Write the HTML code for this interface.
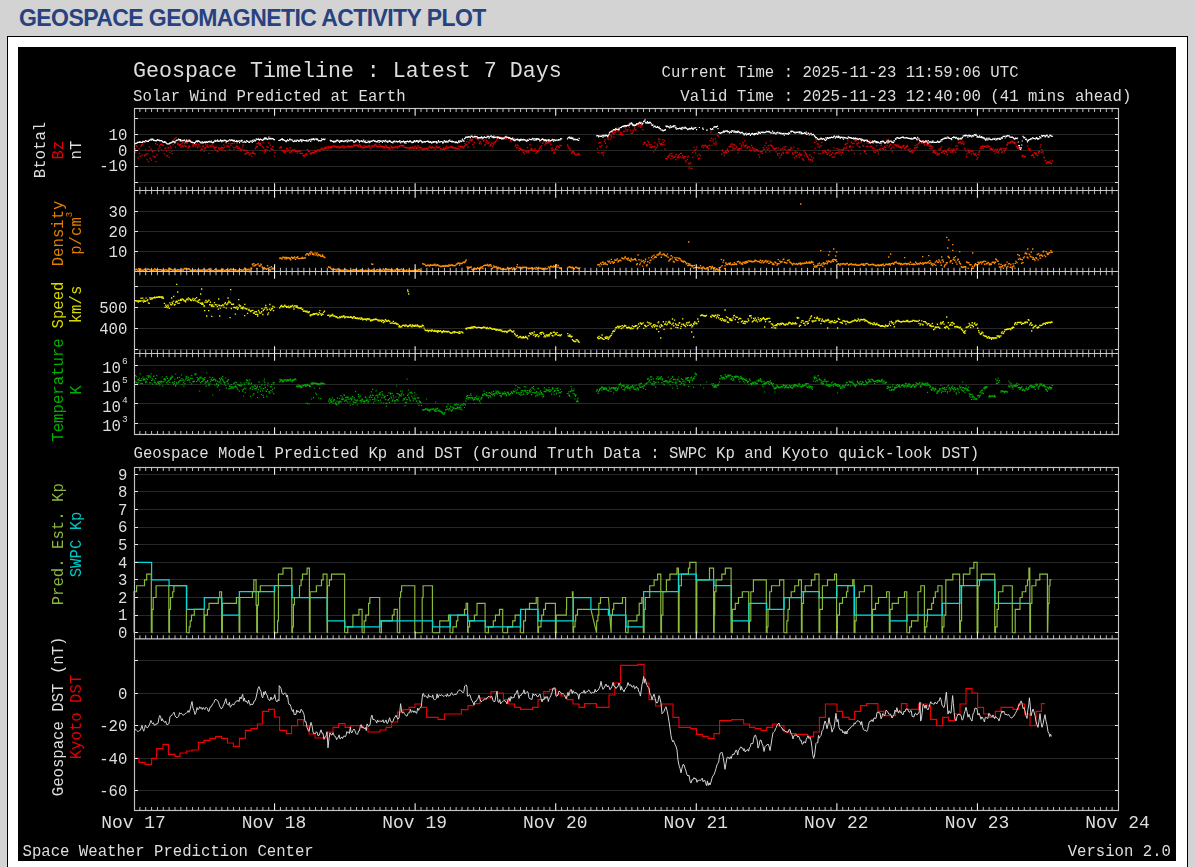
<!DOCTYPE html>
<html lang="en"><head><meta charset="utf-8"><title>Geospace Geomagnetic Activity Plot</title>
<style>
html,body{margin:0;padding:0}
body{background:#d3d3d3;width:1195px;height:867px;overflow:hidden;position:relative;font-family:"Liberation Sans",Arial,sans-serif}
h1{position:absolute;left:19px;top:4px;margin:0;font-size:23px;line-height:28px;font-weight:bold;color:#264280;letter-spacing:-0.58px;white-space:nowrap}
.box{position:absolute;left:7px;top:36px;width:1179px;height:840px;background:#fff;border:1px solid #000;box-sizing:content-box}
svg{position:absolute;left:18px;top:47px;display:block;will-change:transform;font-family:"Liberation Mono","DejaVu Sans Mono",monospace}
</style></head><body>
<h1>GEOSPACE GEOMAGNETIC ACTIVITY PLOT</h1>
<div class="box"></div>
<svg width="1158" height="814" viewBox="18 47 1158 814">
<rect x="18" y="47" width="1158" height="814" fill="#000"/>
<line x1="134.5" x2="1118.5" y1="118.5" y2="118.5" stroke="#282828" stroke-width="1"/>
<line x1="134.5" x2="1118.5" y1="134.5" y2="134.5" stroke="#282828" stroke-width="1"/>
<line x1="134.5" x2="1118.5" y1="150.5" y2="150.5" stroke="#282828" stroke-width="1"/>
<line x1="134.5" x2="1118.5" y1="166.5" y2="166.5" stroke="#282828" stroke-width="1"/>
<line x1="134.5" x2="1118.5" y1="182.5" y2="182.5" stroke="#282828" stroke-width="1"/>
<line x1="134.5" x2="1118.5" y1="211.5" y2="211.5" stroke="#282828" stroke-width="1"/>
<line x1="134.5" x2="1118.5" y1="231.5" y2="231.5" stroke="#282828" stroke-width="1"/>
<line x1="134.5" x2="1118.5" y1="251.5" y2="251.5" stroke="#282828" stroke-width="1"/>
<line x1="134.5" x2="1118.5" y1="286.5" y2="286.5" stroke="#282828" stroke-width="1"/>
<line x1="134.5" x2="1118.5" y1="307.5" y2="307.5" stroke="#282828" stroke-width="1"/>
<line x1="134.5" x2="1118.5" y1="328.5" y2="328.5" stroke="#282828" stroke-width="1"/>
<line x1="134.5" x2="1118.5" y1="349.5" y2="349.5" stroke="#282828" stroke-width="1"/>
<line x1="134.5" x2="1118.5" y1="365.5" y2="365.5" stroke="#282828" stroke-width="1"/>
<line x1="134.5" x2="1118.5" y1="384.5" y2="384.5" stroke="#282828" stroke-width="1"/>
<line x1="134.5" x2="1118.5" y1="403.5" y2="403.5" stroke="#282828" stroke-width="1"/>
<line x1="134.5" x2="1118.5" y1="423.5" y2="423.5" stroke="#282828" stroke-width="1"/>
<line x1="134.5" x2="1118.5" y1="474.5" y2="474.5" stroke="#282828" stroke-width="1"/>
<line x1="134.5" x2="1118.5" y1="491.5" y2="491.5" stroke="#282828" stroke-width="1"/>
<line x1="134.5" x2="1118.5" y1="509.5" y2="509.5" stroke="#282828" stroke-width="1"/>
<line x1="134.5" x2="1118.5" y1="527.5" y2="527.5" stroke="#282828" stroke-width="1"/>
<line x1="134.5" x2="1118.5" y1="544.5" y2="544.5" stroke="#282828" stroke-width="1"/>
<line x1="134.5" x2="1118.5" y1="562.5" y2="562.5" stroke="#282828" stroke-width="1"/>
<line x1="134.5" x2="1118.5" y1="579.5" y2="579.5" stroke="#282828" stroke-width="1"/>
<line x1="134.5" x2="1118.5" y1="597.5" y2="597.5" stroke="#282828" stroke-width="1"/>
<line x1="134.5" x2="1118.5" y1="615.5" y2="615.5" stroke="#282828" stroke-width="1"/>
<line x1="134.5" x2="1118.5" y1="632.5" y2="632.5" stroke="#282828" stroke-width="1"/>
<line x1="134.5" x2="1118.5" y1="660.5" y2="660.5" stroke="#282828" stroke-width="1"/>
<line x1="134.5" x2="1118.5" y1="693.5" y2="693.5" stroke="#282828" stroke-width="1"/>
<line x1="134.5" x2="1118.5" y1="725.5" y2="725.5" stroke="#282828" stroke-width="1"/>
<line x1="134.5" x2="1118.5" y1="758.5" y2="758.5" stroke="#282828" stroke-width="1"/>
<line x1="134.5" x2="1118.5" y1="790.5" y2="790.5" stroke="#282828" stroke-width="1"/>
<path d="M134.8 149.0h1.3M135.1 152.2h1.3M135.7 145.6h1.3M136.3 146.5h1.3M137.3 141.4h1.3M137.7 157.8h1.3M138.4 148.8h1.3M138.8 153.7h1.3M139.8 156.0h1.3M140.4 146.2h1.3M140.7 144.8h1.3M141.6 155.2h1.3M142.0 144.1h1.3M142.8 142.7h1.3M143.4 142.7h1.3M143.9 155.7h1.3M144.5 155.0h1.3M145.0 149.8h1.3M145.6 154.1h1.3M146.3 159.6h1.3M147.1 153.7h1.3M147.8 161.7h1.3M148.2 150.3h1.3M148.9 146.8h1.3M149.4 158.4h1.3M150.3 149.2h1.3M150.8 160.1h1.3M151.2 150.2h1.3M151.8 151.7h1.3M152.6 156.2h1.3M153.2 150.6h1.3M154.0 157.3h1.3M154.4 156.7h1.3M155.0 143.5h1.3M155.5 161.6h1.3M156.2 154.8h1.3M156.8 144.3h1.3M157.5 149.2h1.3M158.1 151.3h1.3M158.7 145.9h1.3M159.3 147.7h1.3M160.1 144.4h1.3M160.6 144.2h1.3M161.3 149.8h1.3M161.8 144.8h1.3M162.6 145.5h1.3M163.1 142.2h1.3M163.8 153.8h1.3M164.3 148.3h1.3M165.1 148.1h1.3M165.7 150.9h1.3M166.1 155.9h1.3M167.0 155.6h1.3M167.4 147.5h1.3M168.0 147.9h1.3M168.6 157.3h1.3M169.2 152.3h1.3M169.9 146.1h1.3M170.4 148.2h1.3M171.2 151.1h1.3M171.7 153.6h1.3M172.5 144.8h1.3M173.0 141.6h1.3M173.5 139.5h1.3M174.4 138.3h1.3M174.7 147.1h1.3M175.5 137.5h1.3M176.0 140.0h1.3M176.7 144.0h1.3M177.4 143.1h1.3M178.2 144.6h1.3M178.8 145.4h1.3M179.1 145.6h1.3M179.8 144.3h1.3M180.4 147.0h1.3M181.3 143.5h1.3M181.9 146.0h1.3M182.4 142.7h1.3M183.1 146.8h1.3M183.7 145.4h1.3M184.1 143.4h1.3M185.0 146.1h1.3M185.5 146.5h1.3M186.1 142.8h1.3M186.5 143.3h1.3M187.5 148.0h1.3M188.0 147.2h1.3M188.5 145.7h1.3M189.0 146.6h1.3M189.8 140.6h1.3M190.5 142.4h1.3M191.1 141.6h1.3M191.8 145.9h1.3M192.3 144.1h1.3M192.8 146.0h1.3M193.4 144.4h1.3M194.2 143.9h1.3M194.9 146.2h1.3M195.2 144.5h1.3M195.9 144.1h1.3M196.7 147.5h1.3M197.3 146.8h1.3M198.1 144.1h1.3M198.5 145.2h1.3M199.3 147.1h1.3M199.8 150.2h1.3M200.2 143.6h1.3M200.9 149.1h1.3M201.6 149.3h1.3M202.2 146.2h1.3M202.6 146.4h1.3M203.6 151.4h1.3M204.1 148.6h1.3M204.6 147.7h1.3M205.2 144.5h1.3M206.0 146.4h1.3M206.6 147.0h1.3M207.0 144.9h1.3M207.9 147.1h1.3M208.3 153.3h1.3M209.2 145.7h1.3M209.6 141.4h1.3M210.1 146.3h1.3M211.0 142.1h1.3M211.3 144.8h1.3M212.1 146.2h1.3M212.8 143.2h1.3M213.3 147.0h1.3M213.8 148.8h1.3M214.5 147.5h1.3M215.3 150.1h1.3M215.7 147.2h1.3M216.6 151.2h1.3M217.2 151.5h1.3M217.9 148.0h1.3M218.1 148.1h1.3M218.7 149.6h1.3M219.6 148.4h1.3M220.3 148.3h1.3M220.9 147.5h1.3M221.4 150.0h1.3M222.0 147.9h1.3M222.6 148.0h1.3M223.1 144.9h1.3M224.1 147.2h1.3M224.5 150.9h1.3M225.0 142.6h1.3M225.7 143.1h1.3M226.2 146.2h1.3M226.9 146.0h1.3M227.7 146.4h1.3M228.2 143.7h1.3M228.8 147.1h1.3M229.3 149.7h1.3M230.2 145.4h1.3M230.6 143.7h1.3M231.4 143.6h1.3M232.0 143.3h1.3M232.5 147.2h1.3M233.3 149.2h1.3M233.8 143.1h1.3M234.5 147.7h1.3M235.3 147.6h1.3M235.9 146.0h1.3M236.4 143.7h1.3M237.0 148.3h1.3M237.3 146.7h1.3M238.1 148.4h1.3M238.9 148.1h1.3M239.3 150.7h1.3M240.1 149.1h1.3M240.5 150.9h1.3M241.2 149.3h1.3M241.9 147.1h1.3M242.5 145.0h1.3M243.1 150.5h1.3M243.5 149.9h1.3M244.4 154.0h1.3M245.0 150.5h1.3M245.4 153.5h1.3M246.2 153.0h1.3M246.7 150.6h1.3M247.4 152.6h1.3M248.0 152.4h1.3M248.7 154.6h1.3M249.2 155.0h1.3M250.0 153.3h1.3M250.5 153.2h1.3M251.2 156.4h1.3M251.9 153.0h1.3M252.3 152.0h1.3M252.9 153.3h1.3M253.5 153.3h1.3M254.4 154.0h1.3M254.8 148.5h1.3M255.6 147.0h1.3M256.2 143.6h1.3M256.7 146.7h1.3M257.6 143.4h1.3M258.0 142.7h1.3M258.5 144.0h1.3M259.4 145.4h1.3M259.8 143.5h1.3M260.4 144.8h1.3M261.3 150.7h1.3M261.7 146.7h1.3M262.4 142.7h1.3M263.0 147.8h1.3M263.6 153.0h1.3M264.3 150.0h1.3M264.7 151.3h1.3M265.4 149.6h1.3M266.2 146.7h1.3M266.6 150.6h1.3M267.4 147.6h1.3M268.1 143.0h1.3M268.5 139.1h1.3M269.3 151.1h1.3M269.6 145.1h1.3M270.5 148.7h1.3M271.2 149.5h1.3M271.6 149.4h1.3M272.2 146.6h1.3M272.9 150.1h1.3M273.7 155.9h1.3M274.2 152.6h1.3M279.1 148.2h1.3M279.6 147.4h1.3M280.4 146.7h1.3M280.7 147.9h1.3M281.4 150.6h1.3M282.2 150.9h1.3M282.7 151.4h1.3M283.5 152.7h1.3M283.8 150.4h1.3M284.7 151.6h1.3M285.2 151.5h1.3M285.9 148.5h1.3M286.6 150.8h1.3M286.9 148.6h1.3M287.5 150.7h1.3M288.5 150.7h1.3M289.1 152.5h1.3M289.6 147.9h1.3M290.3 151.8h1.3M290.9 151.6h1.3M291.4 151.8h1.3M292.0 149.9h1.3M292.6 150.3h1.3M293.2 150.7h1.3M294.0 149.8h1.3M294.6 150.6h1.3M295.0 151.5h1.3M295.6 150.8h1.3M296.3 151.3h1.3M296.8 153.0h1.3M297.7 151.1h1.3M298.4 150.8h1.3M298.7 151.6h1.3M299.5 153.3h1.3M300.1 151.1h1.3M300.7 153.2h1.3M301.5 153.6h1.3M301.8 153.6h1.3M302.5 155.3h1.3M303.3 155.5h1.3M303.6 156.4h1.3M304.5 154.7h1.3M304.9 154.6h1.3M305.6 154.4h1.3M306.2 153.5h1.3M306.8 149.6h1.3M307.6 150.5h1.3M307.9 151.6h1.3M308.8 151.6h1.3M309.5 153.6h1.3M310.2 153.2h1.3M310.4 154.2h1.3M311.3 152.8h1.3M311.7 152.5h1.3M312.4 152.6h1.3M313.1 153.5h1.3M313.8 152.2h1.3M314.3 150.6h1.3M314.8 151.8h1.3M315.7 151.1h1.3M316.1 151.7h1.3M316.9 149.9h1.3M317.4 150.7h1.3M318.0 150.4h1.3M318.6 149.9h1.3M319.3 151.4h1.3M319.8 149.8h1.3M320.4 148.9h1.3M321.1 147.9h1.3M321.9 149.4h1.3M322.3 148.9h1.3M323.1 149.4h1.3M323.7 147.4h1.3M324.2 148.6h1.3M324.9 148.0h1.3M325.4 148.3h1.3M326.0 147.2h1.3M326.7 146.9h1.3M327.5 148.4h1.3M328.0 146.7h1.3M328.6 147.5h1.3M329.4 147.4h1.3M329.8 146.7h1.3M330.6 148.0h1.3M330.9 147.2h1.3M331.8 146.4h1.3M332.5 146.0h1.3M332.8 146.2h1.3M333.7 146.1h1.3M334.3 146.8h1.3M334.6 146.2h1.3M335.3 147.2h1.3M336.0 147.5h1.3M336.5 146.6h1.3M337.3 146.5h1.3M337.9 147.0h1.3M338.6 148.0h1.3M339.1 147.4h1.3M339.6 147.0h1.3M340.4 146.6h1.3M341.1 147.1h1.3M341.5 147.3h1.3M342.3 145.7h1.3M342.9 147.2h1.3M343.6 148.1h1.3M344.1 146.3h1.3M344.8 147.1h1.3M345.4 147.2h1.3M346.0 147.1h1.3M346.5 146.9h1.3M347.4 145.8h1.3M347.9 146.5h1.3M348.5 147.2h1.3M348.9 146.8h1.3M349.8 146.2h1.3M350.1 147.1h1.3M350.9 146.4h1.3M351.5 147.0h1.3M352.1 146.9h1.3M352.7 145.5h1.3M353.6 145.9h1.3M353.9 144.8h1.3M354.7 145.9h1.3M355.4 145.3h1.3M355.9 144.9h1.3M356.4 145.5h1.3M357.2 145.6h1.3M357.7 146.7h1.3M358.2 145.4h1.3M358.9 144.5h1.3M359.7 146.7h1.3M360.2 145.3h1.3M360.9 146.6h1.3M361.5 147.0h1.3M362.1 147.8h1.3M362.8 147.6h1.3M363.4 145.6h1.3M363.8 147.5h1.3M364.7 146.3h1.3M365.0 147.4h1.3M365.8 146.4h1.3M366.4 146.6h1.3M366.9 147.3h1.3M367.6 145.8h1.3M368.5 146.9h1.3M368.7 146.0h1.3M369.5 147.8h1.3M370.0 148.1h1.3M370.6 146.2h1.3M371.4 146.8h1.3M371.8 145.9h1.3M372.6 145.9h1.3M373.4 146.9h1.3M374.0 145.3h1.3M374.6 144.5h1.3M375.2 144.8h1.3M375.6 145.6h1.3M376.4 146.9h1.3M376.9 146.7h1.3M377.6 146.1h1.3M378.4 146.6h1.3M378.8 144.4h1.3M379.3 146.9h1.3M380.1 146.0h1.3M380.6 146.6h1.3M381.1 146.5h1.3M381.8 146.3h1.3M382.4 147.9h1.3M383.1 146.6h1.3M384.0 147.8h1.3M384.3 147.0h1.3M384.9 145.2h1.3M385.8 147.5h1.3M386.2 146.2h1.3M387.0 147.7h1.3M387.4 147.6h1.3M388.1 148.9h1.3M388.7 147.4h1.3M389.5 149.0h1.3M390.1 146.2h1.3M390.8 147.8h1.3M391.2 146.9h1.3M392.0 147.4h1.3M392.3 148.9h1.3M393.0 147.3h1.3M393.5 147.4h1.3M394.2 147.6h1.3M394.9 146.6h1.3M395.5 146.8h1.3M396.2 147.2h1.3M396.7 148.3h1.3M397.2 146.3h1.3M397.8 146.6h1.3M398.5 146.7h1.3M399.2 145.7h1.3M399.8 145.4h1.3M400.4 145.6h1.3M401.1 146.0h1.3M401.9 145.4h1.3M402.5 146.0h1.3M403.0 145.5h1.3M403.5 147.3h1.3M404.1 147.3h1.3M404.8 147.7h1.3M405.4 147.3h1.3M405.9 147.7h1.3M406.6 147.9h1.3M407.5 148.1h1.3M407.9 148.0h1.3M408.6 149.0h1.3M409.3 147.4h1.3M409.9 147.9h1.3M410.3 148.7h1.3M410.9 147.7h1.3M411.8 146.8h1.3M412.4 147.8h1.3M412.9 148.9h1.3M413.5 148.1h1.3M414.0 147.5h1.3M414.7 146.3h1.3M415.6 148.3h1.3M416.0 147.5h1.3M416.5 148.4h1.3M417.4 145.7h1.3M417.7 146.8h1.3M418.6 149.2h1.3M419.1 147.3h1.3M419.9 147.3h1.3M420.2 148.9h1.3M421.0 147.9h1.3M421.8 149.2h1.3M422.1 149.7h1.3M422.7 149.2h1.3M423.3 148.4h1.3M424.0 149.1h1.3M424.6 148.6h1.3M425.1 149.1h1.3M425.8 148.1h1.3M426.6 148.8h1.3M427.0 149.6h1.3M427.7 148.1h1.3M428.3 147.3h1.3M428.9 146.9h1.3M429.6 146.1h1.3M430.2 147.7h1.3M430.9 148.3h1.3M431.6 146.8h1.3M432.1 147.2h1.3M432.7 147.8h1.3M433.6 147.6h1.3M433.9 147.8h1.3M434.8 149.4h1.3M435.2 146.9h1.3M435.9 146.2h1.3M436.6 148.0h1.3M437.2 147.2h1.3M437.6 147.4h1.3M438.2 147.7h1.3M438.8 147.2h1.3M439.8 148.6h1.3M440.2 148.9h1.3M440.7 149.3h1.3M441.5 149.4h1.3M442.0 149.4h1.3M442.8 148.0h1.3M443.4 149.7h1.3M444.0 149.0h1.3M444.6 148.3h1.3M445.0 147.8h1.3M445.7 146.5h1.3M446.3 148.7h1.3M447.0 147.2h1.3M447.8 147.9h1.3M448.3 147.3h1.3M449.1 147.3h1.3M449.5 147.1h1.3M450.3 146.4h1.3M450.9 147.9h1.3M451.4 146.7h1.3M451.8 147.7h1.3M452.5 147.4h1.3M453.0 148.3h1.3M453.9 147.7h1.3M454.4 147.7h1.3M455.2 148.6h1.3M455.5 148.5h1.3M456.1 148.2h1.3M457.0 149.0h1.3M457.7 146.4h1.3M458.2 148.9h1.3M459.0 149.1h1.3M459.3 146.4h1.3M460.0 146.9h1.3M460.6 146.5h1.3M461.3 146.3h1.3M461.9 147.2h1.3M462.4 147.9h1.3M463.1 147.1h1.3M463.7 145.8h1.3M464.4 143.6h1.3M464.9 145.4h1.3M465.6 144.6h1.3M466.1 141.7h1.3M466.9 139.4h1.3M467.3 147.0h1.3M468.1 142.1h1.3M468.5 142.5h1.3M469.2 140.3h1.3M469.9 139.3h1.3M470.4 140.1h1.3M471.0 141.1h1.3M471.7 139.5h1.3M472.3 144.7h1.3M473.1 147.1h1.3M473.8 142.7h1.3M474.1 137.6h1.3M475.1 138.3h1.3M475.5 138.4h1.3M476.4 137.3h1.3M476.9 138.9h1.3M477.6 139.6h1.3M477.9 139.5h1.3M478.8 143.7h1.3M479.2 142.5h1.3M479.8 141.6h1.3M480.6 143.8h1.3M481.3 139.5h1.3M481.7 139.3h1.3M482.4 138.0h1.3M483.0 140.6h1.3M483.6 139.9h1.3M484.2 145.3h1.3M484.8 144.5h1.3M485.6 142.7h1.3M485.9 140.1h1.3M486.6 141.2h1.3M487.3 143.7h1.3M487.9 143.2h1.3M488.4 142.2h1.3M489.3 145.8h1.3M489.9 145.3h1.3M490.3 144.6h1.3M491.1 143.1h1.3M491.7 146.3h1.3M492.3 143.1h1.3M492.8 144.9h1.3M493.5 142.9h1.3M494.3 142.0h1.3M494.9 141.6h1.3M495.6 140.9h1.3M496.2 139.3h1.3M496.6 137.8h1.3M497.2 137.0h1.3M497.7 138.2h1.3M498.5 137.5h1.3M499.1 137.1h1.3M499.7 138.0h1.3M500.2 137.3h1.3M500.9 138.5h1.3M501.6 137.8h1.3M502.1 138.5h1.3M502.7 137.8h1.3M503.4 138.1h1.3M504.1 139.0h1.3M504.8 138.7h1.3M505.3 139.0h1.3M505.8 138.0h1.3M506.7 137.0h1.3M507.2 137.5h1.3M507.7 138.1h1.3M508.4 137.6h1.3M508.8 138.4h1.3M509.8 140.0h1.3M510.2 141.3h1.3M511.0 139.5h1.3M511.7 138.7h1.3M512.1 139.7h1.3M512.8 139.0h1.3M513.4 140.6h1.3M514.2 140.3h1.3M514.8 146.2h1.3M515.3 144.8h1.3M515.8 147.9h1.3M516.5 147.6h1.3M516.9 145.1h1.3M517.7 145.8h1.3M518.4 148.6h1.3M518.8 150.7h1.3M519.6 148.1h1.3M520.0 149.4h1.3M520.8 149.4h1.3M521.3 150.7h1.3M522.2 150.0h1.3M522.7 152.3h1.3M523.1 150.1h1.3M523.8 153.5h1.3M524.6 151.1h1.3M524.9 151.2h1.3M525.9 152.1h1.3M526.3 151.3h1.3M526.8 147.7h1.3M527.7 152.1h1.3M528.2 150.9h1.3M528.9 150.6h1.3M529.4 144.7h1.3M530.2 149.2h1.3M530.8 149.8h1.3M531.1 148.6h1.3M531.9 150.4h1.3M532.5 150.2h1.3M533.2 150.8h1.3M533.9 150.3h1.3M534.4 148.6h1.3M535.2 153.3h1.3M535.5 150.7h1.3M536.1 152.9h1.3M537.0 151.6h1.3M537.6 150.6h1.3M538.3 150.5h1.3M538.7 148.7h1.3M539.5 146.8h1.3M539.9 146.7h1.3M540.5 148.8h1.3M541.1 145.7h1.3M541.9 143.3h1.3M542.4 142.8h1.3M543.0 140.8h1.3M543.6 141.1h1.3M544.3 144.8h1.3M544.9 142.8h1.3M545.7 143.6h1.3M546.0 141.9h1.3M546.9 142.2h1.3M547.3 143.4h1.3M548.3 142.2h1.3M548.6 140.4h1.3M549.2 142.5h1.3M550.1 144.5h1.3M550.7 148.4h1.3M551.3 150.5h1.3M551.8 148.1h1.3M552.4 149.8h1.3M553.1 153.4h1.3M553.8 152.6h1.3M554.3 150.0h1.3M555.0 148.7h1.3M555.6 147.1h1.3M556.3 149.6h1.3M556.6 145.9h1.3M557.6 146.7h1.3M557.9 146.7h1.3M558.6 147.5h1.3M559.3 145.5h1.3M559.7 145.4h1.3M560.6 145.6h1.3M567.0 144.9h1.3M567.4 146.4h1.3M568.1 147.8h1.3M568.9 148.8h1.3M569.4 149.0h1.3M570.1 150.8h1.3M570.6 153.6h1.3M571.5 152.7h1.3M571.8 151.8h1.3M572.5 151.7h1.3M573.3 152.1h1.3M573.8 153.5h1.3M574.6 154.7h1.3M574.9 154.6h1.3M575.6 155.1h1.3M576.4 154.2h1.3M577.0 154.5h1.3M577.4 154.7h1.3M578.0 153.5h1.3M578.9 155.0h1.3M596.9 148.6h1.3M597.5 152.4h1.3M598.2 143.0h1.3M599.1 146.7h1.3M599.5 142.7h1.3M599.9 146.7h1.3M600.7 153.0h1.3M601.4 145.4h1.3M601.9 152.8h1.3M602.7 155.0h1.3M603.1 152.1h1.3M603.8 141.5h1.3M604.3 139.9h1.3M604.9 143.3h1.3M605.7 147.6h1.3M606.4 146.1h1.3M607.1 138.9h1.3M607.5 137.0h1.3M608.1 139.5h1.3M608.8 132.2h1.3M609.3 135.2h1.3M610.1 138.9h1.3M610.7 135.8h1.3M611.1 137.2h1.3M611.8 132.8h1.3M612.6 134.0h1.3M613.2 137.2h1.3M613.6 132.6h1.3M614.3 130.5h1.3M614.9 132.2h1.3M615.5 128.0h1.3M616.1 130.0h1.3M617.0 130.1h1.3M617.5 131.7h1.3M618.1 127.7h1.3M618.7 130.1h1.3M619.3 134.6h1.3M620.0 132.5h1.3M620.7 134.5h1.3M621.1 132.9h1.3M621.9 134.8h1.3M622.3 134.7h1.3M623.1 131.5h1.3M623.5 127.5h1.3M624.3 131.2h1.3M625.0 127.8h1.3M625.5 129.6h1.3M626.1 125.9h1.3M626.7 131.2h1.3M627.3 129.8h1.3M628.2 124.2h1.3M628.8 127.3h1.3M629.1 124.6h1.3M629.9 130.2h1.3M630.3 133.4h1.3M631.2 124.8h1.3M631.9 133.0h1.3M632.5 130.4h1.3M632.9 131.0h1.3M633.7 128.8h1.3M634.1 127.4h1.3M634.7 129.6h1.3M635.3 130.1h1.3M636.0 124.8h1.3M636.8 124.7h1.3M637.5 124.9h1.3M637.8 124.3h1.3M638.3 126.4h1.3M639.3 124.6h1.3M639.7 126.1h1.3M640.3 127.4h1.3M641.0 125.7h1.3M641.7 125.2h1.3M642.3 129.6h1.3M642.8 144.4h1.3M643.4 143.0h1.3M644.0 143.2h1.3M644.7 142.4h1.3M645.6 144.7h1.3M646.0 144.7h1.3M646.5 145.9h1.3M647.1 141.1h1.3M648.0 142.1h1.3M648.5 144.9h1.3M649.0 146.9h1.3M649.8 147.1h1.3M650.2 144.7h1.3M650.9 147.8h1.3M651.6 146.5h1.3M652.1 146.9h1.3M653.0 151.8h1.3M653.6 146.5h1.3M654.2 142.6h1.3M654.6 149.3h1.3M655.4 147.7h1.3M656.1 147.4h1.3M656.5 144.1h1.3M657.0 145.7h1.3M657.7 139.2h1.3M658.3 141.8h1.3M659.0 139.5h1.3M659.4 143.6h1.3M660.1 144.6h1.3M660.9 143.3h1.3M661.5 144.6h1.3M662.1 139.6h1.3M662.6 142.4h1.3M663.2 144.5h1.3M663.8 140.6h1.3M664.5 149.0h1.3M665.2 158.7h1.3M665.7 158.4h1.3M666.5 158.8h1.3M667.3 156.6h1.3M667.8 157.4h1.3M668.3 155.6h1.3M668.7 155.4h1.3M669.6 153.9h1.3M670.1 158.9h1.3M670.7 155.8h1.3M671.2 153.5h1.3M671.9 156.0h1.3M672.7 158.2h1.3M673.4 157.2h1.3M673.7 157.3h1.3M674.6 156.5h1.3M675.3 159.5h1.3M675.5 154.7h1.3M676.5 157.1h1.3M677.0 157.7h1.3M677.8 156.0h1.3M678.3 157.6h1.3M678.8 154.6h1.3M679.5 156.8h1.3M679.9 153.3h1.3M680.8 153.4h1.3M681.4 157.8h1.3M681.9 155.4h1.3M682.4 157.0h1.3M683.3 158.4h1.3M683.8 156.7h1.3M684.4 156.3h1.3M684.9 160.7h1.3M685.5 162.2h1.3M686.4 157.2h1.3M686.8 159.7h1.3M687.6 156.2h1.3M688.0 163.5h1.3M688.6 168.0h1.3M689.3 163.8h1.3M690.2 162.7h1.3M690.6 168.3h1.3M691.4 168.4h1.3M692.0 157.3h1.3M692.3 152.3h1.3M693.3 147.3h1.3M693.9 150.9h1.3M694.4 150.2h1.3M695.0 153.1h1.3M695.5 149.2h1.3M696.2 147.1h1.3M696.9 155.9h1.3M697.4 159.1h1.3M697.9 158.3h1.3M698.6 154.4h1.3M699.1 158.1h1.3M699.8 155.6h1.3M701.0 146.9h1.3M701.8 145.4h1.3M702.2 145.5h1.3M702.8 147.8h1.3M703.4 145.8h1.3M704.0 145.9h1.3M704.6 145.1h1.3M705.3 145.9h1.3M706.0 147.1h1.3M706.7 147.7h1.3M707.1 146.4h1.3M707.9 148.7h1.3M708.5 145.3h1.3M709.0 145.3h1.3M709.8 140.3h1.3M710.2 132.2h1.3M710.9 138.4h1.3M711.4 145.4h1.3M712.3 141.1h1.3M712.7 139.1h1.3M713.4 143.3h1.3M714.1 144.2h1.3M714.7 138.9h1.3M715.2 142.0h1.3M716.1 143.8h1.3M716.3 133.7h1.3M717.0 135.6h1.3M717.8 136.2h1.3M721.0 154.2h1.3M721.6 149.9h1.3M722.1 151.2h1.3M722.8 152.8h1.3M723.6 155.5h1.3M724.1 153.0h1.3M724.9 152.0h1.3M725.2 151.1h1.3M725.9 152.5h1.3M726.7 149.2h1.3M727.1 150.5h1.3M727.8 151.5h1.3M728.4 146.3h1.3M729.1 147.2h1.3M729.9 146.9h1.3M730.2 145.0h1.3M731.0 143.9h1.3M731.7 146.9h1.3M732.3 149.5h1.3M732.6 144.4h1.3M733.3 148.4h1.3M733.8 145.0h1.3M734.6 148.7h1.3M735.4 146.2h1.3M736.1 147.5h1.3M736.7 149.6h1.3M737.2 153.2h1.3M737.8 148.9h1.3M738.3 150.0h1.3M739.1 148.5h1.3M739.6 143.9h1.3M740.2 148.4h1.3M741.0 145.4h1.3M741.3 146.8h1.3M742.2 142.3h1.3M742.6 144.1h1.3M743.5 145.9h1.3M744.1 140.7h1.3M744.6 146.6h1.3M745.0 145.4h1.3M745.8 145.1h1.3M746.4 148.0h1.3M746.9 147.1h1.3M747.7 146.6h1.3M748.3 146.7h1.3M748.9 150.1h1.3M749.4 147.9h1.3M750.2 150.4h1.3M750.9 145.4h1.3M751.4 147.2h1.3M752.1 147.7h1.3M752.5 149.0h1.3M753.3 151.1h1.3M754.0 148.8h1.3M754.6 150.4h1.3M755.1 151.0h1.3M755.6 149.4h1.3M756.5 149.6h1.3M757.1 150.5h1.3M757.7 151.3h1.3M758.1 155.0h1.3M758.9 157.2h1.3M759.6 151.7h1.3M759.9 151.9h1.3M760.6 151.8h1.3M761.5 151.5h1.3M761.8 153.4h1.3M762.5 147.6h1.3M763.2 149.4h1.3M763.9 149.1h1.3M764.4 145.9h1.3M765.2 152.0h1.3M765.5 143.0h1.3M766.1 147.7h1.3M766.8 149.4h1.3M767.6 145.6h1.3M768.0 148.1h1.3M768.9 151.9h1.3M769.4 145.2h1.3M770.1 141.2h1.3M770.6 145.5h1.3M771.3 146.5h1.3M771.7 146.1h1.3M772.5 148.2h1.3M773.0 148.2h1.3M773.6 149.5h1.3M774.4 149.0h1.3M774.9 148.4h1.3M775.4 151.9h1.3M776.3 148.2h1.3M776.9 153.7h1.3M777.2 155.4h1.3M778.1 148.2h1.3M778.6 153.5h1.3M779.3 157.5h1.3M780.1 149.4h1.3M780.6 155.3h1.3M781.1 154.1h1.3M781.8 148.5h1.3M782.5 152.4h1.3M782.9 153.0h1.3M783.5 147.2h1.3M784.3 149.3h1.3M784.9 146.7h1.3M785.5 152.6h1.3M786.2 150.8h1.3M786.5 153.7h1.3M787.3 152.6h1.3M787.9 149.3h1.3M788.5 150.3h1.3M789.3 150.1h1.3M789.7 149.4h1.3M790.4 147.5h1.3M791.2 148.6h1.3M791.8 153.0h1.3M792.4 154.3h1.3M793.1 147.1h1.3M793.7 157.8h1.3M794.4 152.5h1.3M795.0 152.0h1.3M795.4 156.3h1.3M796.2 155.9h1.3M796.6 152.5h1.3M797.2 148.5h1.3M797.8 154.7h1.3M798.7 157.1h1.3M799.0 153.2h1.3M799.7 154.5h1.3M800.4 155.7h1.3M801.1 154.6h1.3M801.6 158.9h1.3M802.3 159.2h1.3M802.9 160.3h1.3M803.6 151.0h1.3M804.2 155.7h1.3M804.7 152.3h1.3M805.2 153.5h1.3M805.8 154.6h1.3M806.6 156.5h1.3M807.2 157.0h1.3M807.8 158.9h1.3M808.3 159.8h1.3M809.2 155.0h1.3M809.9 159.3h1.3M810.1 160.0h1.3M811.0 157.1h1.3M811.6 159.9h1.3M812.2 161.3h1.3M812.8 158.1h1.3M813.4 152.3h1.3M814.1 142.4h1.3M814.5 148.4h1.3M815.3 139.3h1.3M815.9 141.1h1.3M816.6 143.8h1.3M817.2 146.9h1.3M817.8 144.1h1.3M818.2 153.7h1.3M818.9 147.7h1.3M819.4 146.1h1.3M820.2 153.7h1.3M820.7 145.6h1.3M821.2 142.6h1.3M822.1 152.3h1.3M822.6 150.9h1.3M823.2 153.2h1.3M824.0 150.8h1.3M824.5 151.1h1.3M825.0 151.8h1.3M825.6 152.4h1.3M826.6 154.5h1.3M827.0 150.5h1.3M827.7 149.7h1.3M828.1 153.1h1.3M828.9 155.6h1.3M829.4 151.5h1.3M830.3 154.4h1.3M830.6 154.9h1.3M831.5 157.2h1.3M831.8 153.0h1.3M832.6 157.1h1.3M833.3 147.8h1.3M833.9 157.2h1.3M834.4 154.1h1.3M835.0 153.5h1.3M835.9 152.7h1.3M836.4 148.4h1.3M836.9 152.7h1.3M837.7 149.4h1.3M838.2 151.5h1.3M838.6 153.1h1.3M839.3 149.7h1.3M840.0 152.2h1.3M840.5 155.2h1.3M841.3 150.0h1.3M841.8 152.4h1.3M842.6 149.7h1.3M843.1 148.4h1.3M843.9 147.8h1.3M844.5 144.5h1.3M845.1 148.4h1.3M845.7 143.9h1.3M846.1 147.2h1.3M846.9 143.2h1.3M847.3 140.9h1.3M848.0 150.9h1.3M848.8 146.7h1.3M849.2 147.5h1.3M849.9 146.0h1.3M850.6 142.4h1.3M851.2 149.7h1.3M851.9 143.5h1.3M852.4 147.2h1.3M853.2 143.3h1.3M853.8 153.5h1.3M854.4 141.2h1.3M854.7 140.0h1.3M855.5 140.5h1.3M856.1 144.2h1.3M856.7 143.6h1.3M857.2 146.2h1.3M857.9 143.0h1.3M858.8 147.2h1.3M859.2 147.0h1.3M859.9 153.7h1.3M860.5 142.3h1.3M861.0 140.5h1.3M861.8 139.9h1.3M862.3 145.4h1.3M863.0 146.3h1.3M863.8 151.8h1.3M864.0 151.0h1.3M864.6 151.4h1.3M865.5 153.6h1.3M866.2 146.4h1.3M866.6 142.9h1.3M867.2 146.4h1.3M868.1 143.4h1.3M868.5 142.2h1.3M869.4 140.1h1.3M869.9 146.3h1.3M870.4 142.3h1.3M871.1 146.3h1.3M871.8 142.3h1.3M872.2 148.0h1.3M873.1 151.9h1.3M873.3 148.4h1.3M874.3 150.2h1.3M874.7 152.4h1.3M875.5 150.7h1.3M876.1 145.7h1.3M876.6 149.7h1.3M877.3 151.3h1.3M877.7 153.5h1.3M878.6 149.6h1.3M879.2 149.0h1.3M879.8 149.2h1.3M880.5 145.5h1.3M880.9 143.7h1.3M881.7 148.6h1.3M882.2 148.6h1.3M882.9 149.3h1.3M883.4 147.6h1.3M883.9 147.0h1.3M884.7 150.0h1.3M885.1 147.4h1.3M885.9 140.3h1.3M886.4 145.5h1.3M887.2 139.9h1.3M887.8 139.4h1.3M888.4 147.0h1.3M889.1 145.1h1.3M889.8 144.5h1.3M890.3 148.9h1.3M890.7 148.2h1.3M891.7 151.8h1.3M892.0 146.8h1.3M892.6 143.6h1.3M893.4 147.8h1.3M894.1 144.6h1.3M894.7 145.2h1.3M895.4 145.9h1.3M895.9 145.1h1.3M896.4 146.0h1.3M897.2 145.0h1.3M897.9 146.2h1.3M898.2 147.2h1.3M899.1 147.7h1.3M899.4 146.7h1.3M900.3 147.5h1.3M900.9 148.5h1.3M901.6 146.5h1.3M902.2 146.5h1.3M902.7 145.8h1.3M903.1 145.3h1.3M903.7 148.3h1.3M904.7 147.0h1.3M905.3 147.5h1.3M905.6 146.7h1.3M906.6 145.5h1.3M906.9 146.4h1.3M907.5 149.3h1.3M908.4 150.5h1.3M909.0 151.7h1.3M909.3 149.2h1.3M909.9 151.8h1.3M910.8 151.9h1.3M911.2 151.0h1.3M912.0 152.5h1.3M912.5 150.1h1.3M913.3 150.9h1.3M913.8 148.0h1.3M914.6 145.5h1.3M914.9 147.9h1.3M915.7 147.6h1.3M916.2 145.1h1.3M916.9 146.9h1.3M917.3 144.1h1.3M918.2 143.2h1.3M918.9 143.0h1.3M919.2 141.6h1.3M920.1 140.7h1.3M920.7 141.4h1.3M921.3 143.3h1.3M921.9 141.5h1.3M922.4 142.8h1.3M923.1 143.4h1.3M923.7 145.0h1.3M924.4 142.6h1.3M925.1 140.6h1.3M925.6 142.0h1.3M926.2 144.4h1.3M926.8 145.3h1.3M927.3 144.0h1.3M928.0 144.3h1.3M928.8 146.3h1.3M929.4 148.5h1.3M929.8 145.3h1.3M930.5 146.0h1.3M931.3 148.8h1.3M931.7 146.8h1.3M932.4 152.0h1.3M933.1 151.0h1.3M933.5 152.5h1.3M934.3 150.5h1.3M934.7 153.3h1.3M935.3 152.4h1.3M936.3 154.8h1.3M936.9 153.5h1.3M937.5 154.8h1.3M938.1 149.2h1.3M938.7 153.6h1.3M939.3 149.7h1.3M939.9 148.5h1.3M940.6 152.6h1.3M940.9 146.9h1.3M941.8 152.0h1.3M942.4 151.8h1.3M943.1 150.9h1.3M943.7 153.5h1.3M944.1 150.6h1.3M945.0 151.5h1.3M945.4 150.9h1.3M946.1 152.2h1.3M946.6 154.6h1.3M947.2 149.5h1.3M947.7 149.2h1.3M948.6 150.2h1.3M949.1 148.2h1.3M949.8 150.8h1.3M950.3 152.4h1.3M951.2 149.3h1.3M951.6 151.0h1.3M952.2 152.0h1.3M952.7 150.2h1.3M953.4 149.0h1.3M954.3 150.6h1.3M954.9 152.3h1.3M955.3 145.9h1.3M956.1 149.0h1.3M956.8 146.1h1.3M957.1 148.9h1.3M958.0 143.2h1.3M958.4 142.7h1.3M958.9 142.2h1.3M959.8 142.0h1.3M960.4 143.9h1.3M961.0 143.4h1.3M961.5 143.0h1.3M962.1 141.2h1.3M962.9 144.3h1.3M963.5 143.1h1.3M964.2 148.4h1.3M964.5 149.0h1.3M965.4 151.0h1.3M965.7 156.5h1.3M966.4 153.9h1.3M967.3 149.3h1.3M967.6 152.2h1.3M968.2 151.2h1.3M968.9 152.5h1.3M969.5 150.6h1.3M970.2 150.9h1.3M970.7 154.1h1.3M971.4 151.0h1.3M972.1 151.3h1.3M972.6 153.2h1.3M973.4 153.8h1.3M973.8 154.8h1.3M974.6 154.8h1.3M975.2 153.5h1.3M975.7 155.6h1.3M976.3 159.4h1.3M977.1 157.9h1.3M977.5 154.7h1.3M978.4 152.4h1.3M978.8 151.4h1.3M979.5 148.7h1.3M980.0 146.8h1.3M980.8 147.8h1.3M981.5 146.6h1.3M981.9 146.0h1.3M982.6 148.7h1.3M983.1 146.3h1.3M984.0 146.3h1.3M984.7 146.0h1.3M985.0 146.8h1.3M985.7 147.0h1.3M986.4 147.3h1.3M986.9 145.3h1.3M987.4 145.7h1.3M988.1 146.7h1.3M989.0 146.6h1.3M989.3 148.6h1.3M990.2 149.7h1.3M990.7 148.5h1.3M991.5 149.9h1.3M991.8 149.6h1.3M992.6 148.6h1.3M993.3 151.3h1.3M993.9 150.1h1.3M994.4 153.4h1.3M995.1 149.2h1.3M995.9 151.8h1.3M996.4 150.4h1.3M997.1 149.1h1.3M997.4 152.6h1.3M998.2 151.7h1.3M998.9 149.6h1.3M999.4 149.4h1.3M1000.2 148.1h1.3M1000.7 149.1h1.3M1001.1 152.3h1.3M1001.7 151.9h1.3M1002.5 148.4h1.3M1003.1 150.3h1.3M1003.7 151.8h1.3M1004.3 148.6h1.3M1004.9 149.5h1.3M1005.7 148.2h1.3M1006.2 145.2h1.3M1006.6 144.5h1.3M1007.3 142.9h1.3M1008.1 142.8h1.3M1008.6 143.1h1.3M1009.4 143.0h1.3M1009.8 142.0h1.3M1010.5 141.9h1.3M1011.3 141.0h1.3M1011.8 141.8h1.3M1012.3 142.0h1.3M1013.1 142.5h1.3M1013.7 143.7h1.3M1014.3 143.0h1.3M1015.0 142.8h1.3M1015.3 145.1h1.3M1016.1 146.7h1.3M1016.9 148.4h1.3M1017.4 147.2h1.3M1017.9 148.1h1.3M1018.7 149.3h1.3M1019.4 148.4h1.3M1019.9 149.1h1.3M1020.6 149.1h1.3M1021.5 156.5h1.3M1022.1 155.3h1.3M1022.5 155.9h1.3M1023.2 155.9h1.3M1023.8 156.4h1.3M1024.5 156.5h1.3M1026.9 146.1h1.3M1027.8 148.3h1.3M1028.4 149.2h1.3M1028.7 150.1h1.3M1029.4 148.8h1.3M1030.1 150.9h1.3M1030.9 155.5h1.3M1031.5 155.3h1.3M1032.0 154.3h1.3M1032.7 155.9h1.3M1033.3 157.3h1.3M1033.8 152.6h1.3M1034.5 153.1h1.3M1035.0 154.1h1.3M1035.7 153.3h1.3M1036.2 155.2h1.3M1036.9 155.6h1.3M1037.7 151.7h1.3M1038.0 152.8h1.3M1038.9 151.3h1.3M1039.6 147.1h1.3M1040.1 144.9h1.3M1040.6 152.3h1.3M1041.3 149.6h1.3M1042.1 151.7h1.3M1042.4 153.1h1.3M1043.3 157.4h1.3M1043.7 157.6h1.3M1044.5 160.8h1.3M1045.0 160.6h1.3M1045.5 163.6h1.3M1046.2 162.6h1.3M1046.9 162.0h1.3M1047.6 162.0h1.3M1047.9 162.4h1.3M1048.7 162.7h1.3M1049.5 161.1h1.3M1049.9 163.1h1.3M1050.5 163.7h1.3M1051.0 163.1h1.3M1051.9 161.0h1.3" stroke="#e00000" stroke-width="1.3" fill="none"/>
<path d="M134.9 143.7h1.2M135.7 143.0h1.2M136.3 143.4h1.2M136.9 142.5h1.2M137.5 142.3h1.2M138.0 142.5h1.2M138.9 142.5h1.2M139.3 141.5h1.2M139.8 142.0h1.2M140.4 142.4h1.2M141.4 142.4h1.2M141.9 142.3h1.2M142.3 141.3h1.2M142.9 141.5h1.2M143.8 141.5h1.2M144.3 141.8h1.2M144.9 140.5h1.2M145.4 140.7h1.2M146.2 141.5h1.2M147.0 141.5h1.2M147.2 141.0h1.2M147.9 141.4h1.2M148.5 140.3h1.2M149.1 140.2h1.2M149.8 139.8h1.2M150.5 139.2h1.2M151.2 140.1h1.2M151.8 139.2h1.2M152.5 139.4h1.2M153.0 140.3h1.2M153.8 140.4h1.2M154.3 140.6h1.2M154.8 140.6h1.2M155.5 141.0h1.2M155.9 140.3h1.2M156.9 139.7h1.2M157.3 140.2h1.2M157.7 140.3h1.2M158.5 140.1h1.2M159.2 141.0h1.2M159.8 140.6h1.2M160.2 140.6h1.2M161.1 140.6h1.2M161.6 141.4h1.2M162.2 141.8h1.2M162.7 142.1h1.2M163.6 142.5h1.2M164.0 141.6h1.2M165.0 142.1h1.2M165.6 143.2h1.2M165.8 143.0h1.2M166.6 143.9h1.2M167.2 144.0h1.2M168.0 143.8h1.2M168.6 143.9h1.2M169.1 143.2h1.2M169.9 143.1h1.2M170.4 142.7h1.2M171.0 142.6h1.2M171.5 142.2h1.2M172.4 141.0h1.2M172.7 141.9h1.2M173.5 141.7h1.2M174.2 142.8h1.2M174.8 142.0h1.2M175.5 140.7h1.2M175.8 140.6h1.2M176.7 140.0h1.2M177.2 140.1h1.2M178.0 139.0h1.2M178.5 139.6h1.2M178.9 139.6h1.2M179.6 140.8h1.2M180.1 139.7h1.2M180.8 141.0h1.2M181.3 140.8h1.2M182.3 140.3h1.2M182.7 140.7h1.2M183.5 140.4h1.2M184.0 140.0h1.2M184.6 142.0h1.2M185.4 140.9h1.2M186.0 140.2h1.2M186.3 141.7h1.2M187.0 141.1h1.2M187.9 141.1h1.2M188.4 140.2h1.2M189.1 140.4h1.2M189.4 141.3h1.2M190.0 141.3h1.2M190.7 142.4h1.2M191.5 142.2h1.2M192.2 142.6h1.2M192.5 142.5h1.2M193.3 142.5h1.2M193.9 143.3h1.2M194.6 142.5h1.2M195.2 141.3h1.2M195.9 141.4h1.2M196.3 140.9h1.2M196.8 141.8h1.2M197.6 140.5h1.2M198.1 141.4h1.2M198.8 141.4h1.2M199.4 142.2h1.2M200.0 142.3h1.2M200.7 143.0h1.2M201.5 141.6h1.2M202.0 142.8h1.2M202.6 143.0h1.2M203.1 142.7h1.2M203.7 141.9h1.2M204.4 142.4h1.2M205.1 142.6h1.2M205.5 141.7h1.2M206.3 142.1h1.2M206.8 142.5h1.2M207.6 141.6h1.2M208.1 141.9h1.2M208.6 141.3h1.2M209.3 141.9h1.2M209.9 141.9h1.2M210.8 141.0h1.2M211.3 142.3h1.2M211.8 142.7h1.2M212.7 142.3h1.2M213.0 142.2h1.2M213.5 141.7h1.2M214.3 140.4h1.2M215.0 141.4h1.2M215.6 140.8h1.2M216.2 140.9h1.2M217.0 140.2h1.2M217.3 141.2h1.2M218.3 141.4h1.2M218.6 141.2h1.2M219.4 140.8h1.2M220.0 139.9h1.2M220.7 140.8h1.2M221.2 141.7h1.2M221.7 140.7h1.2M222.4 140.9h1.2M222.9 140.8h1.2M223.6 140.1h1.2M224.4 140.7h1.2M225.1 140.4h1.2M225.7 141.8h1.2M226.0 141.0h1.2M226.7 141.4h1.2M227.6 140.9h1.2M227.8 140.9h1.2M228.8 139.9h1.2M229.0 139.8h1.2M229.7 140.7h1.2M230.6 139.8h1.2M231.2 140.4h1.2M231.5 139.9h1.2M232.2 140.7h1.2M233.2 140.4h1.2M233.4 141.5h1.2M234.0 140.3h1.2M235.0 141.5h1.2M235.6 141.5h1.2M236.1 140.5h1.2M236.5 141.8h1.2M237.1 141.3h1.2M237.9 141.2h1.2M238.6 140.8h1.2M239.0 142.6h1.2M239.7 141.0h1.2M240.6 141.4h1.2M240.8 140.3h1.2M241.5 140.4h1.2M242.2 142.1h1.2M243.0 142.0h1.2M243.3 142.2h1.2M244.2 141.4h1.2M244.7 142.0h1.2M245.3 142.3h1.2M246.1 140.6h1.2M246.7 141.4h1.2M247.1 141.4h1.2M247.9 142.1h1.2M248.3 142.2h1.2M249.0 142.4h1.2M249.6 141.2h1.2M250.5 141.0h1.2M251.0 141.1h1.2M251.7 142.4h1.2M252.1 140.3h1.2M252.7 141.4h1.2M253.6 139.9h1.2M254.2 140.9h1.2M254.8 140.9h1.2M255.2 140.4h1.2M255.7 138.9h1.2M256.6 139.3h1.2M257.3 139.5h1.2M257.9 138.8h1.2M258.6 140.1h1.2M259.0 139.7h1.2M259.8 139.1h1.2M260.4 139.5h1.2M260.8 139.7h1.2M261.6 140.2h1.2M262.2 140.3h1.2M262.9 139.1h1.2M263.5 139.4h1.2M264.0 138.2h1.2M264.5 137.8h1.2M265.0 139.0h1.2M265.7 138.2h1.2M266.3 139.1h1.2M267.0 139.4h1.2M267.7 138.9h1.2M268.3 137.1h1.2M269.0 138.6h1.2M269.6 138.8h1.2M270.0 138.4h1.2M270.9 138.8h1.2M271.6 138.5h1.2M272.1 138.7h1.2M272.8 139.0h1.2M273.2 139.7h1.2M273.9 139.6h1.2M278.3 140.5h1.2M278.9 140.4h1.2M279.4 140.4h1.2M280.2 139.7h1.2M281.0 139.4h1.2M281.6 138.7h1.2M282.0 139.8h1.2M282.7 139.6h1.2M283.4 140.1h1.2M283.9 140.5h1.2M284.7 140.8h1.2M285.4 141.4h1.2M285.7 141.7h1.2M286.3 140.6h1.2M287.0 139.9h1.2M287.8 140.7h1.2M288.2 140.7h1.2M289.0 139.3h1.2M289.5 139.0h1.2M290.3 140.0h1.2M290.7 139.9h1.2M291.4 139.8h1.2M292.1 141.0h1.2M292.8 141.4h1.2M293.3 141.7h1.2M294.0 140.8h1.2M294.4 140.3h1.2M295.3 141.5h1.2M295.8 141.2h1.2M296.4 140.0h1.2M297.1 140.3h1.2M297.8 140.9h1.2M298.3 141.4h1.2M298.7 140.9h1.2M299.5 140.1h1.2M300.3 139.6h1.2M300.7 140.9h1.2M301.3 141.7h1.2M301.8 140.1h1.2M302.7 140.2h1.2M303.0 140.5h1.2M304.0 140.5h1.2M304.3 140.6h1.2M304.9 140.7h1.2M305.6 140.9h1.2M306.2 140.2h1.2M306.8 141.0h1.2M307.6 141.1h1.2M308.3 140.2h1.2M308.8 139.5h1.2M309.4 139.9h1.2M310.1 141.3h1.2M310.6 139.2h1.2M311.1 139.8h1.2M311.9 139.1h1.2M312.3 139.3h1.2M312.9 138.6h1.2M313.7 139.9h1.2M314.4 139.2h1.2M315.0 139.0h1.2M315.8 138.8h1.2M316.2 139.7h1.2M316.9 139.1h1.2M317.4 140.2h1.2M318.0 140.9h1.2M318.8 140.6h1.2M319.1 140.5h1.2M320.1 140.8h1.2M320.7 140.7h1.2M321.0 138.9h1.2M321.9 139.7h1.2M322.6 139.4h1.2M322.8 139.2h1.2M323.9 139.6h1.2M324.3 139.1h1.2M329.7 140.3h1.2M330.1 140.8h1.2M330.8 140.5h1.2M331.4 141.2h1.2M332.0 141.4h1.2M332.9 142.2h1.2M333.1 141.3h1.2M334.1 141.8h1.2M334.5 141.0h1.2M335.1 141.6h1.2M335.8 140.9h1.2M336.4 140.1h1.2M337.1 140.4h1.2M337.7 141.1h1.2M338.3 141.1h1.2M339.0 142.4h1.2M339.7 140.9h1.2M340.3 141.3h1.2M340.6 140.6h1.2M341.2 141.4h1.2M341.8 140.8h1.2M342.8 141.3h1.2M343.4 141.6h1.2M343.7 141.2h1.2M344.6 141.2h1.2M345.1 140.6h1.2M345.6 140.4h1.2M346.5 141.9h1.2M346.9 141.5h1.2M347.4 140.1h1.2M348.0 141.0h1.2M348.8 140.8h1.2M349.4 140.9h1.2M350.1 140.6h1.2M350.5 140.2h1.2M351.2 140.7h1.2M351.8 140.5h1.2M352.6 141.1h1.2M353.0 142.1h1.2M353.8 142.2h1.2M354.5 141.8h1.2M354.9 140.8h1.2M355.5 141.5h1.2M356.2 140.0h1.2M356.7 140.1h1.2M357.7 140.4h1.2M358.3 140.9h1.2M358.8 142.1h1.2M359.4 141.2h1.2M360.1 141.2h1.2M360.6 141.2h1.2M361.3 140.7h1.2M361.7 141.5h1.2M362.4 141.8h1.2M363.0 140.2h1.2M363.8 141.3h1.2M364.2 142.1h1.2M365.1 141.1h1.2M365.4 142.6h1.2M366.3 142.5h1.2M366.7 142.5h1.2M367.4 141.2h1.2M368.2 141.7h1.2M368.6 142.7h1.2M369.3 141.2h1.2M369.8 142.0h1.2M370.7 141.5h1.2M371.0 141.2h1.2M371.6 141.2h1.2M372.5 140.5h1.2M373.1 140.4h1.2M373.6 140.9h1.2M374.2 141.5h1.2M374.8 141.1h1.2M375.7 142.0h1.2M375.9 141.7h1.2M376.8 141.1h1.2M377.3 142.0h1.2M377.9 140.5h1.2M378.7 142.1h1.2M379.2 140.7h1.2M380.0 141.5h1.2M380.6 141.0h1.2M381.0 141.2h1.2M381.8 142.3h1.2M382.4 140.7h1.2M383.0 141.2h1.2M383.7 141.2h1.2M384.2 141.6h1.2M384.9 140.3h1.2M385.2 140.6h1.2M386.1 141.7h1.2M386.7 141.4h1.2M387.2 142.5h1.2M388.1 141.2h1.2M388.6 141.4h1.2M389.1 140.7h1.2M389.6 141.1h1.2M390.2 141.8h1.2M390.9 142.4h1.2M391.7 142.1h1.2M392.3 142.8h1.2M393.0 141.7h1.2M393.5 141.2h1.2M393.9 141.1h1.2M394.5 142.0h1.2M395.5 141.0h1.2M396.0 141.5h1.2M396.7 142.1h1.2M397.3 141.7h1.2M398.0 141.7h1.2M398.6 141.4h1.2M399.2 140.7h1.2M399.5 142.2h1.2M400.2 143.0h1.2M400.8 141.7h1.2M401.6 141.5h1.2M402.1 141.8h1.2M402.9 141.2h1.2M403.4 141.6h1.2M403.9 142.8h1.2M404.7 141.7h1.2M405.3 143.1h1.2M405.7 141.6h1.2M406.5 141.4h1.2M407.0 141.2h1.2M407.8 141.8h1.2M408.5 141.5h1.2M408.9 141.7h1.2M409.5 140.6h1.2M410.1 141.7h1.2M411.0 142.1h1.2M411.5 142.6h1.2M412.0 142.2h1.2M412.8 142.3h1.2M413.3 141.4h1.2M413.8 140.7h1.2M414.6 141.8h1.2M415.3 141.1h1.2M415.8 140.5h1.2M416.3 141.4h1.2M417.0 140.8h1.2M417.7 142.3h1.2M418.2 141.2h1.2M418.7 141.3h1.2M419.5 140.4h1.2M420.2 140.6h1.2M420.7 141.4h1.2M421.5 142.6h1.2M421.8 141.8h1.2M422.6 142.1h1.2M423.4 141.9h1.2M423.8 141.7h1.2M424.5 142.1h1.2M425.1 141.7h1.2M425.5 141.5h1.2M426.4 141.4h1.2M427.1 141.2h1.2M427.6 141.7h1.2M428.2 141.4h1.2M428.6 142.5h1.2M429.5 142.1h1.2M430.0 141.5h1.2M430.7 142.3h1.2M431.2 143.1h1.2M432.1 142.1h1.2M432.6 141.7h1.2M433.1 142.5h1.2M433.6 141.9h1.2M434.3 141.7h1.2M435.0 142.0h1.2M435.8 141.7h1.2M436.0 142.8h1.2M436.7 142.9h1.2M437.6 141.7h1.2M437.9 140.6h1.2M438.7 142.2h1.2M439.5 141.8h1.2M440.0 141.9h1.2M440.5 141.5h1.2M441.3 141.5h1.2M442.0 142.3h1.2M442.3 143.2h1.2M443.0 142.1h1.2M443.7 140.7h1.2M444.4 141.6h1.2M445.0 142.1h1.2M445.5 141.2h1.2M446.2 141.8h1.2M447.0 141.8h1.2M447.4 142.2h1.2M447.8 140.9h1.2M448.8 140.9h1.2M449.2 140.1h1.2M449.9 141.5h1.2M450.6 141.3h1.2M451.2 142.0h1.2M451.6 141.2h1.2M452.3 142.0h1.2M452.9 141.7h1.2M453.6 142.0h1.2M454.4 142.1h1.2M454.7 142.6h1.2M455.6 141.8h1.2M456.0 142.4h1.2M456.7 142.8h1.2M457.4 142.6h1.2M458.0 141.5h1.2M458.4 140.7h1.2M459.0 142.1h1.2M460.0 141.1h1.2M460.3 140.9h1.2M461.0 141.3h1.2M461.8 139.2h1.2M462.3 140.1h1.2M462.7 140.9h1.2M463.4 141.2h1.2M464.0 138.7h1.2M464.9 137.9h1.2M465.2 137.1h1.2M465.9 137.1h1.2M466.7 137.5h1.2M467.3 136.9h1.2M468.0 137.2h1.2M468.5 136.6h1.2M469.2 137.0h1.2M469.8 137.7h1.2M470.5 136.1h1.2M471.0 136.3h1.2M471.4 136.1h1.2M472.1 137.2h1.2M472.6 137.0h1.2M473.3 137.2h1.2M473.9 136.4h1.2M474.5 136.4h1.2M475.1 136.6h1.2M475.8 136.7h1.2M476.6 136.9h1.2M477.2 138.2h1.2M477.8 137.7h1.2M478.6 138.2h1.2M478.8 137.5h1.2M479.8 137.5h1.2M480.3 138.1h1.2M480.8 136.8h1.2M481.5 137.4h1.2M482.0 138.2h1.2M482.6 138.0h1.2M483.2 137.3h1.2M483.9 136.9h1.2M484.7 137.5h1.2M485.2 137.6h1.2M485.7 137.7h1.2M486.6 136.3h1.2M487.0 136.9h1.2M487.7 136.4h1.2M488.4 138.2h1.2M488.8 137.0h1.2M489.6 136.5h1.2M490.2 136.0h1.2M490.7 135.9h1.2M491.4 137.2h1.2M492.2 136.6h1.2M492.7 137.7h1.2M493.4 136.1h1.2M493.7 137.7h1.2M494.6 137.4h1.2M495.3 137.2h1.2M495.8 137.2h1.2M496.5 137.2h1.2M497.0 137.8h1.2M497.7 137.2h1.2M498.4 137.4h1.2M498.9 138.4h1.2M499.6 137.9h1.2M500.1 138.4h1.2M500.6 137.9h1.2M501.2 138.8h1.2M502.0 138.2h1.2M502.5 138.8h1.2M503.2 138.1h1.2M503.8 138.0h1.2M504.5 137.2h1.2M505.3 136.3h1.2M505.7 137.2h1.2M506.4 137.5h1.2M506.9 137.5h1.2M507.5 137.4h1.2M508.0 138.2h1.2M508.8 137.7h1.2M509.3 138.1h1.2M510.0 138.4h1.2M510.6 139.1h1.2M511.2 138.6h1.2M512.0 138.2h1.2M512.4 139.6h1.2M513.0 140.2h1.2M513.6 139.0h1.2M514.2 140.6h1.2M515.0 139.9h1.2M515.6 139.4h1.2M516.3 139.6h1.2M517.0 139.2h1.2M517.5 140.2h1.2M518.2 139.9h1.2M518.9 140.9h1.2M519.2 139.6h1.2M519.8 140.4h1.2M520.4 139.2h1.2M521.3 140.1h1.2M521.7 139.7h1.2M522.6 139.9h1.2M523.2 139.3h1.2M523.8 139.8h1.2M524.1 139.9h1.2M524.7 140.1h1.2M525.4 140.7h1.2M526.2 141.4h1.2M526.7 139.9h1.2M527.4 140.5h1.2M527.9 140.5h1.2M528.6 139.2h1.2M529.3 139.3h1.2M530.0 139.5h1.2M530.6 139.7h1.2M531.2 139.6h1.2M531.6 138.8h1.2M532.2 138.3h1.2M533.1 139.1h1.2M533.5 140.5h1.2M534.1 138.9h1.2M535.0 140.0h1.2M535.5 138.6h1.2M536.1 139.9h1.2M536.6 138.9h1.2M537.5 138.7h1.2M537.8 139.5h1.2M538.7 139.3h1.2M539.2 140.8h1.2M539.7 140.5h1.2M540.5 140.0h1.2M540.9 139.6h1.2M541.8 138.9h1.2M542.1 139.3h1.2M542.7 139.3h1.2M543.4 140.4h1.2M544.3 139.7h1.2M544.7 140.7h1.2M545.3 140.2h1.2M545.9 141.0h1.2M546.5 140.0h1.2M547.2 140.0h1.2M547.8 140.8h1.2M548.4 139.7h1.2M549.1 141.0h1.2M549.7 140.8h1.2M550.1 140.7h1.2M550.9 140.4h1.2M551.7 139.3h1.2M552.3 140.1h1.2M552.9 141.1h1.2M553.4 139.5h1.2M554.0 140.0h1.2M554.6 140.6h1.2M555.3 140.1h1.2M555.9 140.0h1.2M556.3 140.1h1.2M557.1 140.2h1.2M557.8 140.2h1.2M558.4 139.7h1.2M559.1 139.8h1.2M559.5 139.8h1.2M560.1 138.7h1.2M561.0 138.8h1.2M566.9 139.0h1.2M567.4 138.0h1.2M568.2 137.4h1.2M569.0 137.1h1.2M569.4 138.3h1.2M570.2 138.4h1.2M570.6 137.4h1.2M571.4 138.6h1.2M572.1 137.9h1.2M572.6 138.9h1.2M573.3 140.0h1.2M573.7 139.5h1.2M574.3 139.0h1.2M575.1 139.6h1.2M575.6 139.7h1.2M576.2 139.6h1.2M576.8 139.4h1.2M577.5 140.3h1.2M578.1 140.3h1.2M578.6 138.3h1.2M596.1 135.9h1.2M596.8 135.7h1.2M597.4 135.6h1.2M598.0 136.8h1.2M598.7 136.1h1.2M599.2 136.1h1.2M599.7 136.2h1.2M600.2 136.4h1.2M600.9 136.3h1.2M601.6 135.3h1.2M602.3 137.1h1.2M602.8 136.0h1.2M603.3 135.0h1.2M603.9 136.0h1.2M604.8 135.8h1.2M605.3 134.9h1.2M606.0 135.5h1.2M606.4 135.8h1.2M607.1 136.6h1.2M607.6 135.3h1.2M608.3 134.4h1.2M608.9 132.9h1.2M609.6 132.0h1.2M610.4 131.7h1.2M611.0 131.6h1.2M611.4 130.9h1.2M612.1 131.0h1.2M612.8 129.9h1.2M613.3 129.7h1.2M613.9 129.5h1.2M614.6 130.1h1.2M615.1 128.6h1.2M615.9 129.4h1.2M616.5 129.4h1.2M617.2 129.3h1.2M617.9 129.2h1.2M618.1 129.9h1.2M618.8 128.8h1.2M619.6 127.5h1.2M620.2 127.6h1.2M620.8 127.3h1.2M621.4 126.6h1.2M622.2 126.5h1.2M622.5 126.0h1.2M623.1 126.5h1.2M623.8 125.6h1.2M624.6 126.1h1.2M625.1 125.6h1.2M625.8 126.1h1.2M626.3 125.6h1.2M627.0 125.3h1.2M627.7 125.6h1.2M628.4 125.4h1.2M628.8 124.8h1.2M629.4 123.4h1.2M630.3 124.2h1.2M630.8 122.8h1.2M631.5 123.4h1.2M632.0 124.7h1.2M632.5 125.6h1.2M633.0 124.9h1.2M633.7 125.7h1.2M634.5 124.8h1.2M635.0 125.5h1.2M635.7 124.6h1.2M636.2 123.6h1.2M636.9 124.0h1.2M637.6 123.8h1.2M638.1 123.4h1.2M638.8 122.4h1.2M639.6 123.1h1.2M639.9 123.3h1.2M640.5 122.4h1.2M641.4 124.1h1.2M641.8 123.6h1.2M642.4 123.2h1.2M643.0 121.4h1.2M643.9 121.2h1.2M644.5 119.8h1.2M644.9 122.3h1.2M645.4 123.2h1.2M646.3 122.8h1.2M646.9 121.6h1.2M647.4 123.2h1.2M648.0 122.6h1.2M648.6 123.2h1.2M649.2 122.2h1.2M649.9 122.5h1.2M650.6 123.6h1.2M651.2 125.2h1.2M651.9 125.4h1.2M652.3 124.8h1.2M652.9 127.0h1.2M653.7 126.4h1.2M654.5 126.2h1.2M654.8 127.0h1.2M655.7 127.3h1.2M656.0 127.4h1.2M656.9 126.5h1.2M657.3 127.3h1.2M658.1 127.8h1.2M658.6 127.2h1.2M659.2 128.7h1.2M659.8 128.5h1.2M660.4 129.9h1.2M660.9 130.0h1.2M661.8 130.2h1.2M662.5 130.9h1.2M662.9 130.5h1.2M663.7 130.0h1.2M664.2 130.3h1.2M664.8 129.6h1.2M665.3 126.1h1.2M666.2 126.8h1.2M666.5 126.2h1.2M667.2 126.4h1.2M668.0 126.8h1.2M668.6 127.2h1.2M669.2 128.0h1.2M669.8 125.9h1.2M670.4 127.5h1.2M670.8 127.2h1.2M671.6 126.3h1.2M672.2 126.9h1.2M673.0 125.9h1.2M673.4 126.6h1.2M674.3 125.7h1.2M674.9 127.8h1.2M675.4 127.4h1.2M675.8 129.2h1.2M676.4 128.9h1.2M677.1 128.5h1.2M677.8 128.6h1.2M678.5 128.5h1.2M679.2 128.2h1.2M679.9 128.5h1.2M680.4 129.2h1.2M680.9 127.9h1.2M681.5 129.1h1.2M682.2 127.4h1.2M682.8 128.0h1.2M683.4 128.1h1.2M684.1 128.1h1.2M684.5 127.0h1.2M685.2 127.7h1.2M685.8 128.5h1.2M686.7 129.0h1.2M687.1 129.6h1.2M687.8 128.9h1.2M688.4 129.1h1.2M689.0 128.4h1.2M689.6 128.9h1.2M690.3 128.6h1.2M691.1 127.4h1.2M691.4 128.7h1.2M692.1 128.9h1.2M692.7 129.4h1.2M693.2 128.0h1.2M694.1 128.2h1.2M694.6 127.8h1.2M695.2 127.5h1.2M696.0 129.6h1.2M698.8 127.5h1.2M702.1 128.2h1.2M702.6 129.4h1.2M706.1 130.2h1.2M706.6 130.0h1.2M709.9 128.7h1.2M710.5 129.7h1.2M711.2 129.5h1.2M711.8 128.6h1.2M712.3 129.2h1.2M713.3 127.5h1.2M713.5 126.9h1.2M714.5 126.6h1.2M715.0 126.9h1.2M715.7 127.1h1.2M716.1 126.5h1.2M716.9 126.2h1.2M717.4 128.6h1.2M718.0 132.5h1.2M718.6 132.6h1.2M719.5 133.4h1.2M719.9 133.2h1.2M720.7 132.7h1.2M721.2 133.0h1.2M721.9 132.0h1.2M722.5 132.1h1.2M723.0 131.0h1.2M723.6 132.2h1.2M724.2 131.4h1.2M724.8 131.2h1.2M725.6 130.9h1.2M726.0 131.2h1.2M726.8 130.9h1.2M727.3 131.9h1.2M728.0 131.5h1.2M728.8 132.8h1.2M729.0 132.3h1.2M729.9 131.9h1.2M730.7 132.4h1.2M731.1 130.8h1.2M731.9 131.2h1.2M732.2 130.9h1.2M733.0 131.0h1.2M733.5 132.4h1.2M734.2 131.2h1.2M735.0 131.9h1.2M735.4 132.6h1.2M735.9 131.5h1.2M736.8 132.4h1.2M737.3 131.2h1.2M737.8 131.6h1.2M738.6 132.6h1.2M739.1 132.2h1.2M739.9 132.9h1.2M740.3 133.2h1.2M741.1 132.4h1.2M741.6 132.3h1.2M742.2 133.1h1.2M742.8 133.8h1.2M743.6 134.8h1.2M744.2 134.4h1.2M744.5 133.5h1.2M745.4 133.2h1.2M745.8 134.9h1.2M746.5 134.5h1.2M747.3 133.6h1.2M747.8 134.3h1.2M748.6 133.9h1.2M748.9 133.4h1.2M749.8 135.4h1.2M750.2 134.5h1.2M751.1 133.5h1.2M751.5 134.2h1.2M752.1 133.4h1.2M752.9 134.4h1.2M753.6 135.0h1.2M754.0 133.6h1.2M754.5 134.3h1.2M755.2 133.6h1.2M755.8 133.3h1.2M756.6 133.8h1.2M757.1 134.5h1.2M757.6 132.2h1.2M758.2 133.4h1.2M758.8 132.4h1.2M759.8 133.5h1.2M760.4 132.2h1.2M760.9 132.3h1.2M761.6 132.7h1.2M762.1 132.2h1.2M762.6 132.1h1.2M763.3 132.7h1.2M764.1 132.7h1.2M764.6 132.0h1.2M765.1 132.2h1.2M765.7 132.0h1.2M766.2 131.4h1.2M767.0 131.6h1.2M767.6 131.9h1.2M768.4 131.4h1.2M768.8 132.0h1.2M769.4 132.4h1.2M770.0 132.9h1.2M770.9 132.9h1.2M771.2 133.0h1.2M771.9 131.2h1.2M772.6 133.3h1.2M773.3 132.4h1.2M773.7 132.9h1.2M774.4 133.2h1.2M775.2 133.8h1.2M775.6 133.8h1.2M776.3 132.7h1.2M777.0 132.4h1.2M777.6 133.0h1.2M778.3 133.0h1.2M778.9 132.8h1.2M779.4 133.4h1.2M780.0 133.6h1.2M780.5 133.2h1.2M781.5 133.9h1.2M782.1 133.6h1.2M782.4 133.8h1.2M783.0 133.3h1.2M783.7 135.2h1.2M784.5 133.4h1.2M784.9 133.7h1.2M785.8 133.9h1.2M786.4 133.6h1.2M786.8 133.5h1.2M787.7 134.4h1.2M788.1 132.9h1.2M788.8 133.5h1.2M789.2 133.0h1.2M790.1 131.4h1.2M790.7 132.0h1.2M791.2 131.1h1.2M792.0 131.4h1.2M792.3 131.3h1.2M793.1 132.5h1.2M793.5 132.2h1.2M794.2 132.9h1.2M795.1 132.9h1.2M795.4 132.1h1.2M796.0 132.4h1.2M797.0 132.4h1.2M797.5 132.2h1.2M798.2 132.2h1.2M798.8 132.8h1.2M799.1 131.8h1.2M799.9 132.2h1.2M800.5 133.7h1.2M801.0 132.4h1.2M801.6 133.6h1.2M802.4 133.4h1.2M802.8 133.3h1.2M803.4 133.4h1.2M804.1 132.6h1.2M805.0 133.6h1.2M805.6 132.2h1.2M805.9 134.1h1.2M806.5 134.5h1.2M807.5 133.2h1.2M807.9 133.4h1.2M808.6 135.0h1.2M809.3 134.0h1.2M809.9 134.0h1.2M810.5 133.3h1.2M811.2 134.9h1.2M811.8 134.6h1.2M812.2 134.5h1.2M812.9 134.4h1.2M813.7 135.6h1.2M814.3 136.4h1.2M814.9 137.2h1.2M815.2 137.7h1.2M816.0 137.6h1.2M816.7 139.0h1.2M817.1 138.7h1.2M817.8 139.5h1.2M818.3 139.6h1.2M819.1 139.2h1.2M819.9 139.0h1.2M820.3 138.2h1.2M820.8 138.7h1.2M821.6 139.5h1.2M822.3 138.5h1.2M822.7 138.6h1.2M823.6 139.1h1.2M823.9 139.6h1.2M824.8 140.3h1.2M825.2 137.9h1.2M826.0 139.7h1.2M826.4 138.2h1.2M827.0 137.7h1.2M827.6 138.4h1.2M828.3 138.1h1.2M828.9 137.7h1.2M829.8 137.9h1.2M830.4 137.5h1.2M830.8 137.1h1.2M831.3 137.5h1.2M832.2 137.6h1.2M832.8 137.2h1.2M833.3 136.4h1.2M833.9 136.2h1.2M834.7 138.1h1.2M835.3 137.2h1.2M835.9 136.3h1.2M836.4 136.9h1.2M837.2 137.4h1.2M837.8 136.2h1.2M838.2 137.3h1.2M838.9 136.8h1.2M839.6 138.3h1.2M840.0 137.4h1.2M841.0 137.3h1.2M841.3 137.2h1.2M842.0 137.8h1.2M842.9 139.2h1.2M843.3 137.3h1.2M844.1 137.7h1.2M844.6 137.8h1.2M845.1 137.9h1.2M846.0 138.2h1.2M846.2 138.1h1.2M847.1 138.7h1.2M847.7 136.9h1.2M848.4 137.3h1.2M848.8 137.6h1.2M849.7 137.9h1.2M850.1 137.7h1.2M850.7 137.9h1.2M851.2 138.5h1.2M851.8 138.5h1.2M852.6 137.9h1.2M853.1 138.8h1.2M853.8 138.6h1.2M854.5 137.9h1.2M854.9 138.7h1.2M855.6 138.9h1.2M856.3 138.4h1.2M856.9 139.1h1.2M857.6 139.7h1.2M858.3 139.0h1.2M858.6 138.7h1.2M859.6 138.9h1.2M860.1 139.4h1.2M860.7 140.6h1.2M861.1 139.1h1.2M861.9 139.8h1.2M862.7 140.5h1.2M863.1 140.0h1.2M863.6 141.3h1.2M864.3 140.4h1.2M864.9 140.5h1.2M865.4 140.2h1.2M866.4 141.2h1.2M866.8 140.4h1.2M867.4 141.3h1.2M868.2 141.5h1.2M868.8 142.1h1.2M869.5 143.0h1.2M870.0 143.0h1.2M870.4 142.3h1.2M871.2 142.3h1.2M871.8 141.2h1.2M872.5 142.8h1.2M873.0 141.4h1.2M873.6 141.6h1.2M874.2 140.6h1.2M874.9 141.9h1.2M875.6 142.7h1.2M876.0 141.7h1.2M876.7 142.6h1.2M877.3 141.9h1.2M878.0 142.5h1.2M878.6 143.0h1.2M879.4 143.2h1.2M880.0 141.5h1.2M880.4 142.9h1.2M881.2 141.3h1.2M881.7 141.6h1.2M882.4 141.2h1.2M882.9 141.6h1.2M883.5 142.2h1.2M884.1 143.2h1.2M884.8 142.9h1.2M885.3 142.6h1.2M886.2 141.6h1.2M886.6 141.0h1.2M887.3 142.8h1.2M887.8 140.8h1.2M888.5 142.2h1.2M889.3 141.2h1.2M889.8 141.2h1.2M890.6 141.2h1.2M891.2 142.2h1.2M891.7 142.5h1.2M892.2 142.2h1.2M892.9 142.3h1.2M893.5 140.7h1.2M894.0 141.0h1.2M894.8 138.9h1.2M895.3 139.3h1.2M895.8 138.0h1.2M896.7 137.7h1.2M897.1 137.8h1.2M897.9 138.2h1.2M898.5 138.4h1.2M899.2 138.5h1.2M899.6 138.2h1.2M900.4 137.7h1.2M901.1 137.5h1.2M901.6 137.2h1.2M902.4 137.3h1.2M902.7 137.2h1.2M903.4 138.0h1.2M903.9 137.9h1.2M904.8 138.0h1.2M905.5 137.7h1.2M905.8 137.7h1.2M906.5 137.9h1.2M907.2 138.2h1.2M907.7 138.3h1.2M908.2 138.4h1.2M909.1 138.4h1.2M909.7 138.9h1.2M910.2 138.6h1.2M910.8 138.3h1.2M911.3 139.1h1.2M912.3 138.8h1.2M912.7 138.6h1.2M913.5 137.7h1.2M914.1 138.4h1.2M914.5 137.7h1.2M915.0 138.1h1.2M916.0 138.8h1.2M916.5 140.0h1.2M917.1 137.3h1.2M917.6 139.0h1.2M918.4 138.8h1.2M918.9 140.4h1.2M919.5 140.8h1.2M920.2 141.3h1.2M920.9 141.8h1.2M921.5 141.3h1.2M922.1 141.1h1.2M922.7 141.1h1.2M923.2 142.5h1.2M924.0 141.6h1.2M924.5 141.8h1.2M925.2 140.9h1.2M925.9 141.0h1.2M926.3 141.3h1.2M926.8 142.9h1.2M927.7 140.7h1.2M928.1 143.0h1.2M928.7 142.2h1.2M929.5 141.5h1.2M930.0 142.0h1.2M930.6 142.7h1.2M931.5 141.3h1.2M932.0 142.5h1.2M932.5 141.2h1.2M933.4 142.4h1.2M933.6 142.4h1.2M934.5 142.3h1.2M935.1 142.4h1.2M935.8 142.4h1.2M936.3 142.1h1.2M937.0 141.2h1.2M937.5 141.7h1.2M938.1 142.3h1.2M939.0 142.2h1.2M939.3 141.6h1.2M939.9 141.2h1.2M940.7 139.7h1.2M941.3 141.0h1.2M941.9 139.3h1.2M942.5 138.8h1.2M943.1 139.0h1.2M943.8 138.1h1.2M944.2 138.5h1.2M944.8 138.4h1.2M945.4 137.8h1.2M946.3 138.5h1.2M946.8 137.0h1.2M947.6 137.3h1.2M948.2 138.2h1.2M948.7 138.1h1.2M949.1 138.5h1.2M949.8 138.6h1.2M950.8 138.7h1.2M951.1 139.7h1.2M951.8 137.5h1.2M952.3 137.7h1.2M953.1 136.9h1.2M953.6 137.4h1.2M954.2 137.4h1.2M954.8 138.1h1.2M955.6 137.3h1.2M956.2 138.2h1.2M957.0 138.5h1.2M957.5 139.7h1.2M958.0 138.1h1.2M958.6 138.8h1.2M959.1 138.8h1.2M960.0 138.3h1.2M960.4 139.1h1.2M961.2 138.1h1.2M961.9 137.6h1.2M962.5 136.2h1.2M962.9 135.8h1.2M963.5 135.9h1.2M964.2 135.4h1.2M964.9 135.9h1.2M965.4 135.0h1.2M966.2 135.6h1.2M966.6 135.6h1.2M967.3 137.1h1.2M968.1 135.7h1.2M968.5 135.0h1.2M969.3 136.3h1.2M969.7 135.5h1.2M970.3 135.9h1.2M971.2 136.8h1.2M971.8 135.6h1.2M972.2 135.6h1.2M972.9 136.1h1.2M973.7 134.6h1.2M974.2 134.8h1.2M974.7 135.5h1.2M975.4 134.3h1.2M976.2 135.6h1.2M976.5 137.1h1.2M977.3 136.5h1.2M977.7 137.2h1.2M978.5 137.0h1.2M979.0 135.9h1.2M979.6 137.3h1.2M980.4 137.5h1.2M980.8 136.7h1.2M981.5 138.0h1.2M982.1 137.2h1.2M982.7 137.8h1.2M983.5 138.7h1.2M983.9 138.1h1.2M984.5 139.1h1.2M985.2 140.4h1.2M985.8 139.1h1.2M986.4 138.2h1.2M987.2 139.8h1.2M987.6 139.2h1.2M988.4 138.0h1.2M989.0 139.1h1.2M989.6 139.1h1.2M990.1 139.6h1.2M990.9 139.7h1.2M991.6 139.6h1.2M992.0 139.0h1.2M992.6 138.8h1.2M993.5 139.2h1.2M993.8 139.4h1.2M994.4 138.4h1.2M995.0 140.0h1.2M996.0 138.9h1.2M996.3 139.6h1.2M997.1 138.7h1.2M997.5 138.4h1.2M998.5 139.2h1.2M999.1 138.4h1.2M999.6 139.4h1.2M1000.2 139.0h1.2M1000.8 137.7h1.2M1001.6 138.3h1.2M1002.0 137.0h1.2M1002.8 136.4h1.2M1003.2 136.4h1.2M1003.8 136.3h1.2M1004.6 138.0h1.2M1005.2 136.2h1.2M1005.9 136.6h1.2M1006.5 135.9h1.2M1007.1 135.5h1.2M1007.4 136.0h1.2M1008.0 135.9h1.2M1008.7 135.9h1.2M1009.4 137.2h1.2M1010.2 137.2h1.2M1010.6 137.0h1.2M1011.2 137.4h1.2M1011.8 137.0h1.2M1012.7 137.9h1.2M1013.1 138.1h1.2M1013.7 139.2h1.2M1014.4 138.8h1.2M1014.9 138.1h1.2M1015.6 138.4h1.2M1016.4 138.7h1.2M1016.9 138.0h1.2M1017.7 142.0h1.2M1018.2 145.7h1.2M1018.8 145.7h1.2M1019.2 147.7h1.2M1019.9 149.3h1.2M1020.7 147.8h1.2M1021.2 145.0h1.2M1021.7 141.0h1.2M1022.4 136.4h1.2M1023.2 137.4h1.2M1023.5 137.8h1.2M1024.2 137.7h1.2M1025.0 139.5h1.2M1025.5 139.1h1.2M1026.1 139.8h1.2M1026.9 141.8h1.2M1027.2 140.9h1.2M1027.9 140.3h1.2M1028.5 139.7h1.2M1029.3 139.7h1.2M1029.9 139.2h1.2M1030.5 138.5h1.2M1031.1 139.0h1.2M1031.9 137.8h1.2M1032.5 138.0h1.2M1032.9 138.3h1.2M1033.8 138.7h1.2M1034.2 138.6h1.2M1035.0 139.0h1.2M1035.7 137.6h1.2M1036.2 138.4h1.2M1036.6 138.1h1.2M1037.3 139.3h1.2M1037.8 138.5h1.2M1038.5 138.7h1.2M1039.1 136.7h1.2M1039.7 137.5h1.2M1040.3 138.0h1.2M1041.1 135.7h1.2M1041.7 136.4h1.2M1042.1 135.9h1.2M1042.8 135.7h1.2M1043.6 135.7h1.2M1044.4 136.1h1.2M1044.7 136.9h1.2M1045.4 135.8h1.2M1046.1 135.2h1.2M1046.6 135.3h1.2M1047.4 136.7h1.2M1047.8 137.1h1.2M1048.5 136.8h1.2M1049.2 135.5h1.2M1049.6 135.1h1.2M1050.3 135.8h1.2M1051.1 136.1h1.2M1051.6 136.3h1.2" stroke="#ffffff" stroke-width="1.2" fill="none"/>
<path d="M134.9 269.9h1.4M135.5 269.2h1.4M136.1 269.6h1.4M137.2 270.5h1.4M137.9 268.8h1.4M138.7 269.7h1.4M139.3 270.6h1.4M140.0 269.3h1.4M140.8 270.1h1.4M141.6 270.2h1.4M142.2 271.0h1.4M143.1 270.1h1.4M143.6 269.5h1.4M144.5 269.2h1.4M145.1 270.1h1.4M145.9 270.3h1.4M146.7 269.0h1.4M147.5 269.2h1.4M148.1 269.4h1.4M149.0 269.7h1.4M149.8 269.9h1.4M150.5 270.3h1.4M151.4 270.1h1.4M152.0 270.5h1.4M152.9 270.0h1.4M153.4 270.3h1.4M154.2 268.7h1.4M155.0 269.7h1.4M155.7 270.6h1.4M156.3 269.7h1.4M157.3 269.6h1.4M158.0 271.4h1.4M158.8 269.6h1.4M159.5 269.9h1.4M160.3 269.7h1.4M161.1 270.2h1.4M161.8 270.3h1.4M162.4 270.1h1.4M163.1 269.6h1.4M163.8 270.6h1.4M164.8 269.6h1.4M165.5 269.9h1.4M166.2 270.5h1.4M167.2 270.1h1.4M167.8 270.2h1.4M168.3 268.5h1.4M169.4 268.5h1.4M169.9 269.6h1.4M170.6 269.5h1.4M171.6 270.0h1.4M172.2 270.3h1.4M173.2 269.9h1.4M173.8 269.3h1.4M174.5 270.0h1.4M175.2 270.3h1.4M176.1 270.7h1.4M176.7 269.6h1.4M177.4 270.0h1.4M178.1 269.8h1.4M178.8 270.4h1.4M179.8 270.1h1.4M180.5 270.5h1.4M181.2 269.2h1.4M182.2 270.5h1.4M182.8 270.0h1.4M183.5 268.5h1.4M184.2 268.7h1.4M184.9 268.5h1.4M185.7 269.0h1.4M186.5 269.0h1.4M187.2 269.1h1.4M188.2 268.7h1.4M188.6 269.4h1.4M189.6 270.3h1.4M190.4 270.7h1.4M191.1 270.1h1.4M191.8 269.9h1.4M192.4 270.1h1.4M193.2 270.3h1.4M194.0 270.2h1.4M194.7 269.8h1.4M195.6 270.9h1.4M196.3 271.5h1.4M197.1 270.0h1.4M197.9 270.0h1.4M198.6 270.2h1.4M199.1 270.7h1.4M200.2 270.0h1.4M200.6 270.5h1.4M201.5 270.5h1.4M202.3 269.7h1.4M203.1 269.2h1.4M203.7 271.1h1.4M204.3 270.9h1.4M205.1 270.0h1.4M206.0 271.0h1.4M206.7 270.0h1.4M207.7 269.7h1.4M208.3 269.0h1.4M208.8 269.9h1.4M209.6 270.6h1.4M210.7 269.1h1.4M211.2 270.6h1.4M212.0 270.8h1.4M212.8 270.6h1.4M213.6 271.5h1.4M214.1 269.6h1.4M215.1 269.2h1.4M215.7 271.4h1.4M216.3 270.4h1.4M217.4 270.3h1.4M217.9 270.5h1.4M218.9 270.5h1.4M219.6 270.2h1.4M220.3 270.7h1.4M221.1 269.8h1.4M221.8 270.7h1.4M222.4 269.2h1.4M223.2 270.1h1.4M224.0 270.6h1.4M224.9 270.9h1.4M225.4 269.7h1.4M226.3 269.8h1.4M227.0 270.1h1.4M227.8 270.1h1.4M228.7 270.6h1.4M229.3 269.8h1.4M230.1 268.9h1.4M230.7 269.8h1.4M231.7 269.8h1.4M232.4 269.4h1.4M233.0 269.8h1.4M233.8 269.7h1.4M234.6 270.8h1.4M235.1 269.6h1.4M236.1 270.9h1.4M236.8 271.6h1.4M237.6 270.4h1.4M238.4 270.1h1.4M239.0 269.6h1.4M239.9 269.6h1.4M240.4 269.8h1.4M241.1 270.3h1.4M242.1 271.2h1.4M242.8 269.7h1.4M243.3 269.5h1.4M244.1 268.3h1.4M245.0 269.0h1.4M245.6 270.1h1.4M246.5 269.5h1.4M247.3 270.0h1.4M248.2 269.3h1.4M248.9 271.7h1.4M249.3 270.3h1.4M250.4 268.2h1.4M251.0 268.5h1.4M251.7 264.3h1.4M252.4 265.9h1.4M253.1 263.7h1.4M253.9 265.9h1.4M254.6 265.3h1.4M255.4 264.7h1.4M256.3 268.6h1.4M257.0 264.1h1.4M257.6 263.9h1.4M258.5 265.7h1.4M259.4 266.0h1.4M260.1 264.1h1.4M260.6 264.9h1.4M261.5 267.0h1.4M262.2 267.7h1.4M263.0 269.0h1.4M263.8 267.8h1.4M264.5 268.7h1.4M265.3 268.8h1.4M266.0 269.3h1.4M266.9 265.8h1.4M267.3 268.4h1.4M268.3 270.0h1.4M269.1 267.6h1.4M269.6 270.0h1.4M270.6 266.8h1.4M271.3 269.0h1.4M272.2 268.0h1.4M272.7 268.9h1.4M273.4 268.8h1.4M279.1 258.3h1.4M279.8 257.9h1.4M280.7 258.4h1.4M281.3 259.0h1.4M282.2 257.3h1.4M282.6 257.6h1.4M283.4 257.4h1.4M284.2 258.9h1.4M284.8 257.5h1.4M285.9 258.8h1.4M286.3 257.5h1.4M287.2 258.1h1.4M288.1 257.8h1.4M288.9 258.9h1.4M289.5 258.3h1.4M290.1 259.7h1.4M291.0 257.3h1.4M291.9 258.3h1.4M292.4 257.6h1.4M293.3 258.1h1.4M293.9 256.9h1.4M294.7 259.4h1.4M295.6 257.7h1.4M296.1 257.9h1.4M296.9 256.8h1.4M297.6 258.4h1.4M298.3 258.5h1.4M299.1 258.6h1.4M299.9 258.4h1.4M300.9 258.2h1.4M301.6 257.5h1.4M302.4 258.3h1.4M303.0 258.2h1.4M303.8 258.1h1.4M304.5 257.7h1.4M305.1 255.0h1.4M306.2 253.8h1.4M306.9 253.7h1.4M307.7 254.5h1.4M308.1 255.3h1.4M309.1 253.2h1.4M309.8 254.0h1.4M310.3 251.7h1.4M311.3 252.9h1.4M312.0 254.2h1.4M312.6 253.9h1.4M313.3 254.9h1.4M314.3 253.0h1.4M315.2 255.1h1.4M315.9 254.4h1.4M316.4 253.0h1.4M317.2 255.8h1.4M318.0 254.4h1.4M318.8 255.0h1.4M319.4 255.3h1.4M320.2 256.3h1.4M321.0 256.2h1.4M321.9 254.9h1.4M322.3 256.2h1.4M323.4 257.0h1.4M324.1 257.6h1.4M327.9 267.0h1.4M328.6 267.4h1.4M329.5 267.3h1.4M330.2 268.6h1.4M331.0 269.1h1.4M331.8 269.6h1.4M332.7 270.1h1.4M333.3 269.2h1.4M334.1 269.4h1.4M334.8 269.8h1.4M335.4 269.4h1.4M336.2 270.7h1.4M336.9 268.9h1.4M337.6 269.6h1.4M338.5 270.3h1.4M339.2 269.7h1.4M339.9 270.3h1.4M340.8 270.2h1.4M341.5 270.7h1.4M342.3 270.3h1.4M342.8 270.6h1.4M343.8 269.2h1.4M344.4 269.7h1.4M345.2 270.1h1.4M345.9 270.0h1.4M346.8 270.5h1.4M347.4 270.4h1.4M348.2 270.5h1.4M348.8 270.9h1.4M349.9 271.2h1.4M350.4 270.8h1.4M351.3 270.3h1.4M352.0 270.3h1.4M352.7 269.4h1.4M353.4 270.2h1.4M354.2 269.8h1.4M355.1 270.5h1.4M355.6 269.3h1.4M356.4 270.4h1.4M357.2 270.4h1.4M357.9 270.8h1.4M358.7 270.4h1.4M359.7 270.0h1.4M360.2 270.3h1.4M361.1 269.7h1.4M361.9 270.6h1.4M362.6 270.4h1.4M363.2 271.0h1.4M364.0 271.5h1.4M364.6 270.1h1.4M365.7 270.6h1.4M366.3 270.4h1.4M367.0 271.4h1.4M367.8 270.6h1.4M368.7 270.0h1.4M369.1 270.1h1.4M369.8 270.7h1.4M370.8 270.2h1.4M371.4 271.1h1.4M372.2 270.0h1.4M372.9 269.9h1.4M373.8 270.7h1.4M374.5 271.2h1.4M375.4 270.6h1.4M375.9 270.0h1.4M376.7 269.8h1.4M377.3 269.9h1.4M378.1 270.1h1.4M379.1 270.4h1.4M379.6 269.8h1.4M380.6 270.1h1.4M381.4 270.3h1.4M381.8 270.1h1.4M382.7 269.0h1.4M383.6 270.0h1.4M384.2 270.9h1.4M384.9 268.9h1.4M385.8 269.2h1.4M386.7 270.1h1.4M387.1 269.4h1.4M388.0 270.0h1.4M388.6 269.5h1.4M389.6 269.7h1.4M390.1 270.2h1.4M391.1 269.9h1.4M391.7 270.0h1.4M392.3 270.9h1.4M393.4 270.1h1.4M393.9 270.1h1.4M394.7 270.2h1.4M395.5 269.5h1.4M396.3 268.8h1.4M396.9 269.7h1.4M397.7 269.7h1.4M398.5 270.6h1.4M399.1 269.8h1.4M399.8 269.9h1.4M400.8 268.9h1.4M401.6 269.9h1.4M402.2 270.2h1.4M403.1 270.9h1.4M403.7 270.3h1.4M404.5 271.0h1.4M405.4 270.5h1.4M406.1 270.0h1.4M406.9 271.4h1.4M407.7 271.4h1.4M408.1 270.2h1.4M409.2 271.3h1.4M409.7 270.8h1.4M410.3 271.3h1.4M411.3 270.5h1.4M411.8 270.6h1.4M412.6 270.7h1.4M413.5 270.9h1.4M414.1 269.8h1.4M414.8 270.4h1.4M415.6 270.3h1.4M416.4 270.5h1.4M417.3 270.5h1.4M417.8 269.5h1.4M418.7 269.7h1.4M419.5 270.7h1.4M420.2 271.2h1.4M421.0 271.2h1.4M422.1 263.7h1.4M422.9 264.1h1.4M423.3 264.1h1.4M424.2 264.4h1.4M425.0 265.6h1.4M425.7 265.8h1.4M426.4 265.5h1.4M427.4 265.0h1.4M428.2 265.6h1.4M428.9 266.1h1.4M429.6 264.8h1.4M430.3 265.1h1.4M430.8 265.4h1.4M431.7 265.2h1.4M432.5 264.9h1.4M433.2 265.2h1.4M434.1 264.2h1.4M434.6 265.1h1.4M435.4 265.8h1.4M436.2 265.0h1.4M437.1 264.8h1.4M437.6 265.6h1.4M438.4 265.8h1.4M439.2 266.1h1.4M439.9 266.5h1.4M440.7 266.1h1.4M441.4 266.6h1.4M442.3 265.6h1.4M442.9 266.2h1.4M443.7 265.9h1.4M444.6 266.3h1.4M445.2 265.5h1.4M446.0 266.1h1.4M446.7 265.8h1.4M447.5 266.3h1.4M448.2 264.9h1.4M449.0 265.9h1.4M449.6 265.2h1.4M450.3 265.2h1.4M451.3 264.8h1.4M452.1 265.5h1.4M452.8 265.4h1.4M453.5 265.8h1.4M454.4 265.6h1.4M455.1 265.1h1.4M455.8 264.1h1.4M456.5 264.0h1.4M457.4 263.0h1.4M458.1 263.4h1.4M458.9 265.0h1.4M459.5 263.2h1.4M460.4 263.5h1.4M461.2 263.6h1.4M461.7 263.3h1.4M462.7 262.3h1.4M463.3 262.3h1.4M464.0 262.5h1.4M464.7 261.3h1.4M465.5 260.0h1.4M466.5 267.0h1.4M467.4 268.2h1.4M468.0 267.2h1.4M468.7 267.7h1.4M469.8 267.2h1.4M470.5 267.0h1.4M471.3 269.3h1.4M472.0 270.0h1.4M472.6 269.8h1.4M473.5 269.3h1.4M474.0 268.1h1.4M474.9 268.7h1.4M475.7 269.2h1.4M476.2 268.5h1.4M477.0 267.6h1.4M477.7 268.6h1.4M478.8 268.2h1.4M479.5 268.7h1.4M480.1 267.3h1.4M480.9 267.7h1.4M481.6 266.6h1.4M482.2 268.5h1.4M483.0 265.7h1.4M483.9 265.4h1.4M484.5 265.2h1.4M485.5 265.2h1.4M486.2 265.1h1.4M487.0 264.4h1.4M487.5 265.7h1.4M488.4 265.8h1.4M489.1 264.8h1.4M490.0 264.7h1.4M490.5 266.3h1.4M491.5 268.6h1.4M492.2 267.6h1.4M492.9 265.9h1.4M493.6 266.6h1.4M494.2 267.4h1.4M495.3 266.4h1.4M495.8 267.9h1.4M496.4 267.8h1.4M497.3 267.3h1.4M497.9 268.9h1.4M498.7 268.0h1.4M499.7 268.0h1.4M500.3 269.3h1.4M501.1 269.5h1.4M501.7 269.0h1.4M502.5 268.8h1.4M503.2 269.2h1.4M504.0 269.3h1.4M504.7 269.3h1.4M505.5 269.9h1.4M506.5 268.8h1.4M506.9 267.4h1.4M507.8 268.9h1.4M508.5 268.3h1.4M509.5 268.7h1.4M510.1 268.4h1.4M510.9 267.7h1.4M511.8 269.8h1.4M512.5 268.8h1.4M513.2 267.9h1.4M513.9 269.2h1.4M514.8 269.2h1.4M515.4 268.6h1.4M516.1 266.8h1.4M516.7 264.6h1.4M517.5 267.4h1.4M518.5 267.9h1.4M519.3 267.1h1.4M519.7 267.9h1.4M520.7 267.8h1.4M521.3 268.8h1.4M521.9 267.3h1.4M523.0 267.6h1.4M523.5 267.1h1.4M524.5 267.6h1.4M525.1 267.1h1.4M525.7 267.4h1.4M526.6 268.1h1.4M527.5 268.1h1.4M528.1 268.7h1.4M529.0 268.3h1.4M529.8 268.4h1.4M530.2 268.3h1.4M531.2 267.7h1.4M531.7 268.0h1.4M532.4 269.0h1.4M533.5 268.4h1.4M534.1 268.2h1.4M534.8 269.1h1.4M535.6 267.4h1.4M536.3 268.9h1.4M537.1 268.1h1.4M537.8 267.4h1.4M538.6 268.1h1.4M539.3 268.3h1.4M540.2 268.3h1.4M540.8 268.9h1.4M541.8 269.2h1.4M542.2 268.5h1.4M543.2 269.1h1.4M543.9 269.1h1.4M544.6 268.1h1.4M545.4 269.1h1.4M546.0 269.0h1.4M546.9 268.6h1.4M547.7 267.0h1.4M548.2 267.1h1.4M549.2 267.6h1.4M550.0 266.2h1.4M550.7 266.4h1.4M551.2 266.9h1.4M552.2 267.1h1.4M552.9 265.9h1.4M553.5 266.7h1.4M554.4 266.4h1.4M555.2 266.0h1.4M555.7 264.7h1.4M556.4 267.1h1.4M557.5 265.5h1.4M558.3 267.4h1.4M559.0 268.1h1.4M559.6 268.5h1.4M560.4 267.7h1.4M566.9 268.1h1.4M567.7 267.1h1.4M568.7 267.1h1.4M569.2 266.8h1.4M569.9 267.5h1.4M570.9 267.7h1.4M571.7 267.2h1.4M572.4 267.9h1.4M573.2 269.1h1.4M573.7 268.7h1.4M574.6 267.4h1.4M575.3 267.1h1.4M575.8 267.5h1.4M576.6 268.0h1.4M577.5 268.5h1.4M578.3 268.1h1.4M579.1 267.9h1.4M597.2 264.7h1.4M597.6 264.9h1.4M598.5 264.4h1.4M599.1 266.1h1.4M600.0 263.3h1.4M600.8 264.6h1.4M601.7 262.3h1.4M602.4 262.3h1.4M602.8 264.2h1.4M603.6 263.9h1.4M604.4 262.7h1.4M605.1 264.1h1.4M605.9 264.1h1.4M606.6 264.6h1.4M607.3 261.3h1.4M608.2 262.0h1.4M609.0 261.1h1.4M609.8 263.2h1.4M610.6 259.4h1.4M611.2 261.8h1.4M611.9 261.9h1.4M612.6 263.2h1.4M613.6 262.3h1.4M614.2 260.0h1.4M615.1 260.2h1.4M615.8 260.1h1.4M616.6 259.0h1.4M617.4 261.8h1.4M617.9 261.0h1.4M618.7 260.5h1.4M619.6 260.1h1.4M620.1 260.5h1.4M621.2 257.9h1.4M621.6 258.2h1.4M622.6 258.8h1.4M623.4 258.9h1.4M624.2 257.3h1.4M624.7 257.0h1.4M625.6 258.7h1.4M626.1 258.7h1.4M627.0 259.9h1.4M627.6 258.2h1.4M628.6 260.4h1.4M629.2 259.9h1.4M629.9 261.3h1.4M630.6 258.5h1.4M631.3 259.8h1.4M632.4 259.9h1.4M632.9 259.6h1.4M633.9 259.3h1.4M634.5 258.8h1.4M635.3 260.3h1.4M636.0 264.5h1.4M636.7 263.7h1.4M637.4 255.0h1.4M638.3 259.8h1.4M639.1 264.6h1.4M639.6 263.1h1.4M640.4 260.1h1.4M641.1 261.6h1.4M641.9 266.1h1.4M642.6 260.7h1.4M643.5 262.8h1.4M644.4 261.3h1.4M644.9 259.3h1.4M645.9 265.8h1.4M646.4 264.7h1.4M647.1 261.7h1.4M648.2 257.9h1.4M648.9 262.9h1.4M649.5 260.5h1.4M650.1 260.3h1.4M650.8 257.5h1.4M651.8 256.1h1.4M652.3 258.9h1.4M653.4 255.1h1.4M653.9 257.5h1.4M654.6 256.7h1.4M655.6 257.2h1.4M656.2 254.9h1.4M656.9 255.0h1.4M657.9 254.9h1.4M658.4 253.8h1.4M659.3 252.3h1.4M659.8 253.9h1.4M660.7 257.3h1.4M661.4 254.9h1.4M662.4 254.1h1.4M663.1 253.9h1.4M663.7 254.8h1.4M664.4 255.5h1.4M665.4 255.7h1.4M665.9 256.0h1.4M666.8 254.1h1.4M667.4 257.2h1.4M668.2 261.0h1.4M669.2 259.8h1.4M669.6 259.0h1.4M670.6 255.8h1.4M671.2 258.9h1.4M672.0 257.1h1.4M672.7 261.5h1.4M673.5 262.0h1.4M674.2 257.7h1.4M674.9 259.4h1.4M675.6 260.0h1.4M676.3 257.8h1.4M677.1 260.4h1.4M678.1 258.4h1.4M678.6 258.3h1.4M679.4 258.8h1.4M680.4 260.3h1.4M680.9 261.0h1.4M681.7 261.2h1.4M682.6 262.0h1.4M683.2 261.2h1.4M684.1 261.4h1.4M684.7 262.4h1.4M685.6 263.7h1.4M686.2 263.2h1.4M687.1 265.5h1.4M687.9 263.7h1.4M688.3 265.4h1.4M689.2 264.1h1.4M689.8 265.5h1.4M690.9 265.4h1.4M691.4 266.8h1.4M692.2 265.7h1.4M693.1 268.0h1.4M693.7 265.4h1.4M694.3 267.6h1.4M695.4 267.2h1.4M695.8 267.3h1.4M696.6 267.4h1.4M697.4 267.5h1.4M698.2 268.3h1.4M698.9 267.8h1.4M699.8 265.8h1.4M700.5 268.4h1.4M701.2 267.9h1.4M702.0 267.1h1.4M702.9 267.1h1.4M703.4 268.2h1.4M704.4 268.7h1.4M705.0 269.1h1.4M705.9 268.4h1.4M706.4 267.8h1.4M707.4 267.9h1.4M707.8 269.9h1.4M708.9 266.7h1.4M709.7 266.7h1.4M710.4 269.0h1.4M710.9 267.5h1.4M711.7 266.4h1.4M712.4 268.0h1.4M713.2 268.3h1.4M714.1 267.7h1.4M714.7 270.0h1.4M715.6 269.5h1.4M716.2 268.8h1.4M717.1 269.7h1.4M717.6 270.1h1.4M718.5 267.8h1.4M719.2 270.3h1.4M719.9 267.3h1.4M720.7 259.5h1.4M721.3 265.8h1.4M722.4 262.1h1.4M723.0 260.3h1.4M723.8 268.6h1.4M724.4 265.9h1.4M725.1 263.0h1.4M725.8 264.2h1.4M726.7 264.6h1.4M727.6 263.7h1.4M728.2 263.5h1.4M728.9 264.4h1.4M729.6 263.0h1.4M730.4 264.9h1.4M731.4 264.5h1.4M732.0 264.1h1.4M732.9 264.5h1.4M733.7 262.6h1.4M734.3 264.4h1.4M735.2 263.6h1.4M735.9 264.5h1.4M736.7 261.7h1.4M737.4 261.6h1.4M737.9 261.5h1.4M738.8 263.1h1.4M739.6 262.1h1.4M740.4 263.9h1.4M741.2 263.1h1.4M741.8 264.2h1.4M742.5 262.5h1.4M743.2 262.4h1.4M744.1 263.3h1.4M744.6 261.6h1.4M745.5 262.7h1.4M746.1 261.5h1.4M746.9 262.3h1.4M747.8 260.9h1.4M748.5 260.9h1.4M749.3 261.2h1.4M749.9 261.5h1.4M750.8 261.3h1.4M751.3 261.8h1.4M752.3 261.7h1.4M753.2 261.5h1.4M753.7 261.3h1.4M754.4 260.3h1.4M755.1 260.8h1.4M755.8 260.9h1.4M756.8 261.6h1.4M757.7 261.4h1.4M758.4 261.4h1.4M758.9 262.0h1.4M759.8 260.2h1.4M760.4 262.7h1.4M761.4 261.4h1.4M761.9 260.6h1.4M762.6 262.7h1.4M763.3 262.3h1.4M764.3 261.2h1.4M765.2 260.5h1.4M765.9 262.1h1.4M766.6 261.9h1.4M767.3 261.0h1.4M768.1 263.4h1.4M768.6 263.1h1.4M769.5 261.4h1.4M770.2 262.5h1.4M770.9 262.4h1.4M771.8 264.3h1.4M772.4 263.5h1.4M773.2 264.5h1.4M774.2 262.1h1.4M774.7 262.2h1.4M775.4 263.1h1.4M776.4 265.0h1.4M777.0 263.6h1.4M777.6 259.6h1.4M778.3 263.8h1.4M779.2 261.2h1.4M780.0 262.6h1.4M780.7 261.8h1.4M781.3 261.8h1.4M782.4 259.5h1.4M783.1 259.1h1.4M783.7 262.3h1.4M784.4 262.5h1.4M785.4 262.9h1.4M786.1 263.0h1.4M786.8 260.4h1.4M787.5 260.6h1.4M788.4 259.9h1.4M789.0 261.9h1.4M789.6 262.5h1.4M790.6 263.1h1.4M791.4 264.1h1.4M791.9 264.7h1.4M792.7 263.6h1.4M793.3 263.5h1.4M794.2 264.1h1.4M795.2 264.1h1.4M795.9 263.6h1.4M796.5 264.1h1.4M797.1 264.5h1.4M798.0 263.4h1.4M798.9 263.9h1.4M799.5 263.0h1.4M800.1 264.5h1.4M800.9 263.7h1.4M801.6 263.1h1.4M802.6 263.6h1.4M803.1 263.5h1.4M804.1 263.0h1.4M804.7 263.4h1.4M805.7 261.9h1.4M806.2 263.1h1.4M806.9 263.0h1.4M807.6 262.8h1.4M808.6 261.9h1.4M809.2 263.2h1.4M810.0 262.5h1.4M810.8 261.4h1.4M811.4 262.5h1.4M812.2 262.2h1.4M812.9 264.4h1.4M813.6 266.3h1.4M814.3 267.3h1.4M815.1 266.0h1.4M816.0 267.0h1.4M816.7 265.5h1.4M817.3 263.9h1.4M818.3 265.4h1.4M818.8 263.3h1.4M819.9 265.4h1.4M820.3 264.9h1.4M821.1 263.9h1.4M822.0 266.3h1.4M822.6 262.8h1.4M823.4 264.3h1.4M824.1 263.1h1.4M824.8 263.2h1.4M825.9 261.1h1.4M826.4 263.7h1.4M827.1 262.3h1.4M827.8 261.0h1.4M828.7 261.4h1.4M829.3 261.5h1.4M830.2 262.4h1.4M831.1 261.1h1.4M831.9 260.0h1.4M832.6 261.5h1.4M833.1 259.4h1.4M833.9 259.6h1.4M834.8 260.3h1.4M835.5 259.7h1.4M836.1 261.6h1.4M837.2 264.2h1.4M837.6 263.8h1.4M838.4 264.3h1.4M839.3 265.5h1.4M839.9 263.9h1.4M840.7 264.1h1.4M841.5 264.0h1.4M842.4 263.8h1.4M842.9 263.7h1.4M843.7 264.0h1.4M844.6 264.5h1.4M845.3 264.1h1.4M845.8 263.4h1.4M846.6 263.4h1.4M847.6 264.8h1.4M848.2 265.0h1.4M849.1 264.4h1.4M849.6 264.3h1.4M850.5 263.8h1.4M851.4 264.8h1.4M852.2 264.4h1.4M852.7 264.5h1.4M853.6 264.7h1.4M854.4 264.7h1.4M854.8 264.3h1.4M855.9 265.0h1.4M856.6 265.2h1.4M857.4 265.3h1.4M857.8 265.3h1.4M858.6 265.0h1.4M859.4 265.0h1.4M860.4 264.4h1.4M860.9 263.9h1.4M861.8 264.8h1.4M862.7 264.0h1.4M863.1 265.2h1.4M864.0 265.2h1.4M864.6 263.9h1.4M865.3 263.6h1.4M866.3 263.5h1.4M867.0 263.9h1.4M867.9 264.6h1.4M868.4 265.1h1.4M869.3 264.9h1.4M869.9 264.7h1.4M870.9 264.4h1.4M871.6 264.6h1.4M872.4 264.2h1.4M873.1 265.0h1.4M873.8 264.9h1.4M874.6 265.1h1.4M875.1 265.7h1.4M875.9 265.5h1.4M876.9 265.4h1.4M877.4 264.6h1.4M878.4 265.7h1.4M878.9 265.1h1.4M879.8 265.3h1.4M880.4 264.7h1.4M881.1 265.6h1.4M881.9 264.5h1.4M882.6 264.1h1.4M883.4 265.8h1.4M884.2 265.4h1.4M885.1 264.2h1.4M885.9 264.1h1.4M886.4 264.2h1.4M887.3 264.7h1.4M888.0 264.3h1.4M888.6 263.7h1.4M889.5 265.3h1.4M890.2 263.9h1.4M891.0 263.6h1.4M891.9 263.3h1.4M892.6 263.8h1.4M893.1 264.3h1.4M893.9 262.7h1.4M894.6 262.3h1.4M895.6 261.9h1.4M896.4 263.1h1.4M896.9 263.3h1.4M897.9 263.8h1.4M898.4 263.2h1.4M899.1 263.1h1.4M899.8 264.5h1.4M900.6 263.8h1.4M901.6 264.6h1.4M902.2 264.1h1.4M903.0 264.0h1.4M903.7 263.7h1.4M904.4 263.5h1.4M905.3 263.6h1.4M906.1 264.5h1.4M906.7 263.8h1.4M907.6 263.9h1.4M908.2 263.5h1.4M908.9 264.6h1.4M909.7 262.2h1.4M910.7 264.4h1.4M911.3 264.1h1.4M911.9 264.3h1.4M912.7 264.5h1.4M913.4 264.0h1.4M914.4 264.6h1.4M915.0 262.2h1.4M915.7 263.5h1.4M916.7 264.3h1.4M917.4 263.4h1.4M918.2 263.9h1.4M918.6 264.0h1.4M919.6 262.7h1.4M920.2 263.6h1.4M920.8 263.6h1.4M921.9 262.9h1.4M922.4 264.4h1.4M923.3 263.2h1.4M924.2 263.0h1.4M924.9 262.5h1.4M925.7 263.0h1.4M926.4 262.9h1.4M926.9 262.6h1.4M927.6 261.9h1.4M928.6 263.4h1.4M929.1 260.7h1.4M930.1 262.8h1.4M930.6 264.6h1.4M931.4 263.8h1.4M932.1 265.5h1.4M933.1 263.9h1.4M933.8 264.4h1.4M934.7 262.1h1.4M935.1 265.4h1.4M935.9 261.0h1.4M936.9 262.1h1.4M937.5 262.3h1.4M938.1 259.9h1.4M939.1 261.1h1.4M939.9 262.6h1.4M940.6 265.3h1.4M941.4 260.0h1.4M942.1 260.0h1.4M942.6 261.7h1.4M943.6 266.8h1.4M944.1 265.3h1.4M945.1 264.4h1.4M945.7 262.8h1.4M946.5 262.8h1.4M947.4 256.5h1.4M947.9 257.0h1.4M948.6 257.7h1.4M949.5 262.0h1.4M950.1 260.8h1.4M950.8 260.9h1.4M951.8 263.4h1.4M952.6 259.5h1.4M953.4 257.8h1.4M954.1 260.3h1.4M954.8 256.6h1.4M955.3 262.1h1.4M956.1 264.1h1.4M956.9 260.1h1.4M957.6 259.2h1.4M958.5 261.7h1.4M959.2 263.2h1.4M959.9 264.0h1.4M960.7 266.7h1.4M961.4 267.3h1.4M962.2 267.5h1.4M963.2 267.0h1.4M963.7 266.6h1.4M964.6 266.7h1.4M965.1 267.1h1.4M966.0 262.0h1.4M966.8 262.6h1.4M967.5 268.4h1.4M968.1 262.8h1.4M969.2 264.6h1.4M969.6 264.7h1.4M970.4 264.6h1.4M971.2 268.5h1.4M971.8 266.5h1.4M972.7 268.3h1.4M973.7 266.0h1.4M974.1 264.7h1.4M974.9 263.8h1.4M975.7 264.6h1.4M976.6 264.8h1.4M977.3 262.3h1.4M978.0 264.0h1.4M978.7 263.0h1.4M979.5 262.3h1.4M980.1 261.9h1.4M980.9 263.9h1.4M981.6 262.2h1.4M982.6 261.8h1.4M983.4 261.1h1.4M983.9 264.2h1.4M984.9 261.4h1.4M985.7 263.9h1.4M986.3 263.3h1.4M986.9 263.5h1.4M987.7 262.5h1.4M988.7 264.7h1.4M989.2 263.7h1.4M990.1 264.6h1.4M990.6 264.2h1.4M991.5 262.5h1.4M992.3 262.2h1.4M993.1 262.2h1.4M993.8 263.5h1.4M994.7 262.2h1.4M995.1 259.0h1.4M995.9 259.8h1.4M996.8 261.1h1.4M997.3 261.2h1.4M998.2 264.0h1.4M998.8 267.0h1.4M999.8 267.0h1.4M1000.3 264.4h1.4M1001.3 266.7h1.4M1001.8 265.7h1.4M1002.8 268.2h1.4M1003.6 265.3h1.4M1004.3 266.0h1.4M1005.0 264.6h1.4M1005.9 267.5h1.4M1006.3 262.1h1.4M1007.1 266.5h1.4M1007.8 263.9h1.4M1008.6 263.6h1.4M1009.6 267.2h1.4M1010.1 264.5h1.4M1011.0 267.9h1.4M1011.8 266.7h1.4M1012.4 263.9h1.4M1013.1 266.0h1.4M1014.1 268.1h1.4M1014.6 263.4h1.4M1015.3 261.4h1.4M1016.3 262.6h1.4M1017.1 254.6h1.4M1017.8 259.3h1.4M1018.6 255.5h1.4M1019.3 258.5h1.4M1020.1 259.4h1.4M1020.9 263.3h1.4M1021.6 259.7h1.4M1022.3 262.6h1.4M1022.8 257.7h1.4M1023.7 256.9h1.4M1024.4 253.5h1.4M1025.1 252.9h1.4M1026.0 253.8h1.4M1026.6 257.2h1.4M1027.4 258.1h1.4M1028.4 254.1h1.4M1029.0 254.6h1.4M1029.6 256.5h1.4M1030.6 252.0h1.4M1031.1 257.0h1.4M1032.1 259.3h1.4M1032.6 257.6h1.4M1033.6 259.3h1.4M1034.3 260.1h1.4M1035.2 257.8h1.4M1035.9 258.3h1.4M1036.6 254.5h1.4M1037.4 259.9h1.4M1038.0 253.8h1.4M1038.9 255.8h1.4M1039.5 258.3h1.4M1040.3 255.0h1.4M1041.0 255.3h1.4M1041.8 256.3h1.4M1042.4 251.8h1.4M1043.1 251.1h1.4M1043.8 255.4h1.4M1044.8 256.6h1.4M1045.4 251.6h1.4M1046.4 253.2h1.4M1046.8 254.6h1.4M1047.6 254.1h1.4M1048.3 253.0h1.4M1049.1 252.6h1.4M1050.2 250.7h1.4M1050.8 252.4h1.4M1051.3 252.3h1.4M371.0 264.0h1.4M372.0 264.4h1.4M688.0 242.0h1.4M800.0 204.0h1.4M820.0 250.6h1.4M829.0 251.6h1.4M833.0 249.0h1.4M836.0 252.0h1.4M828.0 255.0h1.4M835.0 256.0h1.4M890.0 254.0h1.4M888.0 257.0h1.4M904.0 257.6h1.4M922.0 256.6h1.4M928.0 255.6h1.4M946.0 237.4h1.4M948.0 240.0h1.4M952.0 244.6h1.4M947.0 248.0h1.4M952.0 250.4h1.4M959.0 251.6h1.4M972.0 253.0h1.4M941.0 257.0h1.4M1027.0 249.0h1.4M1032.0 249.0h1.4" stroke="#ff8c00" stroke-width="1.4" fill="none"/>
<path d="M134.7 300.7h1.35M135.3 300.6h1.35M136.0 301.0h1.35M136.8 301.0h1.35M137.6 302.0h1.35M138.3 300.6h1.35M139.2 301.3h1.35M139.7 301.0h1.35M140.4 298.2h1.35M141.3 300.7h1.35M142.0 298.1h1.35M142.8 302.0h1.35M143.3 300.2h1.35M143.9 301.2h1.35M144.7 301.2h1.35M145.4 298.1h1.35M146.3 300.7h1.35M147.1 299.7h1.35M147.8 302.8h1.35M148.5 303.3h1.35M149.1 297.9h1.35M149.8 299.4h1.35M150.5 297.9h1.35M151.3 299.1h1.35M151.9 298.1h1.35M152.7 297.6h1.35M153.4 297.7h1.35M154.0 297.2h1.35M154.8 297.8h1.35M155.8 297.2h1.35M156.1 297.2h1.35M157.0 297.2h1.35M157.8 297.0h1.35M158.5 296.7h1.35M159.0 297.4h1.35M160.0 297.1h1.35M160.5 296.7h1.35M161.3 297.7h1.35M162.0 296.8h1.35M162.7 298.2h1.35M163.7 303.3h1.35M164.4 307.3h1.35M165.0 305.1h1.35M165.7 306.4h1.35M166.5 307.5h1.35M167.3 305.2h1.35M167.8 306.8h1.35M168.6 308.4h1.35M169.2 302.8h1.35M170.1 304.5h1.35M170.8 304.8h1.35M171.5 302.4h1.35M172.0 303.7h1.35M172.8 301.1h1.35M173.8 305.0h1.35M174.4 304.4h1.35M175.1 302.4h1.35M175.6 301.1h1.35M176.5 301.7h1.35M177.3 303.4h1.35M177.8 300.4h1.35M178.8 303.1h1.35M179.5 300.2h1.35M180.0 299.3h1.35M180.8 300.3h1.35M181.5 298.8h1.35M182.3 299.4h1.35M182.9 299.8h1.35M183.6 301.0h1.35M184.6 300.8h1.35M185.0 301.8h1.35M185.7 299.9h1.35M186.4 298.9h1.35M187.3 299.8h1.35M187.8 297.8h1.35M188.8 298.8h1.35M189.6 299.3h1.35M190.1 300.4h1.35M190.7 300.5h1.35M191.5 299.8h1.35M192.3 298.5h1.35M193.1 300.6h1.35M193.8 299.9h1.35M194.6 298.6h1.35M195.3 300.9h1.35M195.9 297.6h1.35M196.7 301.9h1.35M197.5 300.5h1.35M198.1 302.4h1.35M198.9 299.7h1.35M199.7 303.2h1.35M200.2 303.1h1.35M201.1 304.4h1.35M201.7 303.0h1.35M202.4 304.2h1.35M203.2 306.0h1.35M203.8 306.0h1.35M204.4 302.2h1.35M205.3 300.3h1.35M206.0 302.1h1.35M206.6 302.0h1.35M207.4 301.1h1.35M208.2 300.2h1.35M209.0 304.7h1.35M209.7 302.2h1.35M210.5 305.0h1.35M211.1 306.2h1.35M211.9 304.8h1.35M212.6 306.3h1.35M213.1 306.4h1.35M213.8 302.6h1.35M214.7 304.6h1.35M215.5 304.8h1.35M216.1 304.8h1.35M216.7 306.6h1.35M217.7 309.1h1.35M218.2 305.2h1.35M218.9 305.5h1.35M219.6 308.1h1.35M220.5 305.6h1.35M221.1 305.7h1.35M221.9 304.9h1.35M222.7 305.1h1.35M223.3 307.1h1.35M224.1 303.8h1.35M224.7 302.7h1.35M225.5 308.1h1.35M226.1 304.5h1.35M226.9 303.9h1.35M227.5 302.6h1.35M228.1 301.1h1.35M229.1 302.2h1.35M229.8 302.8h1.35M230.7 308.5h1.35M231.0 304.2h1.35M231.8 304.3h1.35M232.8 304.2h1.35M233.2 307.5h1.35M234.2 307.5h1.35M234.7 314.1h1.35M235.4 308.0h1.35M236.2 306.8h1.35M236.9 309.2h1.35M237.6 307.9h1.35M238.5 305.0h1.35M239.3 306.2h1.35M239.9 306.0h1.35M240.5 308.2h1.35M241.4 307.7h1.35M242.0 308.8h1.35M242.5 307.0h1.35M243.3 307.9h1.35M244.1 304.4h1.35M244.7 308.5h1.35M245.8 309.0h1.35M246.3 308.8h1.35M246.9 313.3h1.35M247.8 310.1h1.35M248.4 309.3h1.35M249.3 310.9h1.35M250.1 311.5h1.35M250.5 311.0h1.35M251.5 310.3h1.35M252.2 310.4h1.35M252.8 312.9h1.35M253.5 313.2h1.35M254.3 311.7h1.35M254.9 314.4h1.35M255.8 311.7h1.35M256.2 314.4h1.35M257.1 314.4h1.35M257.8 310.3h1.35M258.5 311.9h1.35M259.3 313.1h1.35M260.1 313.1h1.35M260.9 311.7h1.35M261.3 308.6h1.35M262.2 314.5h1.35M262.7 310.5h1.35M263.5 309.4h1.35M264.5 307.7h1.35M265.1 305.5h1.35M266.0 307.9h1.35M266.5 309.7h1.35M267.1 314.5h1.35M267.8 312.9h1.35M268.7 309.1h1.35M269.2 304.5h1.35M269.9 310.3h1.35M270.7 309.0h1.35M271.7 308.5h1.35M272.2 306.4h1.35M272.8 310.6h1.35M273.7 307.1h1.35M279.1 307.7h1.35M279.9 306.5h1.35M280.6 305.8h1.35M281.0 305.3h1.35M281.8 306.6h1.35M282.5 306.9h1.35M283.1 306.5h1.35M284.1 305.2h1.35M284.9 306.4h1.35M285.5 306.4h1.35M286.0 307.2h1.35M286.8 307.0h1.35M287.8 306.1h1.35M288.3 307.6h1.35M289.2 307.5h1.35M289.8 306.5h1.35M290.6 306.1h1.35M291.0 306.5h1.35M291.9 305.3h1.35M292.9 306.8h1.35M293.3 309.0h1.35M294.0 305.8h1.35M295.0 305.8h1.35M295.5 307.4h1.35M296.3 306.0h1.35M296.9 307.1h1.35M297.5 308.0h1.35M298.5 308.1h1.35M299.3 308.0h1.35M299.7 308.2h1.35M300.6 307.8h1.35M301.3 309.3h1.35M302.0 309.2h1.35M302.6 311.0h1.35M303.3 311.3h1.35M304.1 310.9h1.35M305.0 311.5h1.35M305.7 311.7h1.35M306.2 311.2h1.35M307.2 312.2h1.35M307.8 312.5h1.35M308.6 311.7h1.35M309.4 315.1h1.35M309.9 315.7h1.35M310.7 314.7h1.35M311.5 314.8h1.35M312.2 314.5h1.35M312.8 313.6h1.35M313.6 314.3h1.35M314.3 313.7h1.35M314.9 313.9h1.35M315.9 313.3h1.35M316.3 313.9h1.35M317.3 315.0h1.35M317.9 314.3h1.35M318.6 312.6h1.35M319.2 310.6h1.35M319.8 313.8h1.35M320.8 315.2h1.35M321.5 313.8h1.35M322.3 314.3h1.35M322.9 312.3h1.35M323.8 311.2h1.35M327.1 315.3h1.35M327.8 315.4h1.35M328.4 315.1h1.35M329.2 316.6h1.35M330.1 315.4h1.35M330.5 315.9h1.35M331.5 315.0h1.35M332.0 314.3h1.35M332.6 316.0h1.35M333.6 315.9h1.35M334.2 316.1h1.35M334.9 316.9h1.35M335.7 316.6h1.35M336.3 317.2h1.35M337.0 317.8h1.35M337.7 317.8h1.35M338.3 317.8h1.35M339.1 316.7h1.35M340.0 317.6h1.35M340.8 316.3h1.35M341.5 316.8h1.35M342.1 317.0h1.35M342.7 316.0h1.35M343.5 316.2h1.35M344.1 317.7h1.35M345.0 317.0h1.35M345.7 316.9h1.35M346.4 316.9h1.35M347.2 317.3h1.35M347.8 317.0h1.35M348.7 317.3h1.35M349.4 317.4h1.35M350.1 316.7h1.35M350.8 317.2h1.35M351.7 318.2h1.35M352.3 317.7h1.35M352.9 316.8h1.35M353.6 316.7h1.35M354.4 318.3h1.35M354.9 317.6h1.35M355.8 318.2h1.35M356.5 318.5h1.35M357.1 318.0h1.35M358.0 318.8h1.35M358.5 318.6h1.35M359.3 317.8h1.35M360.1 319.3h1.35M360.9 318.0h1.35M361.5 318.6h1.35M362.1 319.7h1.35M362.9 319.4h1.35M363.6 319.0h1.35M364.6 319.4h1.35M365.2 319.0h1.35M365.7 320.0h1.35M366.8 318.6h1.35M367.3 319.5h1.35M368.0 319.0h1.35M368.9 318.8h1.35M369.6 320.1h1.35M370.1 321.0h1.35M370.9 320.0h1.35M371.8 320.4h1.35M372.4 319.7h1.35M372.9 319.5h1.35M373.7 319.5h1.35M374.6 319.5h1.35M375.1 319.0h1.35M376.0 319.4h1.35M376.5 319.7h1.35M377.5 320.9h1.35M378.3 319.8h1.35M378.9 320.8h1.35M379.4 320.9h1.35M380.3 320.2h1.35M381.0 321.5h1.35M381.9 320.2h1.35M382.6 322.6h1.35M383.0 320.7h1.35M384.0 321.7h1.35M384.7 319.7h1.35M385.5 320.5h1.35M386.2 321.2h1.35M386.8 321.1h1.35M387.5 320.4h1.35M388.2 320.9h1.35M389.0 321.3h1.35M389.5 323.1h1.35M390.4 323.1h1.35M391.2 322.9h1.35M391.8 323.1h1.35M392.7 321.4h1.35M393.2 323.4h1.35M394.1 323.1h1.35M394.5 323.5h1.35M395.2 322.9h1.35M396.0 324.0h1.35M396.7 323.9h1.35M397.5 324.5h1.35M398.4 326.7h1.35M398.9 325.7h1.35M399.6 327.1h1.35M400.5 326.6h1.35M401.1 326.7h1.35M401.7 325.3h1.35M402.4 325.3h1.35M403.2 325.2h1.35M403.9 326.0h1.35M404.8 325.8h1.35M405.3 324.9h1.35M406.3 325.9h1.35M406.9 326.5h1.35M407.6 326.2h1.35M408.4 325.7h1.35M409.0 325.1h1.35M409.9 324.8h1.35M410.3 326.0h1.35M411.3 326.8h1.35M411.9 325.0h1.35M412.6 326.1h1.35M413.2 325.7h1.35M414.1 326.3h1.35M414.6 325.2h1.35M415.7 326.1h1.35M416.5 325.0h1.35M417.1 325.5h1.35M417.5 326.5h1.35M418.6 326.2h1.35M419.0 327.1h1.35M420.0 326.3h1.35M420.8 326.9h1.35M421.5 325.8h1.35M421.9 325.1h1.35M422.8 325.9h1.35M423.4 328.1h1.35M424.3 329.9h1.35M424.8 330.4h1.35M425.7 330.6h1.35M426.5 330.4h1.35M427.1 330.2h1.35M427.7 331.5h1.35M428.6 330.5h1.35M429.2 330.3h1.35M430.0 330.4h1.35M430.6 331.2h1.35M431.4 330.0h1.35M432.0 330.6h1.35M433.0 331.1h1.35M433.7 331.2h1.35M434.1 330.5h1.35M435.1 331.0h1.35M435.7 331.6h1.35M436.6 331.0h1.35M437.1 332.2h1.35M437.8 330.6h1.35M438.5 331.3h1.35M439.4 331.1h1.35M439.8 330.6h1.35M440.9 331.7h1.35M441.6 332.5h1.35M442.2 331.7h1.35M442.8 330.7h1.35M443.8 331.5h1.35M444.2 331.8h1.35M445.0 331.5h1.35M445.8 331.3h1.35M446.5 332.0h1.35M447.3 331.5h1.35M447.8 331.3h1.35M448.8 332.1h1.35M449.4 332.6h1.35M450.2 333.4h1.35M450.9 333.0h1.35M451.4 333.0h1.35M452.1 332.1h1.35M453.1 331.9h1.35M453.6 332.7h1.35M454.2 331.6h1.35M455.2 332.4h1.35M456.0 332.3h1.35M456.8 332.4h1.35M457.2 332.5h1.35M458.2 333.4h1.35M458.6 331.6h1.35M459.3 333.2h1.35M460.2 331.8h1.35M460.9 331.8h1.35M461.8 332.4h1.35M462.2 332.8h1.35M465.2 328.5h1.35M465.8 329.1h1.35M466.6 328.1h1.35M467.2 327.8h1.35M467.8 328.1h1.35M468.7 327.7h1.35M469.5 328.4h1.35M470.1 327.5h1.35M470.7 328.1h1.35M471.4 327.0h1.35M472.2 328.1h1.35M472.8 326.8h1.35M473.7 326.7h1.35M474.4 327.3h1.35M474.9 327.1h1.35M475.9 327.8h1.35M476.4 327.7h1.35M477.3 327.4h1.35M477.9 327.4h1.35M478.7 327.3h1.35M479.4 327.6h1.35M480.1 327.7h1.35M480.8 328.2h1.35M481.4 327.6h1.35M482.3 327.8h1.35M482.8 327.0h1.35M483.9 327.4h1.35M484.3 327.5h1.35M485.3 328.1h1.35M485.7 328.6h1.35M486.5 327.5h1.35M487.3 328.5h1.35M488.1 328.5h1.35M488.9 327.9h1.35M489.6 327.9h1.35M490.0 328.4h1.35M491.0 328.5h1.35M491.6 329.3h1.35M492.3 329.4h1.35M493.2 328.6h1.35M494.0 329.2h1.35M494.5 329.1h1.35M495.4 330.2h1.35M495.9 329.5h1.35M496.6 329.7h1.35M497.3 329.6h1.35M498.1 330.4h1.35M498.9 330.2h1.35M499.4 329.7h1.35M500.3 330.8h1.35M501.1 330.1h1.35M501.7 331.6h1.35M502.4 331.4h1.35M503.3 331.5h1.35M504.0 331.7h1.35M504.4 331.2h1.35M505.4 331.3h1.35M506.2 332.5h1.35M506.6 331.9h1.35M507.3 331.2h1.35M508.2 330.9h1.35M508.8 330.5h1.35M509.5 329.8h1.35M510.4 330.6h1.35M511.1 331.5h1.35M511.6 331.7h1.35M512.4 332.0h1.35M513.2 330.9h1.35M514.0 333.5h1.35M514.5 334.6h1.35M515.5 335.9h1.35M516.0 336.0h1.35M516.7 335.4h1.35M517.6 337.5h1.35M518.1 337.4h1.35M518.9 336.8h1.35M519.7 336.5h1.35M520.5 337.7h1.35M521.2 337.1h1.35M522.0 337.7h1.35M522.7 336.6h1.35M523.3 337.7h1.35M524.2 337.5h1.35M525.0 336.5h1.35M525.5 337.4h1.35M526.2 337.7h1.35M527.0 338.8h1.35M527.8 335.8h1.35M528.4 335.8h1.35M529.0 333.2h1.35M529.9 333.5h1.35M530.4 334.4h1.35M531.3 332.6h1.35M532.1 333.3h1.35M532.7 335.1h1.35M533.6 332.0h1.35M534.3 334.6h1.35M534.8 336.5h1.35M535.6 335.5h1.35M536.1 334.8h1.35M536.8 334.6h1.35M537.6 336.6h1.35M538.4 335.9h1.35M539.3 333.3h1.35M539.9 332.6h1.35M540.5 334.4h1.35M541.2 332.5h1.35M542.1 332.4h1.35M543.0 333.7h1.35M543.4 336.8h1.35M544.1 335.6h1.35M545.0 336.9h1.35M545.6 334.9h1.35M546.4 335.5h1.35M547.1 336.0h1.35M547.6 334.7h1.35M548.6 335.8h1.35M549.1 334.2h1.35M550.0 332.9h1.35M550.8 333.2h1.35M551.5 335.3h1.35M552.3 336.0h1.35M552.7 332.3h1.35M553.5 332.2h1.35M554.2 334.8h1.35M554.9 333.1h1.35M555.6 334.2h1.35M556.5 332.6h1.35M557.2 335.3h1.35M557.7 335.3h1.35M558.5 334.9h1.35M559.4 335.8h1.35M559.9 335.4h1.35M560.7 334.6h1.35M567.1 333.6h1.35M567.6 335.8h1.35M568.6 336.2h1.35M569.1 334.8h1.35M569.9 336.1h1.35M570.5 337.0h1.35M571.3 336.4h1.35M571.8 339.7h1.35M572.8 340.7h1.35M573.3 341.4h1.35M574.2 341.5h1.35M575.1 341.6h1.35M575.5 339.9h1.35M576.3 339.7h1.35M577.2 340.7h1.35M577.9 341.3h1.35M578.4 342.3h1.35M596.9 337.5h1.35M597.7 338.5h1.35M598.4 336.5h1.35M599.1 338.6h1.35M600.0 337.4h1.35M600.7 337.9h1.35M601.4 335.0h1.35M601.8 338.5h1.35M602.7 339.3h1.35M603.4 339.3h1.35M604.4 337.4h1.35M605.0 338.2h1.35M605.6 336.8h1.35M606.2 338.4h1.35M607.1 337.0h1.35M607.6 339.4h1.35M608.4 338.0h1.35M609.2 336.7h1.35M609.8 335.9h1.35M610.7 335.3h1.35M611.3 333.6h1.35M612.1 331.7h1.35M612.7 330.9h1.35M613.7 331.3h1.35M614.4 329.9h1.35M615.0 327.8h1.35M615.8 327.7h1.35M616.6 326.8h1.35M617.3 326.2h1.35M618.1 327.7h1.35M618.5 327.1h1.35M619.2 326.3h1.35M620.1 326.4h1.35M620.6 328.5h1.35M621.6 325.6h1.35M622.1 327.8h1.35M623.1 326.6h1.35M623.8 325.4h1.35M624.3 326.0h1.35M625.0 325.6h1.35M626.0 327.4h1.35M626.4 328.1h1.35M627.3 327.7h1.35M627.9 327.2h1.35M628.8 327.3h1.35M629.3 328.2h1.35M630.2 328.8h1.35M630.8 327.9h1.35M631.7 325.9h1.35M632.2 328.6h1.35M633.1 326.7h1.35M633.7 326.6h1.35M634.6 325.6h1.35M635.0 326.2h1.35M636.1 325.6h1.35M636.7 328.9h1.35M637.3 327.6h1.35M637.9 324.0h1.35M638.8 326.3h1.35M639.6 322.9h1.35M640.1 323.2h1.35M640.7 324.4h1.35M641.5 323.8h1.35M642.5 322.9h1.35M643.1 328.4h1.35M644.0 325.5h1.35M644.5 325.4h1.35M645.1 326.5h1.35M645.9 326.3h1.35M646.7 322.1h1.35M647.4 325.3h1.35M647.9 322.9h1.35M648.8 322.8h1.35M649.4 324.6h1.35M650.3 323.3h1.35M651.1 326.3h1.35M651.7 327.1h1.35M652.6 325.4h1.35M653.3 324.6h1.35M653.8 326.7h1.35M654.5 325.1h1.35M655.4 325.9h1.35M656.0 329.0h1.35M656.6 326.0h1.35M657.4 322.8h1.35M658.0 321.9h1.35M658.8 326.1h1.35M659.6 327.3h1.35M660.5 324.7h1.35M661.0 326.1h1.35M661.9 325.9h1.35M662.7 321.7h1.35M663.4 329.4h1.35M664.1 324.2h1.35M664.6 324.0h1.35M665.4 321.8h1.35M666.0 324.8h1.35M666.9 323.9h1.35M667.7 322.1h1.35M668.4 321.5h1.35M669.0 322.2h1.35M669.5 323.2h1.35M670.4 328.5h1.35M671.3 324.5h1.35M671.8 319.0h1.35M672.5 323.2h1.35M673.1 325.7h1.35M673.9 320.1h1.35M674.9 324.0h1.35M675.3 327.3h1.35M676.1 325.0h1.35M677.1 327.7h1.35M677.7 325.2h1.35M678.4 323.1h1.35M679.0 322.7h1.35M679.9 328.3h1.35M680.5 326.3h1.35M681.2 324.2h1.35M682.0 318.8h1.35M682.9 324.2h1.35M683.3 325.3h1.35M684.0 325.6h1.35M684.9 326.5h1.35M685.6 324.1h1.35M686.3 322.6h1.35M687.0 325.4h1.35M687.7 322.8h1.35M688.6 322.1h1.35M689.0 325.4h1.35M689.9 325.2h1.35M690.6 324.5h1.35M691.2 326.9h1.35M692.1 325.7h1.35M692.9 323.5h1.35M693.4 324.2h1.35M694.1 322.0h1.35M694.9 323.1h1.35M695.8 323.1h1.35M696.2 323.8h1.35M697.1 319.0h1.35M697.8 321.5h1.35M700.0 315.6h1.35M700.8 315.2h1.35M701.5 314.9h1.35M702.4 315.4h1.35M702.9 315.9h1.35M703.7 315.6h1.35M704.5 316.2h1.35M704.8 315.9h1.35M705.7 315.5h1.35M710.0 316.5h1.35M710.8 317.1h1.35M711.5 315.1h1.35M712.1 315.4h1.35M712.8 316.0h1.35M713.7 316.6h1.35M714.4 315.3h1.35M715.0 315.2h1.35M715.8 317.8h1.35M716.5 316.4h1.35M717.1 314.8h1.35M717.9 317.7h1.35M718.6 315.4h1.35M719.4 319.4h1.35M720.0 318.6h1.35M720.7 320.6h1.35M721.7 318.6h1.35M722.2 319.6h1.35M722.8 320.6h1.35M723.9 319.9h1.35M724.3 321.3h1.35M725.2 320.1h1.35M725.8 316.8h1.35M726.7 322.0h1.35M727.1 317.7h1.35M727.8 322.4h1.35M728.9 318.7h1.35M729.5 320.2h1.35M730.2 319.0h1.35M730.9 320.5h1.35M731.6 320.1h1.35M732.5 317.8h1.35M733.1 315.9h1.35M733.6 315.4h1.35M734.6 319.5h1.35M735.2 316.8h1.35M735.9 317.3h1.35M736.6 317.4h1.35M737.3 322.3h1.35M738.1 319.4h1.35M738.6 318.4h1.35M739.4 318.3h1.35M740.1 318.6h1.35M740.8 321.7h1.35M741.9 321.0h1.35M742.5 323.4h1.35M743.1 323.0h1.35M743.9 321.4h1.35M744.4 323.5h1.35M745.1 321.5h1.35M745.9 321.9h1.35M746.8 321.8h1.35M747.4 318.8h1.35M748.0 320.5h1.35M749.0 316.0h1.35M749.5 315.6h1.35M750.3 315.7h1.35M750.8 317.9h1.35M751.7 321.7h1.35M752.6 321.0h1.35M753.0 318.3h1.35M753.8 320.0h1.35M754.7 318.1h1.35M755.2 320.8h1.35M755.9 319.8h1.35M756.8 321.9h1.35M757.5 317.8h1.35M758.1 319.6h1.35M759.1 321.1h1.35M759.8 318.6h1.35M760.4 320.6h1.35M760.9 319.3h1.35M762.0 318.8h1.35M762.6 317.6h1.35M763.3 318.4h1.35M764.1 319.5h1.35M764.9 321.5h1.35M765.3 319.3h1.35M766.1 318.6h1.35M766.7 318.7h1.35M767.4 318.4h1.35M768.5 321.8h1.35M768.9 318.4h1.35M769.6 321.6h1.35M770.6 323.9h1.35M771.2 327.6h1.35M771.9 324.2h1.35M772.5 326.0h1.35M773.5 327.9h1.35M774.2 325.6h1.35M774.6 325.4h1.35M775.7 324.7h1.35M776.2 325.5h1.35M776.9 323.7h1.35M777.8 324.1h1.35M778.4 324.0h1.35M779.2 324.8h1.35M779.9 323.4h1.35M780.7 324.4h1.35M781.4 323.1h1.35M782.1 323.3h1.35M782.8 323.7h1.35M783.3 324.5h1.35M784.0 324.9h1.35M784.8 325.0h1.35M785.4 324.0h1.35M786.4 324.1h1.35M787.1 324.6h1.35M787.9 323.4h1.35M788.3 322.5h1.35M789.3 322.7h1.35M789.7 322.9h1.35M790.6 323.7h1.35M791.3 324.2h1.35M792.0 322.8h1.35M792.9 323.5h1.35M793.6 323.8h1.35M794.4 323.7h1.35M794.8 322.7h1.35M795.9 323.8h1.35M796.5 317.3h1.35M796.9 318.4h1.35M798.0 317.8h1.35M798.7 326.4h1.35M799.3 325.1h1.35M799.9 325.4h1.35M800.6 322.3h1.35M801.4 320.7h1.35M802.4 320.9h1.35M802.8 323.4h1.35M803.5 323.2h1.35M804.4 325.2h1.35M805.0 321.8h1.35M805.9 321.6h1.35M806.6 323.9h1.35M807.2 321.8h1.35M807.7 323.4h1.35M808.6 320.2h1.35M809.5 318.3h1.35M810.3 316.7h1.35M810.9 315.8h1.35M811.5 321.0h1.35M812.2 321.7h1.35M812.9 320.9h1.35M813.9 317.7h1.35M814.3 321.1h1.35M815.2 320.5h1.35M816.0 318.4h1.35M816.5 317.2h1.35M817.3 318.4h1.35M818.0 319.8h1.35M818.6 320.5h1.35M819.3 318.7h1.35M820.2 323.6h1.35M820.9 321.0h1.35M821.7 319.2h1.35M822.5 321.0h1.35M823.0 321.2h1.35M823.9 321.7h1.35M824.3 321.1h1.35M825.1 320.1h1.35M826.1 320.7h1.35M826.6 320.2h1.35M827.5 319.4h1.35M828.1 320.3h1.35M828.6 322.3h1.35M829.6 321.5h1.35M830.3 322.9h1.35M830.8 321.4h1.35M831.5 320.8h1.35M832.2 321.8h1.35M833.1 322.6h1.35M834.0 320.6h1.35M834.4 322.6h1.35M835.1 322.5h1.35M836.0 321.5h1.35M836.8 321.4h1.35M837.6 318.4h1.35M838.2 319.3h1.35M838.9 319.3h1.35M839.5 322.3h1.35M840.4 322.6h1.35M841.0 322.5h1.35M841.7 323.3h1.35M842.3 320.9h1.35M843.2 320.7h1.35M844.1 321.5h1.35M844.6 321.5h1.35M845.3 324.0h1.35M846.2 321.2h1.35M847.0 321.7h1.35M847.5 322.3h1.35M848.3 322.6h1.35M849.0 322.5h1.35M849.7 322.3h1.35M850.3 321.9h1.35M850.9 321.7h1.35M851.8 321.0h1.35M852.6 321.1h1.35M853.1 321.0h1.35M854.1 320.0h1.35M854.7 320.2h1.35M855.3 320.5h1.35M856.1 321.3h1.35M857.0 320.6h1.35M857.5 318.9h1.35M858.2 319.6h1.35M859.0 321.1h1.35M859.9 319.9h1.35M860.6 319.5h1.35M861.4 319.8h1.35M861.7 319.7h1.35M862.6 319.9h1.35M863.3 319.2h1.35M864.2 321.1h1.35M864.6 320.0h1.35M865.6 320.6h1.35M866.4 321.1h1.35M867.1 321.6h1.35M867.8 322.5h1.35M868.4 322.8h1.35M869.2 322.4h1.35M869.7 323.8h1.35M870.4 323.3h1.35M871.3 323.4h1.35M871.9 324.1h1.35M872.6 324.6h1.35M873.4 322.7h1.35M874.1 324.0h1.35M874.8 324.8h1.35M875.7 324.4h1.35M876.2 323.5h1.35M877.2 324.6h1.35M877.8 325.2h1.35M878.5 325.2h1.35M879.1 325.6h1.35M879.8 326.3h1.35M880.8 325.6h1.35M881.2 326.4h1.35M882.1 325.7h1.35M882.9 326.3h1.35M883.6 326.3h1.35M884.3 326.9h1.35M884.9 325.2h1.35M885.6 325.8h1.35M886.4 326.0h1.35M887.0 326.4h1.35M887.6 325.6h1.35M888.7 324.0h1.35M889.1 321.9h1.35M889.9 325.6h1.35M890.8 321.5h1.35M891.4 323.0h1.35M892.2 322.6h1.35M892.9 324.3h1.35M893.6 326.7h1.35M894.5 322.8h1.35M895.2 321.1h1.35M895.7 321.5h1.35M896.5 320.9h1.35M897.3 320.5h1.35M898.0 321.4h1.35M898.7 321.1h1.35M899.2 321.6h1.35M900.0 321.9h1.35M900.7 322.0h1.35M901.3 321.7h1.35M902.3 321.3h1.35M902.9 321.2h1.35M903.6 321.6h1.35M904.5 321.4h1.35M905.2 321.5h1.35M905.9 320.7h1.35M906.8 320.5h1.35M907.2 321.5h1.35M907.9 321.5h1.35M908.7 321.8h1.35M909.6 321.5h1.35M910.1 321.4h1.35M911.0 321.3h1.35M911.5 321.2h1.35M912.3 320.3h1.35M912.9 320.3h1.35M913.9 321.0h1.35M914.6 321.0h1.35M915.1 320.9h1.35M915.8 321.4h1.35M916.8 321.1h1.35M917.4 321.3h1.35M918.3 323.4h1.35M918.7 320.3h1.35M919.4 325.1h1.35M920.1 323.9h1.35M921.1 320.8h1.35M921.9 324.5h1.35M922.4 324.9h1.35M923.1 321.6h1.35M923.9 321.6h1.35M924.5 321.7h1.35M925.4 322.8h1.35M925.8 323.0h1.35M926.7 324.8h1.35M927.5 323.7h1.35M928.3 323.7h1.35M929.0 325.6h1.35M929.8 326.0h1.35M930.2 324.9h1.35M931.2 326.5h1.35M931.7 323.4h1.35M932.5 326.2h1.35M933.0 329.6h1.35M934.1 328.9h1.35M934.5 327.2h1.35M935.3 326.9h1.35M936.2 327.3h1.35M936.7 324.2h1.35M937.4 326.9h1.35M938.1 327.3h1.35M939.1 328.2h1.35M939.7 323.9h1.35M940.2 322.4h1.35M940.9 323.8h1.35M941.9 322.7h1.35M942.5 321.7h1.35M943.4 324.1h1.35M943.9 327.3h1.35M944.7 328.1h1.35M945.4 327.0h1.35M946.1 326.4h1.35M947.1 327.2h1.35M947.6 322.6h1.35M948.1 328.7h1.35M949.2 325.2h1.35M949.9 324.6h1.35M950.6 322.7h1.35M951.4 325.4h1.35M952.0 322.3h1.35M952.6 323.8h1.35M953.4 323.7h1.35M954.0 326.8h1.35M954.6 326.7h1.35M955.7 326.8h1.35M956.3 326.5h1.35M956.8 327.3h1.35M957.7 326.9h1.35M958.5 327.6h1.35M959.1 328.0h1.35M959.7 327.1h1.35M960.7 329.0h1.35M961.1 329.5h1.35M962.0 330.5h1.35M962.9 332.5h1.35M963.6 331.5h1.35M964.2 333.2h1.35M964.9 330.8h1.35M965.5 327.5h1.35M966.5 327.0h1.35M967.1 327.1h1.35M968.0 326.3h1.35M968.5 323.3h1.35M969.1 325.0h1.35M970.0 327.5h1.35M970.6 325.1h1.35M971.5 322.7h1.35M972.0 325.5h1.35M972.7 326.7h1.35M973.7 323.8h1.35M974.1 322.8h1.35M975.1 325.0h1.35M975.6 325.0h1.35M976.5 324.1h1.35M977.1 328.2h1.35M978.0 330.6h1.35M978.4 332.4h1.35M979.4 333.8h1.35M980.1 334.2h1.35M980.7 333.4h1.35M981.4 332.1h1.35M982.2 332.8h1.35M982.7 335.1h1.35M983.5 335.7h1.35M984.5 336.3h1.35M984.9 336.1h1.35M985.9 336.4h1.35M986.3 337.8h1.35M987.1 337.7h1.35M988.1 336.6h1.35M988.8 338.2h1.35M989.2 337.7h1.35M990.0 337.9h1.35M990.9 339.2h1.35M991.4 338.0h1.35M992.3 337.7h1.35M993.1 338.5h1.35M993.5 338.1h1.35M994.4 337.6h1.35M995.2 338.4h1.35M995.9 337.8h1.35M996.4 335.9h1.35M997.4 336.5h1.35M997.9 335.9h1.35M998.8 337.4h1.35M999.3 336.1h1.35M1000.3 335.9h1.35M1000.8 333.0h1.35M1001.6 331.9h1.35M1002.4 333.6h1.35M1002.9 333.1h1.35M1003.7 331.5h1.35M1004.3 329.6h1.35M1005.0 329.7h1.35M1005.9 329.6h1.35M1006.5 329.0h1.35M1007.4 329.4h1.35M1008.0 328.9h1.35M1008.7 328.8h1.35M1009.5 328.6h1.35M1010.1 329.5h1.35M1011.1 328.0h1.35M1011.7 328.3h1.35M1012.2 327.2h1.35M1013.1 327.3h1.35M1014.0 324.5h1.35M1014.4 323.2h1.35M1015.1 322.7h1.35M1016.2 324.4h1.35M1016.9 322.5h1.35M1017.4 322.6h1.35M1018.2 322.4h1.35M1018.7 322.3h1.35M1019.7 322.7h1.35M1020.2 322.2h1.35M1021.0 324.2h1.35M1021.8 323.3h1.35M1022.3 323.1h1.35M1023.1 323.6h1.35M1024.0 322.3h1.35M1024.7 322.7h1.35M1025.3 321.8h1.35M1026.3 322.1h1.35M1026.7 322.5h1.35M1027.6 319.6h1.35M1028.2 320.2h1.35M1028.9 324.8h1.35M1029.8 323.6h1.35M1030.4 322.7h1.35M1030.9 325.2h1.35M1031.8 324.9h1.35M1032.4 328.0h1.35M1033.4 326.7h1.35M1034.2 326.4h1.35M1034.9 325.3h1.35M1035.2 325.5h1.35M1036.4 327.6h1.35M1036.9 328.0h1.35M1037.6 327.0h1.35M1038.2 327.4h1.35M1039.1 325.3h1.35M1039.9 325.5h1.35M1040.4 325.4h1.35M1041.2 325.3h1.35M1042.1 324.1h1.35M1042.6 324.0h1.35M1043.3 323.4h1.35M1044.1 323.3h1.35M1044.7 324.2h1.35M1045.5 322.6h1.35M1046.3 323.0h1.35M1046.8 323.3h1.35M1047.5 322.4h1.35M1048.2 322.5h1.35M1049.1 322.3h1.35M1049.8 322.7h1.35M1050.6 321.8h1.35M1051.3 322.2h1.35M176.0 284.4h1.35M177.0 292.0h1.35M201.0 289.0h1.35M200.0 294.0h1.35M230.0 289.6h1.35M218.0 299.0h1.35M227.4 298.0h1.35M238.0 299.6h1.35M206.0 316.0h1.35M211.0 316.4h1.35M219.0 316.0h1.35M229.4 317.6h1.35M208.0 310.6h1.35M204.0 310.6h1.35M244.0 315.6h1.35M257.0 316.0h1.35M173.0 296.4h1.35M171.0 298.0h1.35M407.0 290.0h1.35M407.4 291.6h1.35M408.0 294.0h1.35M660.0 338.0h1.35M693.0 337.0h1.35M691.0 332.0h1.35M658.0 331.6h1.35M724.4 310.0h1.35M827.0 328.0h1.35M837.0 328.0h1.35M775.0 328.0h1.35M764.0 327.0h1.35M946.0 317.0h1.35M1031.0 331.0h1.35" stroke="#f0f000" stroke-width="1.35" fill="none"/>
<path d="M134.9 375.5h1.2M135.2 381.9h1.2M135.6 376.3h1.2M136.3 382.4h1.2M136.9 379.9h1.2M137.2 383.5h1.2M137.7 379.7h1.2M138.1 382.2h1.2M138.6 380.5h1.2M138.8 378.3h1.2M139.5 380.5h1.2M139.7 373.9h1.2M140.4 383.3h1.2M140.7 380.4h1.2M141.2 378.5h1.2M141.7 383.6h1.2M142.2 377.0h1.2M142.5 380.2h1.2M142.9 379.6h1.2M143.4 378.4h1.2M144.0 379.7h1.2M144.5 379.8h1.2M145.0 382.7h1.2M145.3 381.4h1.2M145.7 378.5h1.2M146.1 381.9h1.2M146.5 375.8h1.2M146.9 379.4h1.2M147.6 376.0h1.2M148.0 377.3h1.2M148.2 375.8h1.2M148.9 382.8h1.2M149.4 376.2h1.2M149.9 377.0h1.2M150.3 382.8h1.2M150.5 373.9h1.2M151.0 380.5h1.2M151.6 378.6h1.2M152.0 384.1h1.2M152.3 379.9h1.2M153.0 376.2h1.2M153.2 376.3h1.2M153.8 382.7h1.2M154.1 380.8h1.2M154.7 382.7h1.2M155.0 378.6h1.2M155.7 383.8h1.2M156.0 375.6h1.2M156.4 384.1h1.2M157.1 382.1h1.2M157.3 381.8h1.2M157.8 383.2h1.2M158.5 381.8h1.2M158.8 383.6h1.2M159.3 385.1h1.2M159.5 381.3h1.2M160.0 382.0h1.2M160.6 382.9h1.2M160.9 381.4h1.2M161.6 377.0h1.2M162.1 386.1h1.2M162.3 381.8h1.2M162.7 381.7h1.2M163.4 379.4h1.2M163.7 378.6h1.2M164.3 380.8h1.2M164.7 379.2h1.2M165.1 379.9h1.2M165.7 376.7h1.2M166.1 382.3h1.2M166.3 382.7h1.2M166.8 378.3h1.2M167.3 381.3h1.2M167.6 384.2h1.2M168.0 380.6h1.2M168.5 380.0h1.2M169.2 382.4h1.2M169.7 378.6h1.2M170.0 379.3h1.2M170.3 377.3h1.2M170.9 378.2h1.2M171.3 376.2h1.2M171.9 382.6h1.2M172.1 377.1h1.2M172.5 382.9h1.2M173.0 384.6h1.2M173.8 383.4h1.2M174.0 381.5h1.2M174.3 379.2h1.2M174.9 386.1h1.2M175.2 385.2h1.2M175.7 382.3h1.2M176.2 383.7h1.2M176.9 378.2h1.2M177.2 377.7h1.2M177.7 382.6h1.2M178.2 381.5h1.2M178.4 381.6h1.2M179.1 377.3h1.2M179.4 380.6h1.2M179.9 380.0h1.2M180.4 380.6h1.2M180.9 374.8h1.2M181.3 378.6h1.2M181.7 384.4h1.2M182.2 380.1h1.2M182.8 379.8h1.2M182.9 382.6h1.2M183.3 386.1h1.2M183.8 381.0h1.2M184.3 383.6h1.2M185.0 379.2h1.2M185.5 377.0h1.2M185.9 376.4h1.2M186.2 378.3h1.2M186.7 380.3h1.2M187.1 380.1h1.2M187.5 377.1h1.2M187.9 377.6h1.2M188.3 379.9h1.2M188.8 380.1h1.2M189.3 382.2h1.2M189.8 378.3h1.2M190.1 378.5h1.2M190.9 383.8h1.2M191.1 375.6h1.2M191.6 378.5h1.2M192.2 381.5h1.2M192.5 382.0h1.2M192.8 381.5h1.2M193.5 381.2h1.2M193.7 381.3h1.2M194.4 373.9h1.2M194.6 374.9h1.2M195.2 373.9h1.2M195.6 373.9h1.2M196.0 381.5h1.2M196.6 377.5h1.2M197.0 380.1h1.2M197.3 379.9h1.2M197.8 378.7h1.2M198.2 379.1h1.2M198.7 381.1h1.2M199.3 377.4h1.2M199.6 378.2h1.2M200.0 382.7h1.2M200.5 377.2h1.2M201.1 381.7h1.2M201.6 378.3h1.2M201.9 381.4h1.2M202.6 380.6h1.2M202.9 379.4h1.2M203.4 378.6h1.2M203.9 379.6h1.2M204.3 377.5h1.2M204.5 383.4h1.2M205.0 381.9h1.2M205.7 386.1h1.2M206.1 382.1h1.2M206.6 381.6h1.2M207.1 380.8h1.2M207.2 380.5h1.2M208.0 385.2h1.2M208.1 383.0h1.2M208.7 384.9h1.2M209.3 377.4h1.2M209.6 383.9h1.2M210.1 381.6h1.2M210.4 379.9h1.2M210.8 379.0h1.2M211.3 380.2h1.2M211.9 377.5h1.2M212.4 380.5h1.2M212.9 380.0h1.2M213.2 379.1h1.2M213.8 379.1h1.2M214.2 385.0h1.2M214.7 379.9h1.2M215.1 380.8h1.2M215.3 380.4h1.2M216.1 383.4h1.2M216.2 384.7h1.2M216.7 386.9h1.2M217.1 381.4h1.2M217.6 384.8h1.2M218.0 385.3h1.2M218.5 382.1h1.2M219.0 378.6h1.2M219.4 381.7h1.2M219.8 379.8h1.2M220.3 383.2h1.2M220.7 377.8h1.2M221.2 378.7h1.2M221.6 379.7h1.2M222.1 376.6h1.2M222.6 380.3h1.2M223.3 381.7h1.2M223.5 382.5h1.2M223.9 384.1h1.2M224.3 382.6h1.2M225.0 385.5h1.2M225.2 378.0h1.2M225.8 388.2h1.2M226.2 381.6h1.2M226.8 381.4h1.2M227.2 380.4h1.2M227.5 383.4h1.2M227.9 379.7h1.2M228.4 388.6h1.2M229.0 386.3h1.2M229.5 386.1h1.2M229.7 388.3h1.2M230.5 387.0h1.2M230.6 384.6h1.2M231.0 387.9h1.2M231.6 386.5h1.2M232.1 387.8h1.2M232.6 388.1h1.2M233.1 383.7h1.2M233.6 386.9h1.2M233.7 383.1h1.2M234.5 386.7h1.2M234.7 382.2h1.2M235.1 385.9h1.2M235.7 387.2h1.2M236.0 382.7h1.2M236.6 388.2h1.2M236.9 384.5h1.2M237.3 389.7h1.2M238.0 385.1h1.2M238.5 384.7h1.2M238.8 391.2h1.2M239.2 385.8h1.2M239.6 385.2h1.2M240.3 382.8h1.2M240.5 385.8h1.2M241.3 384.6h1.2M241.4 384.4h1.2M241.8 390.1h1.2M242.3 391.5h1.2M242.9 389.3h1.2M243.5 383.0h1.2M243.9 388.2h1.2M244.1 384.3h1.2M244.6 392.5h1.2M245.2 388.9h1.2M245.7 382.5h1.2M245.9 379.8h1.2M246.4 380.6h1.2M246.8 380.4h1.2M247.5 383.4h1.2M247.7 381.0h1.2M248.3 384.4h1.2M248.7 382.8h1.2M249.3 379.9h1.2M249.5 388.9h1.2M250.0 387.8h1.2M250.6 383.9h1.2M250.9 383.1h1.2M251.5 386.3h1.2M251.9 389.4h1.2M252.4 395.2h1.2M252.7 387.1h1.2M253.3 393.6h1.2M253.6 388.8h1.2M254.3 385.4h1.2M254.6 386.4h1.2M254.9 388.5h1.2M255.4 389.9h1.2M255.8 388.1h1.2M256.5 387.4h1.2M256.7 386.1h1.2M257.1 392.1h1.2M257.9 389.6h1.2M258.3 382.1h1.2M258.6 382.1h1.2M259.1 386.7h1.2M259.4 386.8h1.2M259.8 391.1h1.2M260.5 388.7h1.2M260.9 394.5h1.2M261.3 384.8h1.2M262.0 390.9h1.2M262.4 395.3h1.2M262.7 388.7h1.2M263.2 388.3h1.2M263.5 380.8h1.2M264.2 384.9h1.2M264.3 382.7h1.2M264.8 387.4h1.2M265.4 391.2h1.2M266.0 391.3h1.2M266.1 396.4h1.2M266.8 389.4h1.2M267.2 385.7h1.2M267.5 383.2h1.2M268.3 392.2h1.2M268.6 391.6h1.2M269.2 393.0h1.2M269.5 393.2h1.2M269.9 386.6h1.2M270.4 390.4h1.2M270.9 387.0h1.2M271.1 384.7h1.2M271.6 391.8h1.2M272.0 389.4h1.2M272.5 383.0h1.2M273.2 384.0h1.2M273.5 382.3h1.2M273.9 388.2h1.2M279.1 381.9h1.2M279.5 379.4h1.2M279.8 380.9h1.2M280.3 379.9h1.2M280.7 380.2h1.2M281.4 380.6h1.2M281.7 381.9h1.2M282.1 381.2h1.2M282.4 379.9h1.2M283.1 381.6h1.2M283.7 379.9h1.2M283.8 380.1h1.2M284.4 380.1h1.2M284.7 380.1h1.2M285.3 379.6h1.2M285.9 381.1h1.2M286.3 380.3h1.2M286.5 380.4h1.2M287.2 379.7h1.2M287.5 380.9h1.2M288.0 380.5h1.2M288.4 379.9h1.2M289.0 380.1h1.2M289.3 379.8h1.2M289.9 379.1h1.2M290.3 380.2h1.2M290.7 380.8h1.2M291.0 381.0h1.2M291.7 381.8h1.2M292.1 380.4h1.2M292.4 379.7h1.2M292.9 380.5h1.2M293.6 379.8h1.2M293.9 379.5h1.2M294.4 378.9h1.2M294.9 379.0h1.2M295.3 379.6h1.2M296.0 386.2h1.2M296.4 386.4h1.2M296.6 386.7h1.2M297.2 387.0h1.2M297.5 385.2h1.2M298.1 386.6h1.2M298.6 385.8h1.2M298.8 386.3h1.2M299.6 385.5h1.2M299.8 386.5h1.2M300.1 387.7h1.2M300.7 386.5h1.2M301.1 387.7h1.2M301.5 385.9h1.2M302.3 385.6h1.2M302.5 385.8h1.2M302.9 385.3h1.2M303.5 385.2h1.2M304.1 384.7h1.2M304.5 384.6h1.2M304.9 385.3h1.2M305.1 386.7h1.2M305.5 385.0h1.2M306.3 385.6h1.2M306.6 384.4h1.2M307.0 384.3h1.2M307.6 385.5h1.2M307.9 385.4h1.2M308.4 385.5h1.2M308.9 386.4h1.2M309.3 385.4h1.2M309.7 386.3h1.2M310.5 383.1h1.2M310.8 383.7h1.2M311.4 384.5h1.2M311.6 383.4h1.2M312.3 382.6h1.2M312.8 384.0h1.2M312.9 383.4h1.2M313.7 383.1h1.2M313.9 383.4h1.2M314.5 383.4h1.2M314.8 383.1h1.2M315.3 383.2h1.2M315.7 383.8h1.2M316.1 383.5h1.2M316.8 384.4h1.2M317.2 383.5h1.2M317.7 383.6h1.2M317.9 384.4h1.2M318.4 384.1h1.2M318.9 384.6h1.2M319.4 384.4h1.2M319.7 383.7h1.2M320.2 383.2h1.2M320.8 383.8h1.2M321.1 383.1h1.2M321.6 383.6h1.2M322.0 383.2h1.2M322.4 383.3h1.2M323.1 383.6h1.2M323.4 383.8h1.2M324.0 384.0h1.2M328.1 401.1h1.2M328.6 399.7h1.2M328.9 403.2h1.2M329.4 398.7h1.2M329.9 400.7h1.2M330.3 402.2h1.2M330.7 399.8h1.2M331.0 401.7h1.2M331.4 402.0h1.2M332.1 397.9h1.2M332.3 403.2h1.2M333.1 401.1h1.2M333.4 400.0h1.2M333.7 399.5h1.2M334.3 400.0h1.2M334.9 403.6h1.2M335.2 402.7h1.2M335.7 404.8h1.2M336.1 404.4h1.2M336.4 401.2h1.2M336.8 398.2h1.2M337.5 403.6h1.2M338.1 401.7h1.2M338.2 402.7h1.2M338.9 398.5h1.2M339.2 402.2h1.2M339.5 401.0h1.2M340.3 395.6h1.2M340.5 401.8h1.2M341.0 399.1h1.2M341.7 397.1h1.2M341.9 399.5h1.2M342.4 398.8h1.2M342.9 399.1h1.2M343.5 394.8h1.2M343.8 395.4h1.2M344.1 401.1h1.2M344.7 400.1h1.2M345.0 397.4h1.2M345.7 400.8h1.2M346.2 397.1h1.2M346.4 399.3h1.2M347.1 402.1h1.2M347.3 397.6h1.2M347.6 397.2h1.2M348.1 399.1h1.2M348.8 399.0h1.2M349.3 402.0h1.2M349.7 405.2h1.2M350.1 398.6h1.2M350.4 397.8h1.2M350.8 399.9h1.2M351.4 398.8h1.2M352.0 396.7h1.2M352.3 404.4h1.2M352.6 401.5h1.2M353.1 402.2h1.2M353.6 397.9h1.2M353.9 399.9h1.2M354.5 402.6h1.2M355.2 400.1h1.2M355.3 402.3h1.2M355.9 401.0h1.2M356.4 400.8h1.2M356.8 405.0h1.2M357.1 400.1h1.2M357.8 394.4h1.2M358.0 396.4h1.2M358.7 398.0h1.2M359.2 401.0h1.2M359.7 396.1h1.2M359.8 400.4h1.2M360.5 402.2h1.2M361.0 400.8h1.2M361.2 399.1h1.2M361.7 399.1h1.2M362.2 399.9h1.2M362.7 401.3h1.2M363.3 402.8h1.2M363.6 401.0h1.2M364.1 401.7h1.2M364.6 401.1h1.2M364.7 397.3h1.2M365.2 397.2h1.2M365.9 400.5h1.2M366.1 399.2h1.2M366.5 401.0h1.2M367.3 400.1h1.2M367.5 402.7h1.2M368.2 401.5h1.2M368.6 397.2h1.2M369.1 397.7h1.2M369.5 399.8h1.2M369.7 395.8h1.2M370.2 395.0h1.2M370.8 391.8h1.2M371.2 397.3h1.2M371.8 399.5h1.2M372.0 395.1h1.2M372.6 395.3h1.2M372.9 402.8h1.2M373.3 399.6h1.2M373.8 397.8h1.2M374.4 401.2h1.2M374.6 398.8h1.2M375.3 395.8h1.2M375.5 390.8h1.2M376.3 395.2h1.2M376.4 400.0h1.2M377.2 397.6h1.2M377.4 396.1h1.2M378.0 400.6h1.2M378.4 394.3h1.2M379.0 393.9h1.2M379.5 394.9h1.2M379.6 392.7h1.2M380.0 400.2h1.2M380.5 402.5h1.2M381.1 397.7h1.2M381.4 391.7h1.2M382.0 394.2h1.2M382.4 395.6h1.2M383.0 403.0h1.2M383.4 397.9h1.2M383.9 397.4h1.2M384.1 396.7h1.2M384.8 396.0h1.2M385.1 399.6h1.2M385.5 403.3h1.2M385.9 406.2h1.2M386.3 403.2h1.2M386.8 395.5h1.2M387.5 400.1h1.2M387.9 399.6h1.2M388.2 393.0h1.2M388.8 402.7h1.2M389.0 398.6h1.2M389.7 393.2h1.2M390.0 394.1h1.2M390.5 397.2h1.2M391.0 398.0h1.2M391.5 393.3h1.2M391.8 401.1h1.2M392.2 399.9h1.2M392.8 395.7h1.2M393.2 398.0h1.2M393.6 400.9h1.2M394.3 403.0h1.2M394.5 401.2h1.2M395.2 400.5h1.2M395.4 397.0h1.2M395.9 399.5h1.2M396.4 393.5h1.2M397.0 399.6h1.2M397.4 400.8h1.2M397.6 393.9h1.2M398.2 397.9h1.2M398.7 396.0h1.2M398.9 394.7h1.2M399.7 395.4h1.2M400.0 391.2h1.2M400.6 396.1h1.2M400.9 394.1h1.2M401.4 393.2h1.2M401.7 391.0h1.2M402.4 400.3h1.2M402.8 394.9h1.2M403.2 398.5h1.2M403.4 399.5h1.2M404.1 398.8h1.2M404.4 405.6h1.2M404.8 402.3h1.2M405.3 397.7h1.2M405.9 402.7h1.2M406.2 399.6h1.2M406.7 399.7h1.2M407.0 395.4h1.2M407.7 394.2h1.2M408.0 397.0h1.2M408.6 398.2h1.2M409.0 399.9h1.2M409.4 392.7h1.2M409.8 400.8h1.2M410.3 392.6h1.2M410.8 392.0h1.2M411.1 396.1h1.2M411.5 393.4h1.2M412.2 397.9h1.2M412.6 400.6h1.2M413.2 398.9h1.2M413.6 396.0h1.2M414.1 392.9h1.2M414.5 398.2h1.2M414.7 399.2h1.2M415.4 395.0h1.2M415.7 401.3h1.2M416.2 400.9h1.2M416.6 397.9h1.2M417.2 398.0h1.2M417.4 403.1h1.2M418.2 397.9h1.2M418.4 405.4h1.2M418.7 400.9h1.2M419.2 402.1h1.2M419.9 401.8h1.2M420.3 402.9h1.2M420.8 405.5h1.2M422.1 409.9h1.2M422.5 410.2h1.2M422.8 409.7h1.2M423.3 409.6h1.2M423.9 409.5h1.2M424.3 409.6h1.2M424.6 409.6h1.2M425.1 408.7h1.2M425.6 409.0h1.2M425.9 409.1h1.2M426.6 409.2h1.2M427.0 410.2h1.2M427.3 410.0h1.2M427.7 410.5h1.2M428.2 409.3h1.2M428.8 411.1h1.2M429.1 410.0h1.2M429.8 409.7h1.2M429.9 410.1h1.2M430.6 409.2h1.2M431.1 409.1h1.2M431.3 409.0h1.2M431.9 409.1h1.2M432.5 408.9h1.2M432.9 408.9h1.2M433.2 409.5h1.2M433.8 410.5h1.2M434.3 411.2h1.2M434.6 409.0h1.2M435.2 409.8h1.2M435.6 411.4h1.2M435.9 408.8h1.2M436.5 408.9h1.2M437.0 408.3h1.2M437.4 410.6h1.2M437.6 410.9h1.2M438.3 410.7h1.2M438.6 410.0h1.2M438.9 411.1h1.2M439.7 411.2h1.2M440.0 411.7h1.2M440.3 411.2h1.2M441.1 412.6h1.2M441.5 412.0h1.2M442.0 412.5h1.2M442.2 413.4h1.2M442.7 414.1h1.2M443.1 414.2h1.2M443.6 414.1h1.2M444.1 413.1h1.2M444.4 412.5h1.2M445.1 410.0h1.2M445.4 409.7h1.2M446.0 407.0h1.2M446.2 406.3h1.2M446.9 409.2h1.2M447.1 409.1h1.2M447.5 404.3h1.2M448.1 410.0h1.2M448.7 408.6h1.2M449.1 408.5h1.2M449.6 410.0h1.2M449.8 406.2h1.2M450.2 407.1h1.2M450.9 411.1h1.2M451.3 410.6h1.2M451.7 409.7h1.2M452.1 407.2h1.2M452.5 409.0h1.2M453.0 408.1h1.2M453.5 407.9h1.2M453.9 404.9h1.2M454.4 405.2h1.2M454.7 408.6h1.2M455.4 404.6h1.2M455.7 408.3h1.2M456.3 404.0h1.2M456.8 407.1h1.2M456.9 408.2h1.2M457.6 404.7h1.2M458.2 407.4h1.2M458.4 408.8h1.2M459.0 407.2h1.2M459.5 407.1h1.2M459.7 405.3h1.2M460.1 409.4h1.2M460.5 407.9h1.2M461.2 404.8h1.2M461.6 410.0h1.2M462.0 404.8h1.2M462.6 404.8h1.2M463.1 403.3h1.2M463.4 403.5h1.2M463.9 407.5h1.2M464.4 404.5h1.2M464.8 404.9h1.2M465.3 401.1h1.2M465.8 398.6h1.2M466.0 396.1h1.2M466.6 397.2h1.2M466.8 395.7h1.2M467.6 399.1h1.2M467.9 397.7h1.2M468.5 395.5h1.2M468.8 397.5h1.2M469.4 398.2h1.2M469.8 397.8h1.2M470.2 393.8h1.2M470.5 395.3h1.2M471.1 397.5h1.2M471.7 397.6h1.2M471.9 398.6h1.2M472.5 398.0h1.2M472.9 400.1h1.2M473.3 399.6h1.2M473.7 403.5h1.2M474.0 397.9h1.2M474.5 399.6h1.2M475.0 397.6h1.2M475.7 398.4h1.2M476.2 396.1h1.2M476.5 399.1h1.2M476.7 399.8h1.2M477.5 399.4h1.2M477.9 398.7h1.2M478.4 397.0h1.2M478.7 401.1h1.2M479.1 400.7h1.2M479.7 403.2h1.2M480.2 399.1h1.2M480.7 398.8h1.2M481.0 397.9h1.2M481.5 397.1h1.2M482.0 395.1h1.2M482.2 394.3h1.2M482.7 395.5h1.2M483.3 391.1h1.2M483.6 393.7h1.2M484.1 394.2h1.2M484.4 394.1h1.2M485.2 394.7h1.2M485.6 394.8h1.2M486.0 392.6h1.2M486.2 396.0h1.2M486.8 395.3h1.2M487.3 395.6h1.2M487.8 397.7h1.2M488.2 392.8h1.2M488.5 395.9h1.2M489.1 392.7h1.2M489.6 395.9h1.2M489.9 393.5h1.2M490.3 397.1h1.2M490.9 394.1h1.2M491.2 392.1h1.2M491.9 395.1h1.2M492.1 395.2h1.2M492.5 393.6h1.2M493.0 391.4h1.2M493.4 394.4h1.2M493.9 395.8h1.2M494.4 393.7h1.2M494.8 393.0h1.2M495.4 390.8h1.2M495.7 393.2h1.2M496.2 392.1h1.2M496.6 394.1h1.2M497.2 391.1h1.2M497.7 393.0h1.2M498.2 391.9h1.2M498.4 393.0h1.2M498.8 393.5h1.2M499.5 395.6h1.2M499.8 393.1h1.2M500.5 396.7h1.2M500.8 395.8h1.2M501.2 394.0h1.2M501.7 393.6h1.2M502.0 393.2h1.2M502.4 394.1h1.2M502.9 393.1h1.2M503.3 393.6h1.2M503.7 393.9h1.2M504.2 391.9h1.2M504.8 393.3h1.2M505.4 395.0h1.2M505.7 394.4h1.2M506.0 396.0h1.2M506.5 392.5h1.2M507.1 392.1h1.2M507.6 392.9h1.2M507.8 393.9h1.2M508.6 395.2h1.2M508.9 394.9h1.2M509.5 393.8h1.2M509.6 394.0h1.2M510.0 393.5h1.2M510.7 391.8h1.2M511.0 392.7h1.2M511.4 392.6h1.2M511.8 393.4h1.2M512.6 391.0h1.2M512.9 391.7h1.2M513.4 391.3h1.2M513.7 391.8h1.2M514.1 391.9h1.2M514.6 389.0h1.2M515.2 385.7h1.2M515.4 390.8h1.2M516.1 392.5h1.2M516.3 393.4h1.2M516.9 389.6h1.2M517.2 387.2h1.2M518.0 392.7h1.2M518.5 387.9h1.2M518.6 394.5h1.2M519.3 388.0h1.2M519.6 393.2h1.2M520.1 395.2h1.2M520.6 390.8h1.2M520.9 392.7h1.2M521.5 394.8h1.2M521.8 390.9h1.2M522.2 390.6h1.2M522.9 393.0h1.2M523.1 394.5h1.2M523.7 386.7h1.2M524.1 390.4h1.2M524.5 391.3h1.2M525.2 390.7h1.2M525.3 387.1h1.2M526.1 392.3h1.2M526.5 394.3h1.2M527.0 390.7h1.2M527.2 392.8h1.2M527.7 393.1h1.2M528.0 393.1h1.2M528.8 390.3h1.2M529.1 391.6h1.2M529.7 389.3h1.2M529.9 392.1h1.2M530.6 390.8h1.2M531.0 394.7h1.2M531.2 388.0h1.2M531.9 387.7h1.2M532.3 392.5h1.2M532.8 388.3h1.2M533.0 386.5h1.2M533.6 392.5h1.2M534.1 389.9h1.2M534.4 393.2h1.2M535.1 396.2h1.2M535.5 392.6h1.2M536.0 391.6h1.2M536.5 394.1h1.2M536.7 395.6h1.2M537.4 388.6h1.2M537.6 392.4h1.2M538.0 388.4h1.2M538.5 394.7h1.2M538.9 393.9h1.2M539.5 392.0h1.2M540.0 390.9h1.2M540.2 394.1h1.2M540.8 392.5h1.2M541.2 393.6h1.2M541.7 397.0h1.2M542.1 394.1h1.2M542.6 395.0h1.2M543.0 396.6h1.2M543.6 391.7h1.2M543.8 387.8h1.2M544.5 391.1h1.2M545.0 391.3h1.2M545.2 391.6h1.2M545.7 389.4h1.2M546.2 390.2h1.2M546.6 390.6h1.2M547.1 390.1h1.2M547.5 389.8h1.2M548.1 390.8h1.2M548.3 387.6h1.2M548.9 391.6h1.2M549.2 389.5h1.2M549.6 391.3h1.2M550.2 390.4h1.2M550.7 390.0h1.2M551.0 394.2h1.2M551.6 387.9h1.2M552.0 389.2h1.2M552.6 392.0h1.2M552.9 388.0h1.2M553.5 394.3h1.2M554.0 391.4h1.2M554.3 390.7h1.2M554.8 390.5h1.2M555.4 388.5h1.2M555.8 393.8h1.2M556.1 393.0h1.2M556.7 390.3h1.2M556.8 388.3h1.2M557.5 388.0h1.2M557.8 390.7h1.2M558.2 393.0h1.2M558.9 396.2h1.2M559.2 392.6h1.2M559.8 389.5h1.2M560.0 392.9h1.2M560.7 391.6h1.2M567.0 393.5h1.2M567.5 393.5h1.2M568.1 395.2h1.2M568.3 391.9h1.2M568.8 395.1h1.2M569.2 396.4h1.2M569.8 391.7h1.2M570.2 391.1h1.2M570.5 386.5h1.2M571.0 389.2h1.2M571.4 390.8h1.2M572.1 390.8h1.2M572.4 393.5h1.2M573.0 390.6h1.2M573.4 389.0h1.2M573.9 394.2h1.2M574.2 398.8h1.2M574.5 395.3h1.2M574.9 396.4h1.2M575.4 394.9h1.2M575.8 401.6h1.2M576.6 400.1h1.2M576.9 401.2h1.2M577.3 398.4h1.2M577.6 401.6h1.2M595.9 391.1h1.2M596.5 389.6h1.2M596.9 389.9h1.2M597.5 393.0h1.2M597.6 393.5h1.2M598.1 391.3h1.2M598.8 390.3h1.2M599.0 389.2h1.2M599.5 388.6h1.2M600.0 389.0h1.2M600.5 388.3h1.2M600.9 387.1h1.2M601.3 390.1h1.2M602.0 387.2h1.2M602.3 387.6h1.2M602.7 388.4h1.2M603.0 389.5h1.2M603.7 388.1h1.2M603.9 389.4h1.2M604.7 387.5h1.2M604.9 388.9h1.2M605.5 389.4h1.2M606.0 388.2h1.2M606.4 390.0h1.2M606.6 390.0h1.2M607.4 390.5h1.2M607.5 390.1h1.2M608.2 391.1h1.2M608.5 387.1h1.2M608.9 388.8h1.2M609.3 388.8h1.2M609.9 389.2h1.2M610.4 391.4h1.2M610.7 387.7h1.2M611.4 388.2h1.2M611.6 388.0h1.2M612.4 387.7h1.2M612.8 387.5h1.2M613.0 388.3h1.2M613.7 388.5h1.2M614.1 387.9h1.2M614.4 389.3h1.2M614.9 388.4h1.2M615.2 390.3h1.2M615.6 387.4h1.2M616.3 390.3h1.2M616.7 388.5h1.2M617.0 389.5h1.2M617.4 388.4h1.2M618.0 387.0h1.2M618.4 384.7h1.2M618.8 385.2h1.2M619.2 384.5h1.2M619.7 383.4h1.2M620.4 384.7h1.2M620.8 387.8h1.2M621.3 386.1h1.2M621.5 385.9h1.2M622.2 385.4h1.2M622.4 389.6h1.2M623.1 386.5h1.2M623.5 385.3h1.2M623.9 390.1h1.2M624.3 388.8h1.2M624.6 387.3h1.2M625.4 387.7h1.2M625.9 386.6h1.2M626.2 385.0h1.2M626.7 386.5h1.2M627.2 388.6h1.2M627.3 387.4h1.2M627.8 385.7h1.2M628.4 387.5h1.2M628.9 388.7h1.2M629.4 390.0h1.2M629.9 388.1h1.2M630.3 386.6h1.2M630.8 386.9h1.2M630.9 387.2h1.2M631.5 386.3h1.2M632.1 385.4h1.2M632.3 386.8h1.2M633.0 387.3h1.2M633.2 388.9h1.2M633.8 389.2h1.2M634.4 385.8h1.2M634.7 389.1h1.2M635.2 389.4h1.2M635.6 389.9h1.2M635.9 385.0h1.2M636.6 387.8h1.2M636.8 388.6h1.2M637.5 388.3h1.2M637.8 389.8h1.2M638.4 385.5h1.2M638.7 384.1h1.2M639.1 386.8h1.2M639.7 387.5h1.2M639.9 383.9h1.2M640.5 387.2h1.2M640.8 383.3h1.2M641.3 386.8h1.2M641.7 386.7h1.2M642.5 387.0h1.2M642.8 388.5h1.2M643.4 385.7h1.2M643.7 385.6h1.2M644.2 386.0h1.2M644.5 384.0h1.2M645.0 389.5h1.2M645.7 384.0h1.2M646.0 383.4h1.2M646.6 382.9h1.2M647.0 379.4h1.2M647.3 379.1h1.2M647.6 378.3h1.2M648.1 381.8h1.2M648.8 380.2h1.2M648.9 380.3h1.2M649.6 382.3h1.2M649.8 376.9h1.2M650.6 379.7h1.2M651.1 376.9h1.2M651.2 383.8h1.2M651.6 385.0h1.2M652.3 383.6h1.2M652.6 378.9h1.2M653.0 381.6h1.2M653.5 385.1h1.2M654.0 382.0h1.2M654.3 383.3h1.2M655.0 387.2h1.2M655.4 382.3h1.2M655.7 379.0h1.2M656.2 378.6h1.2M656.8 376.9h1.2M657.4 376.9h1.2M657.8 382.1h1.2M657.9 379.4h1.2M658.4 378.7h1.2M659.1 378.2h1.2M659.5 378.7h1.2M659.9 377.2h1.2M660.3 379.2h1.2M660.8 376.9h1.2M661.2 382.7h1.2M661.8 379.8h1.2M662.0 378.8h1.2M662.5 384.0h1.2M663.1 381.6h1.2M663.7 384.9h1.2M664.1 381.5h1.2M664.6 380.8h1.2M665.0 380.6h1.2M665.4 381.1h1.2M665.7 381.2h1.2M666.2 381.8h1.2M666.8 381.1h1.2M667.3 383.0h1.2M667.6 377.2h1.2M668.1 382.4h1.2M668.3 382.5h1.2M668.8 381.4h1.2M669.4 379.8h1.2M669.7 384.8h1.2M670.1 381.3h1.2M670.6 378.5h1.2M671.3 382.0h1.2M671.8 376.5h1.2M671.9 377.2h1.2M672.5 382.5h1.2M672.8 379.7h1.2M673.2 379.1h1.2M673.8 379.5h1.2M674.3 379.5h1.2M674.6 382.1h1.2M675.3 383.3h1.2M675.5 380.0h1.2M676.2 382.2h1.2M676.4 386.2h1.2M677.0 379.6h1.2M677.3 379.0h1.2M678.1 377.0h1.2M678.5 380.8h1.2M678.8 381.3h1.2M679.4 381.6h1.2M679.6 384.3h1.2M680.1 382.0h1.2M680.8 378.9h1.2M681.1 383.5h1.2M681.3 383.0h1.2M681.9 379.7h1.2M682.4 381.5h1.2M683.0 383.8h1.2M683.3 380.9h1.2M683.7 385.5h1.2M684.1 384.4h1.2M684.5 382.2h1.2M685.3 378.2h1.2M685.4 379.4h1.2M686.1 378.0h1.2M686.6 378.7h1.2M686.9 380.4h1.2M687.2 377.6h1.2M687.8 377.7h1.2M688.2 380.6h1.2M688.8 381.3h1.2M689.0 382.5h1.2M689.5 380.2h1.2M690.1 378.2h1.2M690.5 378.2h1.2M690.9 377.1h1.2M691.6 380.6h1.2M692.0 380.1h1.2M692.4 379.0h1.2M692.6 378.7h1.2M693.1 377.9h1.2M693.6 378.9h1.2M694.1 376.5h1.2M694.4 373.2h1.2M695.2 374.8h1.2M695.3 373.8h1.2M695.8 374.7h1.2M712.1 385.4h1.2M712.3 385.9h1.2M712.7 383.7h1.2M713.3 387.3h1.2M713.8 386.2h1.2M714.4 386.8h1.2M714.6 384.9h1.2M715.0 386.2h1.2M715.7 387.3h1.2M716.0 387.0h1.2M716.5 385.3h1.2M716.8 385.2h1.2M717.6 385.3h1.2M717.7 385.3h1.2M718.2 384.2h1.2M718.9 381.9h1.2M719.1 378.9h1.2M719.7 378.8h1.2M720.2 375.9h1.2M720.5 375.7h1.2M721.1 377.4h1.2M721.6 379.1h1.2M722.1 377.3h1.2M722.3 377.9h1.2M722.7 377.9h1.2M723.3 377.4h1.2M723.6 378.9h1.2M724.1 378.7h1.2M724.6 374.6h1.2M725.2 376.4h1.2M725.5 376.3h1.2M725.8 377.8h1.2M726.3 376.9h1.2M726.8 376.1h1.2M727.4 375.1h1.2M727.7 376.1h1.2M728.3 375.2h1.2M728.5 375.9h1.2M729.1 375.9h1.2M729.5 375.5h1.2M730.0 375.2h1.2M730.4 379.3h1.2M730.9 378.7h1.2M731.4 376.3h1.2M732.0 376.9h1.2M732.3 380.3h1.2M732.7 378.7h1.2M733.3 379.8h1.2M733.5 376.5h1.2M734.0 377.2h1.2M734.5 377.3h1.2M734.9 376.1h1.2M735.6 377.0h1.2M735.8 376.6h1.2M736.2 376.0h1.2M736.7 376.5h1.2M737.2 376.7h1.2M737.7 377.1h1.2M738.2 379.7h1.2M738.6 378.2h1.2M739.2 381.6h1.2M739.6 377.0h1.2M740.0 378.5h1.2M740.3 376.4h1.2M740.7 378.9h1.2M741.1 377.7h1.2M741.5 378.9h1.2M742.1 379.8h1.2M742.8 378.3h1.2M743.1 381.6h1.2M743.5 379.2h1.2M744.1 379.7h1.2M744.3 383.0h1.2M744.7 380.3h1.2M745.3 380.3h1.2M745.6 379.0h1.2M746.3 380.9h1.2M746.7 381.7h1.2M747.0 382.7h1.2M747.7 381.5h1.2M747.9 381.7h1.2M748.3 384.3h1.2M749.0 379.2h1.2M749.5 380.4h1.2M750.0 383.6h1.2M750.2 383.6h1.2M750.9 384.9h1.2M751.1 383.4h1.2M751.5 384.2h1.2M752.1 382.3h1.2M752.6 383.7h1.2M752.8 383.6h1.2M753.4 382.2h1.2M753.7 382.1h1.2M754.2 384.1h1.2M754.9 382.4h1.2M755.3 383.2h1.2M755.8 383.7h1.2M756.0 381.0h1.2M756.7 383.3h1.2M756.8 383.8h1.2M757.4 380.5h1.2M757.8 381.4h1.2M758.4 379.6h1.2M758.6 381.0h1.2M759.4 380.7h1.2M759.7 378.5h1.2M760.3 379.7h1.2M760.4 381.1h1.2M761.1 381.8h1.2M761.5 381.9h1.2M761.8 384.6h1.2M762.4 386.7h1.2M762.9 384.1h1.2M763.4 381.6h1.2M763.7 383.7h1.2M764.1 384.2h1.2M764.5 382.6h1.2M765.2 383.3h1.2M765.7 383.5h1.2M766.1 382.9h1.2M766.6 381.7h1.2M766.9 381.9h1.2M767.3 381.7h1.2M767.9 383.6h1.2M768.1 381.8h1.2M768.9 384.6h1.2M769.1 382.1h1.2M769.7 380.9h1.2M770.2 383.5h1.2M770.6 382.5h1.2M771.0 383.2h1.2M771.5 384.4h1.2M771.9 385.0h1.2M772.5 386.2h1.2M772.7 383.7h1.2M773.3 387.0h1.2M773.6 388.7h1.2M774.3 388.8h1.2M774.6 387.6h1.2M774.8 387.8h1.2M775.3 388.3h1.2M776.0 387.2h1.2M776.2 385.0h1.2M776.8 386.2h1.2M777.1 387.1h1.2M777.7 386.9h1.2M778.1 388.0h1.2M778.6 387.4h1.2M779.2 387.3h1.2M779.5 387.7h1.2M779.8 387.1h1.2M780.2 387.1h1.2M780.7 386.5h1.2M781.3 386.3h1.2M781.8 386.8h1.2M782.2 386.4h1.2M782.6 384.6h1.2M783.0 385.5h1.2M783.7 385.3h1.2M783.8 388.0h1.2M784.4 387.2h1.2M785.1 386.6h1.2M785.3 385.6h1.2M785.7 387.7h1.2M786.2 385.2h1.2M786.6 386.9h1.2M787.3 388.0h1.2M787.7 387.8h1.2M787.9 387.6h1.2M788.4 385.8h1.2M788.9 385.4h1.2M789.5 387.5h1.2M789.8 386.3h1.2M790.5 387.3h1.2M790.7 385.5h1.2M791.0 387.9h1.2M791.7 388.3h1.2M792.3 387.4h1.2M792.5 385.1h1.2M793.0 386.5h1.2M793.3 385.9h1.2M793.9 384.7h1.2M794.4 387.0h1.2M794.6 385.5h1.2M795.2 384.7h1.2M795.8 385.6h1.2M796.3 385.6h1.2M796.5 385.7h1.2M797.2 386.3h1.2M797.5 386.2h1.2M798.0 383.9h1.2M798.5 385.9h1.2M798.7 384.2h1.2M799.1 384.3h1.2M799.9 386.3h1.2M800.3 386.5h1.2M800.8 386.9h1.2M801.2 386.3h1.2M801.6 386.7h1.2M802.0 384.9h1.2M802.3 385.6h1.2M802.8 386.2h1.2M803.2 385.8h1.2M803.9 385.5h1.2M804.2 384.8h1.2M804.6 385.3h1.2M805.1 383.7h1.2M805.6 385.0h1.2M806.2 383.7h1.2M806.3 386.6h1.2M806.8 387.5h1.2M807.5 383.7h1.2M808.0 386.2h1.2M808.5 387.8h1.2M808.8 387.4h1.2M809.2 386.0h1.2M809.6 386.4h1.2M810.2 386.4h1.2M810.6 388.2h1.2M811.2 387.9h1.2M811.6 386.6h1.2M811.9 389.4h1.2M813.1 381.2h1.2M813.5 377.3h1.2M813.8 378.9h1.2M814.2 376.1h1.2M814.9 377.6h1.2M815.1 381.6h1.2M815.6 378.3h1.2M816.3 380.1h1.2M816.6 380.4h1.2M816.9 380.8h1.2M817.3 376.0h1.2M817.8 375.5h1.2M818.5 379.6h1.2M818.9 378.9h1.2M819.2 379.9h1.2M819.6 380.0h1.2M820.4 382.8h1.2M820.7 380.5h1.2M821.2 382.1h1.2M821.4 383.5h1.2M822.1 384.7h1.2M822.4 381.8h1.2M822.7 383.7h1.2M823.3 381.3h1.2M823.8 380.0h1.2M824.4 379.0h1.2M824.9 381.2h1.2M825.3 385.1h1.2M825.6 381.4h1.2M825.9 383.0h1.2M826.5 384.6h1.2M826.9 385.3h1.2M827.4 381.4h1.2M827.8 386.2h1.2M828.2 384.6h1.2M828.9 385.2h1.2M829.1 386.7h1.2M829.5 384.3h1.2M830.2 385.9h1.2M830.5 385.3h1.2M831.0 382.8h1.2M831.5 385.0h1.2M832.0 382.0h1.2M832.4 385.1h1.2M832.9 386.5h1.2M833.2 384.5h1.2M833.5 384.0h1.2M834.3 383.7h1.2M834.7 384.8h1.2M835.0 383.9h1.2M835.4 385.7h1.2M836.0 384.6h1.2M836.3 385.5h1.2M837.0 386.1h1.2M837.2 384.5h1.2M837.9 385.2h1.2M838.1 385.0h1.2M838.6 386.3h1.2M839.0 385.4h1.2M839.6 386.9h1.2M839.9 388.5h1.2M840.3 388.2h1.2M841.0 387.8h1.2M841.4 386.4h1.2M841.9 388.0h1.2M842.1 385.7h1.2M842.5 385.5h1.2M843.2 386.6h1.2M843.5 386.8h1.2M843.9 387.3h1.2M844.6 385.6h1.2M845.0 384.8h1.2M845.4 385.2h1.2M845.8 382.9h1.2M846.1 382.5h1.2M846.6 382.6h1.2M847.3 385.4h1.2M847.8 384.6h1.2M848.1 384.5h1.2M848.6 381.4h1.2M849.1 381.7h1.2M849.4 382.1h1.2M849.9 385.8h1.2M850.5 382.2h1.2M850.6 381.8h1.2M851.2 382.7h1.2M851.7 382.5h1.2M852.2 381.0h1.2M852.5 383.8h1.2M853.1 383.3h1.2M853.3 384.9h1.2M853.9 385.1h1.2M854.4 386.0h1.2M854.8 386.6h1.2M855.3 385.1h1.2M855.6 384.4h1.2M856.1 385.1h1.2M856.8 381.1h1.2M856.9 382.2h1.2M857.5 382.9h1.2M858.0 383.3h1.2M858.5 383.6h1.2M859.1 384.7h1.2M859.2 382.0h1.2M860.0 381.7h1.2M860.4 383.7h1.2M860.8 384.6h1.2M861.3 383.8h1.2M861.4 383.7h1.2M862.0 381.7h1.2M862.6 382.4h1.2M862.9 384.7h1.2M863.3 384.7h1.2M863.8 384.7h1.2M864.5 384.7h1.2M864.9 384.7h1.2M865.0 380.8h1.2M865.7 382.2h1.2M866.0 382.8h1.2M866.4 383.8h1.2M867.1 382.6h1.2M867.6 379.3h1.2M867.9 381.8h1.2M868.3 379.7h1.2M868.8 380.6h1.2M869.1 381.7h1.2M869.5 381.1h1.2M870.3 381.8h1.2M870.6 379.3h1.2M871.0 379.3h1.2M871.6 379.3h1.2M872.1 379.4h1.2M872.3 380.4h1.2M873.0 381.1h1.2M873.5 381.3h1.2M873.9 383.3h1.2M874.1 383.7h1.2M874.7 381.3h1.2M875.2 381.1h1.2M875.6 380.9h1.2M876.2 380.7h1.2M876.5 382.5h1.2M877.0 380.4h1.2M877.3 381.1h1.2M877.8 380.1h1.2M878.3 380.3h1.2M878.6 381.4h1.2M879.0 380.7h1.2M879.5 381.5h1.2M880.0 381.4h1.2M880.5 382.0h1.2M880.9 380.3h1.2M881.5 379.3h1.2M881.9 380.8h1.2M882.1 382.8h1.2M882.7 383.0h1.2M883.2 381.0h1.2M883.5 381.4h1.2M884.2 383.2h1.2M884.5 383.5h1.2M885.0 382.3h1.2M885.4 382.6h1.2M885.8 382.3h1.2M886.4 388.3h1.2M886.8 386.6h1.2M887.1 388.5h1.2M887.6 386.4h1.2M888.1 387.7h1.2M888.5 387.5h1.2M889.0 389.8h1.2M889.4 387.4h1.2M889.9 387.1h1.2M890.5 390.5h1.2M890.9 389.5h1.2M891.4 389.8h1.2M891.6 386.8h1.2M892.2 384.8h1.2M892.6 389.8h1.2M893.1 389.3h1.2M893.6 390.0h1.2M893.9 387.3h1.2M894.4 388.7h1.2M895.0 387.4h1.2M895.4 387.6h1.2M895.7 385.7h1.2M896.3 387.5h1.2M896.8 384.5h1.2M897.3 386.6h1.2M897.5 385.0h1.2M898.0 386.1h1.2M898.7 385.1h1.2M898.9 386.4h1.2M899.4 387.1h1.2M899.8 387.1h1.2M900.2 387.0h1.2M900.9 385.7h1.2M901.3 385.3h1.2M901.6 385.6h1.2M902.0 384.5h1.2M902.6 385.1h1.2M903.1 386.0h1.2M903.5 387.2h1.2M903.9 386.2h1.2M904.5 385.3h1.2M904.9 383.4h1.2M905.2 385.8h1.2M905.6 383.5h1.2M906.1 387.2h1.2M906.7 385.1h1.2M907.1 386.3h1.2M907.7 384.9h1.2M907.9 383.9h1.2M908.5 386.3h1.2M908.8 384.0h1.2M909.1 384.4h1.2M909.6 385.2h1.2M910.1 387.3h1.2M910.5 386.4h1.2M911.1 387.1h1.2M911.5 386.1h1.2M912.1 385.2h1.2M912.4 385.2h1.2M912.9 384.5h1.2M913.5 385.9h1.2M913.9 386.8h1.2M914.1 387.4h1.2M914.6 386.5h1.2M915.0 384.9h1.2M915.6 382.8h1.2M916.0 385.6h1.2M916.6 383.5h1.2M917.0 383.6h1.2M917.3 384.1h1.2M917.7 384.0h1.2M918.4 384.2h1.2M918.9 382.8h1.2M919.3 382.7h1.2M919.6 387.2h1.2M920.0 385.6h1.2M920.7 386.5h1.2M921.1 384.3h1.2M921.4 383.4h1.2M921.9 382.8h1.2M922.3 384.9h1.2M923.0 383.9h1.2M923.1 384.3h1.2M923.7 383.9h1.2M924.0 385.1h1.2M924.6 384.9h1.2M925.1 383.4h1.2M925.3 384.6h1.2M926.1 385.6h1.2M926.5 382.9h1.2M926.9 384.0h1.2M927.3 384.9h1.2M927.8 384.2h1.2M928.2 384.9h1.2M928.6 385.3h1.2M929.1 387.3h1.2M929.7 386.8h1.2M929.9 386.2h1.2M930.6 389.4h1.2M931.0 390.5h1.2M931.4 389.6h1.2M931.7 388.4h1.2M932.3 387.3h1.2M932.5 388.3h1.2M933.1 389.1h1.2M933.5 390.9h1.2M934.1 389.8h1.2M934.5 388.0h1.2M935.0 388.5h1.2M935.2 389.5h1.2M936.0 393.2h1.2M936.3 393.2h1.2M936.6 391.2h1.2M937.1 392.8h1.2M937.6 391.3h1.2M938.3 390.6h1.2M938.5 390.9h1.2M939.0 388.6h1.2M939.3 390.2h1.2M939.8 388.9h1.2M940.4 385.5h1.2M940.9 392.6h1.2M941.2 390.8h1.2M941.6 388.4h1.2M942.1 387.8h1.2M942.5 391.5h1.2M943.1 388.3h1.2M943.6 389.3h1.2M944.0 387.7h1.2M944.3 391.2h1.2M945.0 391.1h1.2M945.1 389.1h1.2M945.6 389.5h1.2M946.3 387.3h1.2M946.8 392.9h1.2M947.0 391.5h1.2M947.6 385.9h1.2M948.0 385.5h1.2M948.4 388.8h1.2M948.9 387.8h1.2M949.3 391.2h1.2M950.0 389.1h1.2M950.3 389.8h1.2M950.8 387.3h1.2M951.0 387.0h1.2M951.7 388.1h1.2M952.2 386.2h1.2M952.3 388.7h1.2M953.0 389.4h1.2M953.5 391.2h1.2M954.0 387.7h1.2M954.4 388.3h1.2M954.8 389.6h1.2M955.0 389.6h1.2M955.6 392.9h1.2M955.9 393.8h1.2M956.5 388.9h1.2M956.9 388.3h1.2M957.6 391.0h1.2M957.7 389.2h1.2M958.5 392.6h1.2M959.0 386.2h1.2M959.3 387.9h1.2M959.7 387.8h1.2M960.2 387.2h1.2M960.6 387.0h1.2M960.9 389.9h1.2M961.6 390.5h1.2M962.0 387.9h1.2M962.6 391.3h1.2M962.8 387.7h1.2M963.4 390.1h1.2M963.9 388.7h1.2M964.3 392.3h1.2M964.6 387.8h1.2M965.2 388.8h1.2M965.6 385.9h1.2M966.2 388.7h1.2M966.4 390.7h1.2M967.0 389.5h1.2M967.3 390.2h1.2M967.9 387.2h1.2M968.4 390.6h1.2M968.7 393.8h1.2M969.0 396.2h1.2M969.6 394.2h1.2M970.1 394.7h1.2M970.3 397.3h1.2M970.9 399.5h1.2M971.5 394.4h1.2M971.9 396.2h1.2M972.3 397.3h1.2M972.6 399.1h1.2M973.1 396.5h1.2M973.5 399.0h1.2M974.1 397.5h1.2M974.6 398.9h1.2M974.8 399.2h1.2M975.5 399.5h1.2M975.8 398.5h1.2M976.2 398.9h1.2M976.9 396.0h1.2M977.3 395.7h1.2M977.5 395.6h1.2M978.3 395.3h1.2M978.6 397.4h1.2M978.9 396.5h1.2M979.4 392.4h1.2M979.8 395.2h1.2M980.3 391.2h1.2M980.8 393.1h1.2M981.4 389.8h1.2M981.7 390.4h1.2M982.0 392.9h1.2M982.8 393.6h1.2M983.2 388.3h1.2M983.7 387.4h1.2M984.0 388.8h1.2M984.6 386.8h1.2M985.0 387.7h1.2M985.3 388.2h1.2M985.7 387.4h1.2M986.2 386.5h1.2M986.6 386.9h1.2M988.2 396.8h1.2M988.5 396.9h1.2M988.9 395.7h1.2M989.5 396.9h1.2M990.0 396.7h1.2M990.4 396.3h1.2M990.6 396.0h1.2M991.3 396.1h1.2M991.8 396.2h1.2M992.2 396.4h1.2M992.6 396.1h1.2M992.8 396.5h1.2M993.3 396.0h1.2M994.0 395.4h1.2M994.2 397.1h1.2M994.8 396.8h1.2M995.3 379.2h1.2M995.8 383.3h1.2M996.3 380.9h1.2M996.7 383.7h1.2M997.1 380.0h1.2M997.6 378.0h1.2M998.0 382.4h1.2M998.7 380.7h1.2M1000.0 392.0h1.2M1000.5 392.0h1.2M1000.8 390.6h1.2M1001.2 390.6h1.2M1001.7 391.1h1.2M1002.2 391.2h1.2M1002.5 391.3h1.2M1003.3 392.0h1.2M1003.7 391.3h1.2M1003.9 392.7h1.2M1004.6 391.6h1.2M1005.0 391.6h1.2M1005.4 391.1h1.2M1005.7 391.6h1.2M1006.5 391.9h1.2M1006.7 392.2h1.2M1008.0 386.2h1.2M1008.3 381.0h1.2M1008.9 387.1h1.2M1009.2 382.7h1.2M1009.6 385.8h1.2M1010.3 386.0h1.2M1010.6 383.7h1.2M1011.3 385.7h1.2M1011.6 387.3h1.2M1012.2 386.9h1.2M1012.4 388.8h1.2M1013.1 386.1h1.2M1013.5 385.4h1.2M1013.8 386.1h1.2M1014.4 385.3h1.2M1014.9 385.4h1.2M1015.1 386.4h1.2M1015.5 384.8h1.2M1016.1 385.9h1.2M1016.4 383.4h1.2M1017.0 385.5h1.2M1017.5 387.6h1.2M1017.9 387.6h1.2M1018.4 384.4h1.2M1018.9 389.1h1.2M1019.2 387.4h1.2M1019.9 388.8h1.2M1020.0 387.8h1.2M1020.5 387.6h1.2M1021.1 386.9h1.2M1021.7 390.4h1.2M1022.0 390.1h1.2M1022.4 389.0h1.2M1022.7 389.9h1.2M1023.3 390.2h1.2M1023.7 390.3h1.2M1024.1 390.9h1.2M1024.8 390.0h1.2M1025.3 388.6h1.2M1025.6 388.7h1.2M1025.9 387.2h1.2M1026.6 389.6h1.2M1026.8 389.6h1.2M1027.2 389.4h1.2M1027.8 387.7h1.2M1028.2 388.9h1.2M1028.9 386.9h1.2M1029.3 386.6h1.2M1029.6 385.6h1.2M1029.9 386.2h1.2M1030.6 385.3h1.2M1031.1 387.4h1.2M1031.5 386.1h1.2M1031.9 387.1h1.2M1032.1 386.1h1.2M1032.9 387.1h1.2M1033.0 386.1h1.2M1033.5 388.0h1.2M1034.0 386.7h1.2M1034.7 389.3h1.2M1034.8 384.6h1.2M1035.6 386.0h1.2M1035.7 384.2h1.2M1036.4 385.4h1.2M1036.8 384.3h1.2M1037.4 387.1h1.2M1037.5 389.0h1.2M1038.1 388.0h1.2M1038.7 386.5h1.2M1039.2 385.7h1.2M1039.4 383.9h1.2M1039.8 384.3h1.2M1040.2 385.0h1.2M1040.9 384.9h1.2M1041.2 383.9h1.2M1041.9 385.8h1.2M1042.1 385.7h1.2M1042.7 385.8h1.2M1043.3 384.7h1.2M1043.5 385.7h1.2M1044.1 387.0h1.2M1044.3 385.9h1.2M1045.0 389.2h1.2M1045.3 386.9h1.2M1045.8 389.3h1.2M1046.4 390.7h1.2M1046.6 391.3h1.2M1047.0 387.3h1.2M1047.6 389.0h1.2M1047.9 388.3h1.2M1048.5 387.5h1.2M1049.0 386.8h1.2M1049.5 388.8h1.2M1049.8 387.3h1.2M1050.4 388.9h1.2M1050.6 387.6h1.2M1051.1 387.7h1.2M1051.7 385.4h1.2M199.0 391.0h1.2M212.0 395.0h1.2M219.0 390.0h1.2M264.0 379.0h1.2M355.0 391.6h1.2M206.0 373.0h1.2M175.0 374.0h1.2M313.6 388.0h1.2M315.0 393.0h1.2M319.0 388.4h1.2M316.0 394.4h1.2M313.0 397.6h1.2M311.0 399.0h1.2M318.0 398.0h1.2M320.0 398.6h1.2M305.6 403.0h1.2M307.0 403.6h1.2M308.6 404.0h1.2M250.0 396.4h1.2M257.0 397.6h1.2M263.0 397.4h1.2M243.0 396.0h1.2M273.0 393.6h1.2M406.4 379.0h1.2M396.0 386.0h1.2M426.0 399.0h1.2M435.0 402.0h1.2M408.0 390.0h1.2M372.0 389.4h1.2M613.0 393.0h1.2M764.0 392.0h1.2M774.0 392.0h1.2M837.0 393.0h1.2M700.0 385.0h1.2M706.0 382.0h1.2M703.0 388.0h1.2M711.0 384.0h1.2M677.0 388.4h1.2M672.0 388.0h1.2M688.0 386.4h1.2M693.0 387.2h1.2M927.0 392.4h1.2M994.0 397.0h1.2M962.0 382.0h1.2" stroke="#00a800" stroke-width="1.2" fill="none"/>
<path d="M134.0 632.7L134.0 632.7L134.0 591.7L136.6 591.7L136.6 585.7L144.5 585.7L144.5 579.9L146.7 579.9L146.7 574.1L151.3 574.1L151.3 632.7M151.6 632.7L152.1 632.7L152.1 609.3L153.2 609.3L153.2 597.5L156.1 597.5L156.1 585.7L168.8 585.7L168.8 632.7M169.1 632.7L169.5 632.7L169.5 609.3L170.5 609.3L170.5 597.5L172.7 597.5L172.7 591.7L173.9 591.7L173.9 585.7L186.4 585.7L186.4 632.7M186.7 632.7L186.7 632.7L186.7 632.7L189.2 632.7L189.2 626.9L190.2 626.9L190.2 620.9L191.5 620.9L191.5 615.1L194.3 615.1L194.3 609.3L204.0 609.3L204.0 632.7M204.3 632.7L204.6 632.7L204.6 615.1L207.4 615.1L207.4 609.3L209.0 609.3L209.0 603.3L218.3 603.3L218.3 597.5L219.7 597.5L219.7 591.7L221.6 591.7L221.6 632.7M221.9 632.7L222.4 632.7L222.4 603.3L236.4 603.3L236.4 597.5L239.1 597.5L239.1 632.7M239.4 632.7L239.8 632.7L239.8 597.5L252.4 597.5L252.4 591.7L253.8 591.7L253.8 579.9L256.1 579.9L256.1 605.1L256.7 605.1L256.7 632.7M257.0 632.7L257.4 632.7L257.4 605.1L258.4 605.1L258.4 591.7L260.3 591.7L260.3 585.7L274.3 585.7L274.3 632.7M274.6 632.7L274.6 632.7L274.6 632.7L277.6 632.7L277.6 620.9L278.4 620.9L278.4 574.1L283.0 574.1L283.0 568.1L291.8 568.1L291.8 632.7M292.1 632.7L292.5 632.7L292.5 626.9L293.4 626.9L293.4 604.6L294.4 604.6L294.4 597.5L299.5 597.5L299.5 585.7L301.1 585.7L301.1 579.9L302.5 579.9L302.5 574.1L307.1 574.1L307.1 568.1L309.4 568.1L309.4 632.7M309.7 632.7L310.1 632.7L310.1 591.7L316.4 591.7L316.4 585.7L321.5 585.7L321.5 579.9L323.1 579.9L323.1 574.1L327.0 574.1L327.0 632.7M327.3 632.7L327.5 632.7L327.5 585.7L329.4 585.7L329.4 579.9L331.5 579.9L331.5 574.1L344.6 574.1L344.6 632.7M344.9 632.7L344.9 632.7L344.9 632.7L347.8 632.7L347.8 626.9L352.9 626.9L352.9 615.1L358.9 615.1L358.9 609.3L362.1 609.3L362.1 632.7M362.4 632.7L362.4 632.7L362.4 632.7L364.2 632.7L364.2 620.9L365.8 620.9L365.8 615.1L368.6 615.1L368.6 603.3L369.8 603.3L369.8 597.5L379.7 597.5L379.7 632.7M380.0 632.7L380.0 632.7L380.0 632.7L381.4 632.7L381.4 620.9L392.3 620.9L392.3 615.1L394.1 615.1L394.1 609.3L397.3 609.3L397.3 632.7M397.6 632.7L397.6 632.7L397.6 632.7L399.7 632.7L399.7 597.5L400.6 597.5L400.6 591.7L401.6 591.7L401.6 585.7L414.8 585.7L414.8 632.7M415.1 632.7L415.1 632.7L415.1 632.7L422.2 632.7L422.2 597.5L423.1 597.5L423.1 585.7L432.4 585.7L432.4 632.7M432.7 632.7L432.7 632.7L432.7 632.7L439.7 632.7L439.7 620.9L448.5 620.9L448.5 615.1L450.0 615.1L450.0 632.7M450.3 632.7L450.3 632.7L450.3 632.7L452.9 632.7L452.9 626.9L456.4 626.9L456.4 620.9L457.8 620.9L457.8 615.1L464.5 615.1L464.5 609.3L466.1 609.3L466.1 603.3L467.6 603.3L467.6 632.7M467.9 632.7L468.2 632.7L468.2 626.9L469.6 626.9L469.6 620.9L474.4 620.9L474.4 615.1L477.0 615.1L477.0 603.3L485.1 603.3L485.1 632.7M485.4 632.7L485.4 632.7L485.4 632.7L488.4 632.7L488.4 626.9L493.3 626.9L493.3 620.9L495.4 620.9L495.4 615.1L499.5 615.1L499.5 609.3L502.7 609.3L502.7 632.7M503.0 632.7L503.0 632.7L503.0 632.7L507.6 632.7L507.6 626.9L512.7 626.9L512.7 620.9L515.1 620.9L515.1 615.1L520.3 615.1L520.3 632.7M520.6 632.7L520.6 632.7L520.6 632.7L523.6 632.7L523.6 620.9L525.5 620.9L525.5 609.3L529.5 609.3L529.5 603.3L536.2 603.3L536.2 597.5L537.8 597.5L537.8 632.7M538.1 632.7L538.5 632.7L538.5 626.9L541.0 626.9L541.0 620.9L541.7 620.9L541.7 615.1L543.6 615.1L543.6 609.3L545.5 609.3L545.5 603.3L555.4 603.3L555.4 632.7M555.7 632.7L556.2 632.7L556.2 615.1L566.3 615.1L566.3 609.3L566.6 609.3L566.6 597.5L572.4 597.5L572.4 591.7L573.0 591.7L573.0 632.7M573.3 632.7L573.6 632.7L573.6 626.9L575.0 626.9L575.0 620.9L575.7 620.9L575.7 615.1L577.5 615.1L577.5 609.3L590.6 609.3M590.9 609.3L596.5 632.7L596.7 620.9L597.9 620.9L597.9 615.1L598.8 615.1L598.8 603.3L600.5 603.3L600.5 597.5L608.4 597.5M608.4 597.5L611.1 632.7L611.4 615.1L612.5 615.1L612.5 609.3L613.7 609.3L613.7 603.3L622.5 603.3L622.5 597.5L625.6 597.5L625.6 632.7M626.0 632.7L626.0 632.7L626.0 632.7L628.1 632.7L628.1 620.9L636.9 620.9L636.9 615.1L639.2 615.1L639.2 603.3L641.8 603.3L641.8 597.5L643.3 597.5L643.3 632.7M643.6 632.7L644.1 632.7L644.1 609.3L645.3 609.3L645.3 597.5L649.7 597.5L649.7 585.7L654.1 585.7L654.1 579.9L657.6 579.9L657.6 574.1L660.8 574.1L660.8 632.7M661.1 632.7L661.5 632.7L661.5 615.1L662.9 615.1L662.9 591.7L666.4 591.7L666.4 579.9L669.9 579.9L669.9 574.1L677.0 574.1L677.0 568.1L678.4 568.1L678.4 632.7M678.7 632.7L679.1 632.7L679.1 585.7L681.4 585.7L681.4 574.1L688.4 574.1L688.4 568.1L689.8 568.1L689.8 562.3L696.0 562.3L696.0 632.7M696.3 632.7L696.8 632.7L696.8 579.9L709.5 579.9L709.5 568.1L713.6 568.1L713.6 632.7M713.9 632.7L714.2 632.7L714.2 615.1L714.7 615.1L714.7 591.7L716.0 591.7L716.0 579.9L721.8 579.9L721.8 574.1L725.3 574.1L725.3 568.1L731.1 568.1L731.1 632.7M731.4 632.7L732.3 632.7L732.3 609.3L735.3 609.3L735.3 603.3L738.5 603.3L738.5 597.5L742.3 597.5L742.3 591.7L748.7 591.7L748.7 632.7M749.0 632.7L749.4 632.7L749.4 620.9L750.8 620.9L750.8 591.7L753.4 591.7L753.4 579.9L766.3 579.9L766.3 632.7M766.6 632.7L767.1 632.7L767.1 626.9L768.0 626.9L768.0 609.3L769.7 609.3L769.7 591.7L771.5 591.7L771.5 585.7L779.6 585.7L779.6 579.9L783.8 579.9L783.8 632.7M784.1 632.7L784.1 632.7L784.1 632.7L786.8 632.7L786.8 620.9L788.0 620.9L788.0 609.3L789.4 609.3L789.4 597.5L791.2 597.5L791.2 591.7L794.7 591.7L794.7 585.7L798.6 585.7L798.6 579.9L801.4 579.9L801.4 632.7M801.7 632.7L802.1 632.7L802.1 603.3L803.5 603.3L803.5 591.7L805.2 591.7L805.2 585.7L811.4 585.7L811.4 579.9L814.9 579.9L814.9 574.1L819.0 574.1L819.0 632.7M819.3 632.7L819.8 632.7L819.8 609.3L822.4 609.3L822.4 585.7L827.5 585.7L827.5 579.9L834.6 579.9L834.6 574.1L836.6 574.1L836.6 632.7M836.9 632.7L837.4 632.7L837.4 615.1L839.5 615.1L839.5 603.3L842.5 603.3L842.5 597.5L846.5 597.5L846.5 591.7L847.8 591.7L847.8 585.7L852.7 585.7L852.7 579.9L854.1 579.9L854.1 632.7M854.4 632.7L855.0 632.7L855.0 620.9L856.2 620.9L856.2 597.5L859.3 597.5L859.3 591.7L864.4 591.7L864.4 585.7L871.7 585.7L871.7 632.7M872.0 632.7L872.5 632.7L872.5 609.3L875.5 609.3L875.5 603.3L878.5 603.3L878.5 597.5L886.6 597.5L886.6 591.7L889.3 591.7L889.3 632.7M889.6 632.7L890.1 632.7L890.1 609.3L892.2 609.3L892.2 603.3L898.4 603.3L898.4 597.5L904.5 597.5L904.5 591.7L906.8 591.7L906.8 632.7M907.1 632.7L907.1 632.7L907.1 632.7L909.6 632.7L909.6 626.9L911.5 626.9L911.5 620.9L918.0 620.9L918.0 591.7L920.8 591.7L920.8 585.7L924.4 585.7L924.4 632.7M924.7 632.7L925.2 632.7L925.2 626.9L926.8 626.9L926.8 620.9L927.5 620.9L927.5 609.3L931.7 609.3L931.7 603.3L933.5 603.3L933.5 597.5L935.3 597.5L935.3 591.7L937.9 591.7L937.9 585.7L942.0 585.7L942.0 632.7M942.3 632.7L942.6 632.7L942.6 626.9L944.0 626.9L944.0 615.1L945.8 615.1L945.8 579.9L952.8 579.9L952.8 574.1L959.6 574.1L959.6 632.7M959.9 632.7L960.4 632.7L960.4 620.9L961.6 620.9L961.6 585.7L963.4 585.7L963.4 574.1L969.9 574.1L969.9 568.1L973.9 568.1L973.9 562.3L977.1 562.3L977.1 632.7M977.4 632.7L978.0 632.7L978.0 585.7L979.5 585.7L979.5 579.9L981.3 579.9L981.3 574.1L994.7 574.1L994.7 632.7M995.0 632.7L995.5 632.7L995.5 626.9L997.1 626.9L997.1 609.3L998.5 609.3L998.5 591.7L1002.9 591.7L1002.9 585.7L1012.3 585.7L1012.3 632.7M1012.6 632.7L1012.6 632.7L1012.6 632.7L1015.2 632.7L1015.2 609.3L1020.0 609.3L1020.0 597.5L1022.2 597.5L1022.2 591.7L1025.8 591.7L1025.8 585.7L1027.5 585.7L1027.5 579.9L1028.9 579.9L1028.9 568.1L1029.8 568.1L1029.8 632.7M1030.1 632.7L1030.5 632.7L1030.5 603.3L1031.9 603.3L1031.9 585.7L1035.9 585.7L1035.9 579.9L1039.8 579.9L1039.8 574.1L1047.4 574.1L1047.4 632.7M1047.7 632.7L1048.2 603.3L1049.1 603.3L1049.1 585.7L1050.0 585.7L1050.0 579.9L1051.4 579.9" stroke="#8cbc3c" stroke-width="1.15" fill="none" stroke-linejoin="miter"/>
<path d="M134.0 562.3L151.6 562.3L151.6 579.9L169.1 579.9L169.1 585.7L186.7 585.7L186.7 609.3L204.3 609.3L204.3 597.5L221.9 597.5L221.9 615.1L239.4 615.1L239.4 591.7L257.0 591.7L257.0 591.7L274.6 591.7L274.6 585.7L292.1 585.7L292.1 597.5L309.7 597.5L309.7 597.5L327.3 597.5L327.3 620.9L344.9 620.9L344.9 626.9L362.4 626.9L362.4 626.9L380.0 626.9L380.0 620.9L397.6 620.9L397.6 620.9L415.1 620.9L415.1 620.9L432.7 620.9L432.7 626.9L450.3 626.9L450.3 615.1L467.9 615.1L467.9 620.9L485.4 620.9L485.4 626.9L503.0 626.9L503.0 626.9L520.6 626.9L520.6 609.3L538.1 609.3L538.1 620.9L555.7 620.9L555.7 620.9L573.3 620.9L573.3 597.5L590.9 597.5L590.9 609.3L608.4 609.3L608.4 615.1L626.0 615.1L626.0 626.9L643.6 626.9L643.6 591.7L661.1 591.7L661.1 591.7L678.7 591.7L678.7 574.1L696.3 574.1L696.3 579.9L713.9 579.9L713.9 585.7L731.4 585.7L731.4 620.9L749.0 620.9L749.0 603.3L766.6 603.3L766.6 609.3L784.1 609.3L784.1 597.5L801.7 597.5L801.7 591.7L819.3 591.7L819.3 597.5L836.9 597.5L836.9 585.7L854.4 585.7L854.4 615.1L872.0 615.1L872.0 615.1L889.6 615.1L889.6 620.9L907.1 620.9L907.1 615.1L924.7 615.1L924.7 615.1L942.3 615.1L942.3 603.3L959.9 603.3L959.9 585.7L977.4 585.7L977.4 579.9L995.0 579.9L995.0 603.3L1012.6 603.3L1012.6 603.3L1030.1 603.3" stroke="#00dcdc" stroke-width="1.25" fill="none"/>
<path d="M134.4 758.4L139.0 758.4L139.0 762.4L145.0 762.4L145.0 764.4L151.6 764.4L151.6 758.4L156.6 758.4L156.6 748.6L163.0 748.6L163.0 744.4L168.4 744.4L168.4 754.4L175.0 754.4L175.0 756.4L180.0 756.4L180.0 753.0L186.6 753.0L186.6 751.0L192.0 751.0L192.0 750.0L198.4 750.0L198.4 742.4L204.0 742.4L204.0 740.4L210.0 740.4L210.0 738.4L215.6 738.4L215.6 736.6L221.6 736.6L221.6 738.4L227.4 738.4L227.4 743.0L233.4 743.0L233.4 746.4L239.4 746.4L239.4 738.4L245.4 738.4L245.4 730.4L251.0 730.4L251.0 728.6L257.4 728.6L257.4 724.0L262.4 724.0L262.4 711.4L268.4 711.4L268.4 709.4L274.4 709.4L274.4 717.0L279.6 717.0L279.6 730.4L286.4 730.4L286.4 733.6L291.6 733.6L291.6 725.6L297.6 725.6L297.6 719.6L303.4 719.6L303.4 725.6L309.0 725.6L309.0 734.0L315.0 734.0L315.0 738.0L327.0 738.0L327.0 732.0L333.0 732.0L333.0 727.4L338.6 727.4L338.6 723.6L345.0 723.6L345.0 727.4L350.6 727.4L350.6 725.6L362.4 725.6L362.4 728.0L368.0 728.0L368.0 732.0L369.0 732.0L369.0 732.0L380.0 732.0L380.0 730.0L386.0 730.0L386.0 727.4L391.6 727.4L391.6 722.0L397.6 722.0L397.6 712.0L403.0 712.0L403.0 709.6L409.0 709.6L409.0 707.4L415.0 707.4L415.0 704.0L421.4 704.0L421.4 707.4L426.6 707.4L426.6 717.4L438.0 717.4L438.0 719.4L444.6 719.4L444.6 714.0L461.4 714.0L461.4 709.6L468.0 709.6L468.0 705.6L474.0 705.6L474.0 703.6L480.0 703.6L480.0 698.0L491.0 698.0L491.0 691.6L497.4 691.6L497.4 693.0L503.4 693.0L503.4 699.6L508.6 699.6L508.6 704.0L514.6 704.0L514.6 707.4L520.6 707.4L520.6 709.4L532.6 709.4L532.6 707.4L538.0 707.4L538.0 699.6L543.6 699.6L543.6 691.6L549.6 691.6L549.6 689.4L556.0 689.4L556.0 694.0L561.0 694.0L561.0 696.0L567.0 696.0L567.0 699.6L573.0 699.6L573.0 704.0L579.0 704.0L579.0 707.4L584.6 707.4L584.6 703.6L596.4 703.6L596.4 707.4L608.0 707.4L608.0 707.4L609.0 707.4L609.0 695.0L614.8 695.0L614.8 683.0L620.6 683.0L620.6 665.4L638.0 665.4L638.0 664.4L644.0 664.4L644.0 683.0L649.0 683.0L649.0 699.6L655.6 699.6L655.6 706.0L661.6 706.0L661.6 704.0L673.0 704.0L673.0 717.4L679.0 717.4L679.0 727.4L690.6 727.4L690.6 728.6L696.4 728.6L696.4 734.4L702.4 734.4L702.4 736.4L708.0 736.4L708.0 738.4L714.0 738.4L714.0 733.6L719.6 733.6L719.6 720.6L731.6 720.6L731.6 719.6L743.6 719.6L743.6 724.0L749.6 724.0L749.6 727.4L755.0 727.4L755.0 728.6L761.0 728.6L761.0 730.4L766.6 730.4L766.6 727.4L772.4 727.4L772.4 724.0L778.0 724.0L778.0 725.6L784.0 725.6L784.0 732.0L790.0 732.0L790.0 733.6L796.0 733.6L796.0 734.4L807.6 734.4L807.6 736.4L813.6 736.4L813.6 732.0L819.4 732.0L819.4 717.4L825.4 717.4L825.4 704.0L837.0 704.0L837.0 711.4L842.6 711.4L842.6 717.4L847.0 717.4L847.0 717.4L849.0 717.4L849.0 719.4L854.6 719.4L854.6 711.4L860.6 711.4L860.6 705.6L866.6 705.6L866.6 703.6L878.0 703.6L878.0 711.4L884.0 711.4L884.0 715.6L895.6 715.6L895.6 711.4L901.4 711.4L901.4 703.6L907.0 703.6L907.0 709.4L918.6 709.4L918.6 704.0L927.0 704.0L927.0 705.6L930.6 705.6L930.6 719.4L936.6 719.4L936.6 725.6L942.6 725.6L942.6 717.4L948.6 717.4L948.6 720.6L954.4 720.6L954.4 714.0L960.0 714.0L960.0 704.0L966.0 704.0L966.0 688.6L972.0 688.6L972.0 693.0L977.6 693.0L977.6 707.4L983.6 707.4L983.6 714.0L989.6 714.0L989.6 717.4L995.4 717.4L995.4 711.4L1001.0 711.4L1001.0 707.4L1013.0 707.4L1013.0 709.4L1018.6 709.4L1018.6 704.0L1024.6 704.0L1024.6 714.0L1030.0 714.0L1030.0 725.6L1036.0 725.6L1036.0 711.4L1041.4 711.4L1041.4 703.6L1045.0 703.6" stroke="#f00000" stroke-width="1.1" fill="none"/>
<path d="M134.4 727.5L135.3 730.0L136.1 729.7L137.0 730.6L137.8 731.7L138.7 731.3L139.5 730.6L140.3 730.3L141.2 727.9L142.0 725.4L142.9 729.2L143.7 731.2L144.6 728.4L145.4 725.1L146.3 726.7L147.1 727.9L148.0 727.4L149.0 725.7L150.0 723.1L150.9 720.4L151.7 722.6L152.6 723.8L153.4 722.7L154.3 725.2L155.1 725.3L156.0 723.9L157.0 724.1L158.0 723.3L159.0 717.6L159.8 715.5L160.7 717.0L161.5 721.0L162.3 718.7L163.2 721.0L164.0 721.2L164.8 722.5L165.7 721.2L166.5 724.1L167.3 725.0L168.2 723.8L169.0 723.6L170.0 716.5L171.0 716.0L172.0 714.8L173.0 713.6L174.0 712.2L175.0 715.8L176.0 717.1L177.0 718.0L177.8 717.1L178.7 716.4L179.5 712.7L180.3 713.8L181.2 713.2L182.0 714.0L182.9 715.1L183.8 715.0L184.6 714.4L185.5 713.3L186.4 713.2L187.2 712.4L188.1 710.6L189.0 712.4L190.0 710.0L191.0 705.4L192.0 701.5L193.0 708.0L194.0 710.5L195.0 714.4L196.0 712.6L197.0 707.5L198.0 709.8L198.9 708.9L199.7 706.7L200.6 708.3L201.4 707.6L202.3 709.5L203.1 707.5L204.0 708.3L204.8 709.5L205.7 707.5L206.5 707.4L207.3 708.2L208.2 711.1L209.0 711.4L210.0 707.3L211.0 707.0L212.0 705.1L213.0 703.5L214.0 702.4L215.0 699.6L216.0 699.4L216.8 699.9L217.7 701.0L218.5 702.2L219.3 705.2L220.2 707.1L221.0 708.6L222.0 708.3L223.0 706.3L224.0 704.1L225.0 701.2L225.9 698.6L226.8 703.6L227.6 704.5L228.5 705.1L229.4 702.3L230.2 707.2L231.1 706.4L232.0 704.8L232.9 703.8L233.7 705.1L234.6 703.6L235.4 701.9L236.3 701.0L237.1 701.5L238.0 700.1L239.0 701.7L240.0 697.0L241.0 698.9L241.8 696.3L242.7 694.3L243.5 701.2L244.3 698.0L245.2 701.5L246.0 700.8L246.9 702.0L247.7 703.4L248.6 700.0L249.4 702.7L250.3 705.3L251.1 704.0L252.0 704.6L253.0 704.3L254.0 701.2L255.0 700.7L256.0 697.8L257.0 693.1L258.0 688.5L259.0 686.6L260.0 689.5L261.0 691.6L262.0 697.0L262.8 697.9L263.7 691.9L264.5 694.6L265.3 691.2L266.2 694.0L267.0 694.7L268.0 698.5L269.0 700.0L270.0 700.5L271.0 697.0L272.0 699.6L273.0 698.3L274.0 698.0L274.8 694.6L275.7 699.8L276.5 701.5L277.3 701.7L278.2 699.6L279.0 700.8L279.2 685.6L280.1 687.0L281.1 688.7L282.0 693.0L283.0 694.5L284.0 693.9L285.0 692.7L285.8 693.5L286.7 697.1L287.5 695.0L288.3 701.8L289.2 704.7L290.0 704.3L290.8 706.3L291.7 709.6L292.5 711.4L293.3 709.5L294.2 714.7L295.0 714.2L295.9 714.6L296.7 710.1L297.6 712.2L298.4 710.9L299.3 712.5L300.1 712.8L301.0 709.3L302.0 710.2L303.0 712.1L304.0 714.5L305.0 721.9L306.0 721.7L307.0 727.3L308.0 730.1L309.0 731.4L310.0 726.4L311.0 722.4L312.0 725.8L313.0 731.9L313.8 733.8L314.7 733.3L315.5 733.6L316.3 731.7L317.2 732.6L318.0 735.8L319.0 735.6L320.0 732.7L321.0 729.8L322.0 733.2L323.0 733.3L324.0 739.3L325.0 736.9L326.0 735.9L327.0 731.8L328.0 747.8L329.0 738.7L330.0 732.8L331.0 734.7L332.0 735.0L333.0 732.7L334.0 735.2L334.9 736.6L335.7 736.8L336.6 739.7L337.4 737.9L338.3 737.4L339.1 734.9L340.0 739.0L340.9 738.2L341.7 736.9L342.6 738.5L343.4 736.4L344.3 735.8L345.1 736.9L346.0 735.3L346.9 731.5L347.7 732.7L348.6 732.0L349.4 733.5L350.3 727.3L351.1 732.3L352.0 732.7L353.0 730.3L354.0 729.0L355.0 730.8L356.0 733.5L356.9 734.6L357.7 734.1L358.6 730.9L359.4 730.9L360.3 726.4L361.1 724.6L362.0 727.9L362.9 726.7L363.7 727.8L364.6 728.9L365.4 727.6L366.3 730.7L367.1 723.9L368.0 725.8L369.0 726.3L370.0 724.8L371.0 717.7L372.0 715.1L373.0 719.8L374.0 719.2L375.0 720.2L375.9 721.1L376.7 723.1L377.6 719.9L378.4 722.0L379.3 720.9L380.1 721.5L381.0 720.8L382.0 721.7L383.0 719.8L384.0 722.8L385.0 721.8L386.0 719.9L387.0 723.5L388.0 722.7L388.8 719.8L389.7 717.8L390.5 721.2L391.3 722.0L392.2 722.0L393.0 721.4L394.0 718.2L395.0 717.4L396.0 715.3L397.0 717.6L398.0 719.2L399.0 718.0L399.8 711.9L400.6 703.7L401.3 709.0L402.0 712.6L402.8 712.8L403.7 712.2L404.5 713.9L405.3 714.7L406.2 715.9L407.0 716.1L407.9 713.8L408.7 712.6L409.6 712.8L410.4 709.2L411.3 712.4L412.1 711.3L413.0 710.6L413.9 712.5L414.9 710.9L415.8 712.8L416.7 713.3L417.7 708.0L418.6 710.3L419.5 708.3L420.5 707.7L421.4 705.7L422.6 694.0L423.5 693.3L424.3 696.6L425.1 695.6L426.0 696.4L426.8 696.9L427.7 698.2L428.5 694.5L429.3 696.8L430.2 696.4L431.0 696.5L431.9 697.4L432.8 694.9L433.6 699.2L434.5 699.7L435.4 699.5L436.2 698.6L437.1 693.9L438.0 697.8L438.9 695.2L439.7 694.8L440.6 695.9L441.4 694.6L442.3 695.5L443.1 695.9L444.0 696.5L444.8 695.6L445.7 695.2L446.5 696.6L447.3 693.8L448.2 696.2L449.0 695.5L449.9 695.9L450.7 694.1L451.6 692.6L452.4 694.4L453.3 695.1L454.1 694.6L455.0 693.9L456.0 694.8L457.0 693.2L458.0 691.3L459.0 690.3L460.0 689.8L461.0 690.9L462.0 691.3L463.0 692.9L463.9 691.4L464.7 686.0L465.6 685.2L466.3 685.0L467.0 687.1L467.4 696.1L468.3 696.1L469.2 694.7L470.1 695.1L471.0 698.7L472.0 700.7L473.0 702.4L474.0 705.0L475.0 701.2L476.0 701.6L477.0 699.7L478.0 698.1L479.0 695.1L480.0 699.2L481.0 701.8L482.0 701.3L483.0 700.3L484.0 699.9L485.0 698.4L486.0 699.6L487.0 698.0L488.0 696.8L489.0 696.2L490.0 697.3L491.0 696.8L492.0 696.6L493.0 700.7L494.0 701.6L495.0 701.3L496.0 695.7L497.0 691.3L498.0 701.9L498.9 702.4L499.8 699.6L500.6 703.9L501.5 702.5L502.4 701.7L503.2 701.4L504.1 700.3L505.0 701.1L506.0 701.6L507.0 703.9L508.0 699.6L509.0 697.7L510.0 701.4L511.0 696.5L512.0 698.5L513.0 697.2L513.9 697.9L514.8 694.2L515.6 694.4L516.5 692.0L517.4 690.2L518.2 694.6L519.0 698.4L520.0 695.2L521.0 695.6L522.0 693.5L523.0 693.2L524.0 689.8L525.0 694.1L526.0 692.7L527.0 691.5L528.0 692.2L529.0 697.9L530.0 698.8L531.0 699.1L532.0 699.4L533.0 693.6L534.0 695.5L535.0 694.7L536.0 694.3L537.0 696.5L538.0 696.9L539.0 694.9L540.0 694.0L541.0 698.3L542.0 701.9L543.0 699.0L544.0 699.9L545.0 696.6L545.8 698.5L546.7 696.6L547.5 696.8L548.3 701.5L549.2 698.6L550.0 697.3L551.0 695.3L552.0 692.5L553.0 688.0L554.0 688.5L555.0 687.7L556.0 696.3L557.0 695.9L558.0 695.0L559.0 691.0L560.0 691.6L561.0 693.0L562.0 694.3L562.8 693.3L563.7 694.4L564.5 695.2L565.3 697.0L566.2 698.9L567.0 696.0L568.0 692.2L568.8 695.7L569.7 692.4L570.5 689.8L571.3 689.5L572.2 693.6L573.0 690.7L574.0 692.8L575.0 693.1L576.0 692.2L577.0 694.1L577.9 694.3L578.8 699.2L579.7 694.0L580.6 693.5L581.4 692.6L582.3 692.6L583.2 692.8L584.1 690.2L585.0 693.4L585.9 691.8L586.8 692.1L587.8 691.3L588.7 689.8L589.6 690.7L590.5 692.9L591.5 693.5L592.4 691.9L593.3 692.8L594.2 692.9L595.2 689.3L596.1 692.0L597.0 690.8L598.0 690.3L599.0 688.6L600.0 686.6L601.0 681.4L602.0 686.4L603.0 689.3L604.0 688.0L605.0 686.0L606.0 684.1L607.0 686.6L608.0 686.3L608.0 685.7L609.0 686.6L610.0 689.7L611.0 688.2L612.0 686.3L613.0 682.3L614.0 686.2L615.0 686.7L616.0 688.5L617.0 687.1L618.0 686.4L619.0 683.0L619.8 684.7L620.7 690.2L621.5 686.6L622.3 689.3L623.2 689.9L624.0 691.8L625.0 689.2L626.0 687.8L627.0 686.4L628.0 682.5L629.0 685.3L630.0 684.8L631.0 685.0L632.0 687.1L632.9 686.8L633.7 685.5L634.6 688.7L635.4 688.2L636.3 686.4L637.1 688.0L638.0 688.1L638.8 691.8L639.6 692.3L640.4 696.1L641.2 690.7L642.0 684.6L642.8 681.8L643.6 676.6L644.4 682.5L645.2 678.8L646.0 682.1L647.0 685.3L648.0 687.4L649.0 688.2L650.0 694.2L651.0 695.5L652.0 699.7L653.0 696.7L654.0 694.1L655.0 697.9L656.0 702.0L657.0 703.2L658.0 701.5L659.0 695.6L660.0 698.4L661.0 703.2L662.0 713.8L663.0 712.8L664.0 711.3L665.0 708.6L666.0 706.8L667.0 710.5L668.0 715.3L669.0 721.4L670.0 728.1L671.0 735.7L671.8 739.3L672.7 741.9L673.5 740.6L674.3 742.6L675.2 744.9L676.0 746.4L677.0 750.0L678.0 760.0L679.0 765.3L680.0 768.3L681.0 772.9L682.0 768.0L683.0 764.4L684.0 764.9L685.0 768.3L686.0 771.0L687.0 774.9L688.0 776.1L689.0 775.2L690.0 781.1L691.0 783.1L692.0 779.7L693.0 779.8L694.0 777.6L695.0 779.1L696.0 778.5L697.0 782.3L698.0 780.0L698.9 780.6L699.7 780.1L700.6 780.7L701.4 779.0L702.3 778.1L703.1 781.8L704.0 780.3L704.9 780.4L705.7 783.6L706.6 785.7L707.4 780.9L708.3 785.4L709.1 782.8L710.0 785.0L711.0 782.1L712.0 778.1L713.0 775.6L714.0 774.8L715.0 771.9L716.0 768.5L717.0 764.9L717.8 763.5L718.7 761.9L719.5 756.1L720.3 753.1L721.2 752.6L722.0 752.2L723.0 756.3L724.0 762.3L725.0 769.3L726.0 763.4L727.0 757.7L727.8 757.0L728.7 758.0L729.5 759.1L730.3 756.7L731.2 758.5L732.0 755.8L733.0 753.9L734.0 754.6L735.0 752.4L736.0 750.0L736.8 750.6L737.7 755.0L738.5 750.2L739.3 749.7L740.2 747.5L741.0 746.8L741.8 748.2L742.7 748.0L743.5 750.6L744.3 748.7L745.2 752.0L746.0 750.6L746.9 750.6L747.7 749.3L748.6 751.2L749.4 747.9L750.3 746.8L751.1 743.4L752.0 743.7L752.9 743.5L753.8 737.9L754.7 735.5L755.6 735.1L756.4 738.6L757.2 740.2L758.0 748.1L759.0 745.6L760.0 740.3L761.0 740.1L762.0 743.5L763.0 745.9L764.0 751.5L765.0 746.7L766.0 745.5L767.0 745.1L768.0 744.0L769.0 746.1L770.0 750.6L771.0 745.1L772.0 738.3L773.0 732.8L773.8 732.0L774.7 731.2L775.5 728.7L776.3 727.5L777.2 724.8L778.0 724.1L779.0 723.0L780.0 726.3L781.0 727.3L782.0 728.0L783.0 730.5L784.0 729.7L785.0 731.2L786.0 731.8L787.0 732.0L788.0 732.3L789.0 729.5L790.0 729.7L791.0 733.3L792.0 734.9L793.0 738.9L794.0 735.7L795.0 734.9L796.0 735.2L797.0 735.2L797.9 737.2L798.7 736.2L799.6 738.1L800.4 740.8L801.3 740.4L802.1 744.2L803.0 743.8L803.8 741.7L804.7 741.9L805.5 743.1L806.3 739.3L807.2 737.5L808.0 735.8L809.0 738.5L810.0 737.2L811.0 740.5L811.9 746.9L812.7 754.4L813.6 758.3L814.4 756.1L815.2 749.9L816.0 743.4L816.8 742.6L817.7 743.0L818.5 735.4L819.3 738.2L820.2 736.5L821.0 735.5L822.0 730.9L823.0 729.6L824.0 724.8L825.0 721.0L826.0 723.6L827.0 728.7L828.0 724.4L829.0 717.7L830.0 724.2L831.0 725.5L832.0 732.1L833.0 729.3L834.0 727.9L835.0 720.7L836.0 713.3L837.0 721.9L838.0 719.4L839.0 727.4L840.0 729.8L841.0 730.1L842.0 729.8L843.0 732.9L844.0 731.5L845.0 734.1L846.0 731.2L847.0 734.0L847.0 732.8L848.0 730.1L849.0 728.9L850.0 728.6L851.0 726.9L851.8 726.2L852.7 725.7L853.5 725.7L854.3 722.8L855.2 723.9L856.0 722.2L857.0 721.2L858.0 720.4L859.0 721.7L860.0 721.7L860.9 724.8L861.7 721.5L862.6 727.2L863.4 729.2L864.3 730.4L865.1 730.0L866.0 730.9L866.8 731.4L867.7 729.3L868.5 725.2L869.3 721.9L870.2 720.8L871.0 721.5L872.0 719.6L873.0 721.7L874.0 717.9L875.0 718.3L876.0 718.4L877.0 712.5L878.0 712.2L879.0 713.1L880.0 712.8L881.0 718.7L881.9 717.0L882.7 713.6L883.6 714.5L884.4 715.9L885.3 714.1L886.1 710.0L887.0 711.2L887.8 711.9L888.7 714.0L889.5 714.3L890.3 713.9L891.2 715.7L892.0 718.0L893.0 716.0L894.0 714.9L895.0 710.0L896.0 711.6L896.9 707.7L897.8 711.7L898.6 713.1L899.5 710.5L900.4 712.4L901.2 712.0L902.1 714.1L903.0 715.0L904.0 711.1L905.0 711.9L906.0 708.9L907.0 709.3L907.9 709.4L908.7 711.8L909.6 712.4L910.4 710.7L911.3 710.8L912.1 716.3L913.0 716.6L913.9 717.0L914.7 713.9L915.6 713.2L916.4 714.9L917.3 714.8L918.1 713.2L919.0 713.1L920.0 702.1L920.6 721.1L921.4 719.0L922.2 712.7L923.0 704.6L924.0 704.9L925.0 708.3L926.0 705.0L927.0 708.8L928.0 709.9L929.0 707.5L930.0 703.9L930.8 701.7L931.7 703.6L932.5 703.6L933.3 704.0L934.2 704.2L935.0 702.1L935.9 703.0L936.7 704.0L937.6 701.9L938.4 701.0L939.3 700.9L940.1 697.6L941.0 699.5L942.0 705.1L943.0 706.7L944.0 707.6L944.8 704.2L945.6 697.1L946.4 692.1L947.2 703.8L948.0 714.1L949.0 710.8L950.0 712.9L951.0 713.1L951.8 704.8L952.6 695.6L953.4 703.5L954.2 712.7L955.0 718.9L956.0 720.8L957.0 716.5L958.0 714.1L959.0 714.7L960.0 714.7L961.0 715.2L962.0 720.1L963.0 719.4L964.0 714.5L965.0 711.1L966.0 707.2L967.0 711.5L968.0 717.2L969.0 714.3L970.0 717.7L971.0 719.7L972.0 721.1L973.0 714.0L974.0 712.4L975.0 708.1L976.0 708.3L977.0 708.6L978.0 715.1L979.0 713.2L980.0 715.8L981.0 719.3L981.9 716.9L982.7 718.0L983.6 719.5L984.4 721.9L985.3 717.4L986.1 717.6L987.0 717.9L987.9 718.6L988.7 713.4L989.6 713.8L990.4 715.7L991.3 715.9L992.1 717.0L993.0 714.9L993.9 716.9L994.7 718.7L995.6 716.6L996.4 717.2L997.3 718.4L998.1 718.9L999.0 720.9L1000.0 717.8L1001.0 713.8L1002.0 710.9L1002.8 712.5L1003.7 711.0L1004.5 712.6L1005.3 715.0L1006.2 714.1L1007.0 715.2L1007.9 715.0L1008.7 714.5L1009.6 716.4L1010.4 717.1L1011.3 718.1L1012.1 717.9L1013.0 716.4L1014.0 716.0L1015.0 713.8L1016.0 712.1L1017.0 710.1L1017.9 707.6L1018.8 704.8L1019.6 705.3L1020.5 701.5L1021.4 701.1L1022.3 704.3L1023.1 708.7L1024.0 707.5L1025.0 711.1L1026.0 715.9L1027.0 718.4L1027.8 710.2L1028.6 706.0L1029.4 697.8L1030.2 705.2L1031.0 715.8L1032.0 712.2L1033.0 709.0L1034.0 711.9L1035.0 715.5L1036.0 721.3L1037.0 724.6L1038.0 727.4L1039.0 720.9L1040.0 713.6L1041.0 722.3L1042.0 727.3L1043.0 724.1L1044.0 718.9L1045.0 714.7L1046.0 721.2L1047.0 725.1L1048.0 731.7L1049.0 733.6L1049.8 736.6L1050.6 734.3L1051.4 736.4" stroke="#dcdcdc" stroke-width="0.95" fill="none" stroke-linejoin="round"/>
<path d="M134.5 118.5h3.5M1118.5 118.5h-3.5 M134.5 134.5h3.5M1118.5 134.5h-3.5 M134.5 150.5h3.5M1118.5 150.5h-3.5 M134.5 166.5h3.5M1118.5 166.5h-3.5 M134.5 182.5h3.5M1118.5 182.5h-3.5 M134.5 211.5h3.5M1118.5 211.5h-3.5 M134.5 231.5h3.5M1118.5 231.5h-3.5 M134.5 251.5h3.5M1118.5 251.5h-3.5 M134.5 286.5h3.5M1118.5 286.5h-3.5 M134.5 307.5h3.5M1118.5 307.5h-3.5 M134.5 328.5h3.5M1118.5 328.5h-3.5 M134.5 349.5h3.5M1118.5 349.5h-3.5 M134.5 365.5h3.5M1118.5 365.5h-3.5 M134.5 384.5h3.5M1118.5 384.5h-3.5 M134.5 403.5h3.5M1118.5 403.5h-3.5 M134.5 423.5h3.5M1118.5 423.5h-3.5 M134.5 474.5h3.5M1118.5 474.5h-3.5 M134.5 491.5h3.5M1118.5 491.5h-3.5 M134.5 509.5h3.5M1118.5 509.5h-3.5 M134.5 527.5h3.5M1118.5 527.5h-3.5 M134.5 544.5h3.5M1118.5 544.5h-3.5 M134.5 562.5h3.5M1118.5 562.5h-3.5 M134.5 579.5h3.5M1118.5 579.5h-3.5 M134.5 597.5h3.5M1118.5 597.5h-3.5 M134.5 615.5h3.5M1118.5 615.5h-3.5 M134.5 632.5h3.5M1118.5 632.5h-3.5 M134.5 660.5h3.5M1118.5 660.5h-3.5 M134.5 693.5h3.5M1118.5 693.5h-3.5 M134.5 725.5h3.5M1118.5 725.5h-3.5 M134.5 758.5h3.5M1118.5 758.5h-3.5 M134.5 790.5h3.5M1118.5 790.5h-3.5" stroke="#e4e4e4" stroke-width="1" fill="none"/>
<rect x="134.5" y="108.5" width="984.0" height="326.0" fill="none" stroke="#c4c4c4" stroke-width="1.15"/>
<rect x="134.5" y="467.5" width="984.0" height="343.0" fill="none" stroke="#c4c4c4" stroke-width="1.15"/>
<line x1="134.5" x2="1118.5" y1="190.5" y2="190.5" stroke="#c4c4c4" stroke-width="1.15"/>
<line x1="134.5" x2="1118.5" y1="271.5" y2="271.5" stroke="#c4c4c4" stroke-width="1.15"/>
<line x1="134.5" x2="1118.5" y1="353.5" y2="353.5" stroke="#c4c4c4" stroke-width="1.15"/>
<line x1="134.5" x2="1118.5" y1="638.8" y2="638.8" stroke="#c4c4c4" stroke-width="1.15"/>
<path d="M139.86 108.5V112.0M145.71 108.5V112.0M151.57 108.5V112.0M157.43 108.5V112.0M163.29 108.5V112.0M169.14 108.5V112.0M175.00 108.5V112.0M180.86 108.5V112.0M186.71 108.5V112.0M192.57 108.5V112.0M198.43 108.5V112.0M204.29 108.5V112.0M210.14 108.5V112.0M216.00 108.5V112.0M221.86 108.5V112.0M227.71 108.5V112.0M233.57 108.5V112.0M239.43 108.5V112.0M245.29 108.5V112.0M251.14 108.5V112.0M257.00 108.5V112.0M262.86 108.5V112.0M268.71 108.5V112.0M280.43 108.5V112.0M286.29 108.5V112.0M292.14 108.5V112.0M298.00 108.5V112.0M303.86 108.5V112.0M309.71 108.5V112.0M315.57 108.5V112.0M321.43 108.5V112.0M327.29 108.5V112.0M333.14 108.5V112.0M339.00 108.5V112.0M344.86 108.5V112.0M350.71 108.5V112.0M356.57 108.5V112.0M362.43 108.5V112.0M368.29 108.5V112.0M374.14 108.5V112.0M380.00 108.5V112.0M385.86 108.5V112.0M391.71 108.5V112.0M397.57 108.5V112.0M403.43 108.5V112.0M409.29 108.5V112.0M421.00 108.5V112.0M426.86 108.5V112.0M432.71 108.5V112.0M438.57 108.5V112.0M444.43 108.5V112.0M450.29 108.5V112.0M456.14 108.5V112.0M462.00 108.5V112.0M467.86 108.5V112.0M473.71 108.5V112.0M479.57 108.5V112.0M485.43 108.5V112.0M491.29 108.5V112.0M497.14 108.5V112.0M503.00 108.5V112.0M508.86 108.5V112.0M514.71 108.5V112.0M520.57 108.5V112.0M526.43 108.5V112.0M532.29 108.5V112.0M538.14 108.5V112.0M544.00 108.5V112.0M549.86 108.5V112.0M561.57 108.5V112.0M567.43 108.5V112.0M573.29 108.5V112.0M579.14 108.5V112.0M585.00 108.5V112.0M590.86 108.5V112.0M596.71 108.5V112.0M602.57 108.5V112.0M608.43 108.5V112.0M614.29 108.5V112.0M620.14 108.5V112.0M626.00 108.5V112.0M631.86 108.5V112.0M637.71 108.5V112.0M643.57 108.5V112.0M649.43 108.5V112.0M655.29 108.5V112.0M661.14 108.5V112.0M667.00 108.5V112.0M672.86 108.5V112.0M678.71 108.5V112.0M684.57 108.5V112.0M690.43 108.5V112.0M702.14 108.5V112.0M708.00 108.5V112.0M713.86 108.5V112.0M719.71 108.5V112.0M725.57 108.5V112.0M731.43 108.5V112.0M737.29 108.5V112.0M743.14 108.5V112.0M749.00 108.5V112.0M754.86 108.5V112.0M760.71 108.5V112.0M766.57 108.5V112.0M772.43 108.5V112.0M778.29 108.5V112.0M784.14 108.5V112.0M790.00 108.5V112.0M795.86 108.5V112.0M801.71 108.5V112.0M807.57 108.5V112.0M813.43 108.5V112.0M819.29 108.5V112.0M825.14 108.5V112.0M831.00 108.5V112.0M842.71 108.5V112.0M848.57 108.5V112.0M854.43 108.5V112.0M860.29 108.5V112.0M866.14 108.5V112.0M872.00 108.5V112.0M877.86 108.5V112.0M883.71 108.5V112.0M889.57 108.5V112.0M895.43 108.5V112.0M901.29 108.5V112.0M907.14 108.5V112.0M913.00 108.5V112.0M918.86 108.5V112.0M924.71 108.5V112.0M930.57 108.5V112.0M936.43 108.5V112.0M942.29 108.5V112.0M948.14 108.5V112.0M954.00 108.5V112.0M959.86 108.5V112.0M965.71 108.5V112.0M971.57 108.5V112.0M983.29 108.5V112.0M989.14 108.5V112.0M995.00 108.5V112.0M1000.86 108.5V112.0M1006.71 108.5V112.0M1012.57 108.5V112.0M1018.43 108.5V112.0M1024.29 108.5V112.0M1030.14 108.5V112.0M1036.00 108.5V112.0M1041.86 108.5V112.0M1047.71 108.5V112.0M1053.57 108.5V112.0M1059.43 108.5V112.0M1065.29 108.5V112.0M1071.14 108.5V112.0M1077.00 108.5V112.0M1082.86 108.5V112.0M1088.71 108.5V112.0M1094.57 108.5V112.0M1100.43 108.5V112.0M1106.29 108.5V112.0M1112.14 108.5V112.0M139.86 186.8V194.2M145.71 186.8V194.2M151.57 186.8V194.2M157.43 186.8V194.2M163.29 186.8V194.2M169.14 186.8V194.2M175.00 186.8V194.2M180.86 186.8V194.2M186.71 186.8V194.2M192.57 186.8V194.2M198.43 186.8V194.2M204.29 186.8V194.2M210.14 186.8V194.2M216.00 186.8V194.2M221.86 186.8V194.2M227.71 186.8V194.2M233.57 186.8V194.2M239.43 186.8V194.2M245.29 186.8V194.2M251.14 186.8V194.2M257.00 186.8V194.2M262.86 186.8V194.2M268.71 186.8V194.2M280.43 186.8V194.2M286.29 186.8V194.2M292.14 186.8V194.2M298.00 186.8V194.2M303.86 186.8V194.2M309.71 186.8V194.2M315.57 186.8V194.2M321.43 186.8V194.2M327.29 186.8V194.2M333.14 186.8V194.2M339.00 186.8V194.2M344.86 186.8V194.2M350.71 186.8V194.2M356.57 186.8V194.2M362.43 186.8V194.2M368.29 186.8V194.2M374.14 186.8V194.2M380.00 186.8V194.2M385.86 186.8V194.2M391.71 186.8V194.2M397.57 186.8V194.2M403.43 186.8V194.2M409.29 186.8V194.2M421.00 186.8V194.2M426.86 186.8V194.2M432.71 186.8V194.2M438.57 186.8V194.2M444.43 186.8V194.2M450.29 186.8V194.2M456.14 186.8V194.2M462.00 186.8V194.2M467.86 186.8V194.2M473.71 186.8V194.2M479.57 186.8V194.2M485.43 186.8V194.2M491.29 186.8V194.2M497.14 186.8V194.2M503.00 186.8V194.2M508.86 186.8V194.2M514.71 186.8V194.2M520.57 186.8V194.2M526.43 186.8V194.2M532.29 186.8V194.2M538.14 186.8V194.2M544.00 186.8V194.2M549.86 186.8V194.2M561.57 186.8V194.2M567.43 186.8V194.2M573.29 186.8V194.2M579.14 186.8V194.2M585.00 186.8V194.2M590.86 186.8V194.2M596.71 186.8V194.2M602.57 186.8V194.2M608.43 186.8V194.2M614.29 186.8V194.2M620.14 186.8V194.2M626.00 186.8V194.2M631.86 186.8V194.2M637.71 186.8V194.2M643.57 186.8V194.2M649.43 186.8V194.2M655.29 186.8V194.2M661.14 186.8V194.2M667.00 186.8V194.2M672.86 186.8V194.2M678.71 186.8V194.2M684.57 186.8V194.2M690.43 186.8V194.2M702.14 186.8V194.2M708.00 186.8V194.2M713.86 186.8V194.2M719.71 186.8V194.2M725.57 186.8V194.2M731.43 186.8V194.2M737.29 186.8V194.2M743.14 186.8V194.2M749.00 186.8V194.2M754.86 186.8V194.2M760.71 186.8V194.2M766.57 186.8V194.2M772.43 186.8V194.2M778.29 186.8V194.2M784.14 186.8V194.2M790.00 186.8V194.2M795.86 186.8V194.2M801.71 186.8V194.2M807.57 186.8V194.2M813.43 186.8V194.2M819.29 186.8V194.2M825.14 186.8V194.2M831.00 186.8V194.2M842.71 186.8V194.2M848.57 186.8V194.2M854.43 186.8V194.2M860.29 186.8V194.2M866.14 186.8V194.2M872.00 186.8V194.2M877.86 186.8V194.2M883.71 186.8V194.2M889.57 186.8V194.2M895.43 186.8V194.2M901.29 186.8V194.2M907.14 186.8V194.2M913.00 186.8V194.2M918.86 186.8V194.2M924.71 186.8V194.2M930.57 186.8V194.2M936.43 186.8V194.2M942.29 186.8V194.2M948.14 186.8V194.2M954.00 186.8V194.2M959.86 186.8V194.2M965.71 186.8V194.2M971.57 186.8V194.2M983.29 186.8V194.2M989.14 186.8V194.2M995.00 186.8V194.2M1000.86 186.8V194.2M1006.71 186.8V194.2M1012.57 186.8V194.2M1018.43 186.8V194.2M1024.29 186.8V194.2M1030.14 186.8V194.2M1036.00 186.8V194.2M1041.86 186.8V194.2M1047.71 186.8V194.2M1053.57 186.8V194.2M1059.43 186.8V194.2M1065.29 186.8V194.2M1071.14 186.8V194.2M1077.00 186.8V194.2M1082.86 186.8V194.2M1088.71 186.8V194.2M1094.57 186.8V194.2M1100.43 186.8V194.2M1106.29 186.8V194.2M1112.14 186.8V194.2M139.86 267.8V275.2M145.71 267.8V275.2M151.57 267.8V275.2M157.43 267.8V275.2M163.29 267.8V275.2M169.14 267.8V275.2M175.00 267.8V275.2M180.86 267.8V275.2M186.71 267.8V275.2M192.57 267.8V275.2M198.43 267.8V275.2M204.29 267.8V275.2M210.14 267.8V275.2M216.00 267.8V275.2M221.86 267.8V275.2M227.71 267.8V275.2M233.57 267.8V275.2M239.43 267.8V275.2M245.29 267.8V275.2M251.14 267.8V275.2M257.00 267.8V275.2M262.86 267.8V275.2M268.71 267.8V275.2M280.43 267.8V275.2M286.29 267.8V275.2M292.14 267.8V275.2M298.00 267.8V275.2M303.86 267.8V275.2M309.71 267.8V275.2M315.57 267.8V275.2M321.43 267.8V275.2M327.29 267.8V275.2M333.14 267.8V275.2M339.00 267.8V275.2M344.86 267.8V275.2M350.71 267.8V275.2M356.57 267.8V275.2M362.43 267.8V275.2M368.29 267.8V275.2M374.14 267.8V275.2M380.00 267.8V275.2M385.86 267.8V275.2M391.71 267.8V275.2M397.57 267.8V275.2M403.43 267.8V275.2M409.29 267.8V275.2M421.00 267.8V275.2M426.86 267.8V275.2M432.71 267.8V275.2M438.57 267.8V275.2M444.43 267.8V275.2M450.29 267.8V275.2M456.14 267.8V275.2M462.00 267.8V275.2M467.86 267.8V275.2M473.71 267.8V275.2M479.57 267.8V275.2M485.43 267.8V275.2M491.29 267.8V275.2M497.14 267.8V275.2M503.00 267.8V275.2M508.86 267.8V275.2M514.71 267.8V275.2M520.57 267.8V275.2M526.43 267.8V275.2M532.29 267.8V275.2M538.14 267.8V275.2M544.00 267.8V275.2M549.86 267.8V275.2M561.57 267.8V275.2M567.43 267.8V275.2M573.29 267.8V275.2M579.14 267.8V275.2M585.00 267.8V275.2M590.86 267.8V275.2M596.71 267.8V275.2M602.57 267.8V275.2M608.43 267.8V275.2M614.29 267.8V275.2M620.14 267.8V275.2M626.00 267.8V275.2M631.86 267.8V275.2M637.71 267.8V275.2M643.57 267.8V275.2M649.43 267.8V275.2M655.29 267.8V275.2M661.14 267.8V275.2M667.00 267.8V275.2M672.86 267.8V275.2M678.71 267.8V275.2M684.57 267.8V275.2M690.43 267.8V275.2M702.14 267.8V275.2M708.00 267.8V275.2M713.86 267.8V275.2M719.71 267.8V275.2M725.57 267.8V275.2M731.43 267.8V275.2M737.29 267.8V275.2M743.14 267.8V275.2M749.00 267.8V275.2M754.86 267.8V275.2M760.71 267.8V275.2M766.57 267.8V275.2M772.43 267.8V275.2M778.29 267.8V275.2M784.14 267.8V275.2M790.00 267.8V275.2M795.86 267.8V275.2M801.71 267.8V275.2M807.57 267.8V275.2M813.43 267.8V275.2M819.29 267.8V275.2M825.14 267.8V275.2M831.00 267.8V275.2M842.71 267.8V275.2M848.57 267.8V275.2M854.43 267.8V275.2M860.29 267.8V275.2M866.14 267.8V275.2M872.00 267.8V275.2M877.86 267.8V275.2M883.71 267.8V275.2M889.57 267.8V275.2M895.43 267.8V275.2M901.29 267.8V275.2M907.14 267.8V275.2M913.00 267.8V275.2M918.86 267.8V275.2M924.71 267.8V275.2M930.57 267.8V275.2M936.43 267.8V275.2M942.29 267.8V275.2M948.14 267.8V275.2M954.00 267.8V275.2M959.86 267.8V275.2M965.71 267.8V275.2M971.57 267.8V275.2M983.29 267.8V275.2M989.14 267.8V275.2M995.00 267.8V275.2M1000.86 267.8V275.2M1006.71 267.8V275.2M1012.57 267.8V275.2M1018.43 267.8V275.2M1024.29 267.8V275.2M1030.14 267.8V275.2M1036.00 267.8V275.2M1041.86 267.8V275.2M1047.71 267.8V275.2M1053.57 267.8V275.2M1059.43 267.8V275.2M1065.29 267.8V275.2M1071.14 267.8V275.2M1077.00 267.8V275.2M1082.86 267.8V275.2M1088.71 267.8V275.2M1094.57 267.8V275.2M1100.43 267.8V275.2M1106.29 267.8V275.2M1112.14 267.8V275.2M139.86 349.8V357.2M145.71 349.8V357.2M151.57 349.8V357.2M157.43 349.8V357.2M163.29 349.8V357.2M169.14 349.8V357.2M175.00 349.8V357.2M180.86 349.8V357.2M186.71 349.8V357.2M192.57 349.8V357.2M198.43 349.8V357.2M204.29 349.8V357.2M210.14 349.8V357.2M216.00 349.8V357.2M221.86 349.8V357.2M227.71 349.8V357.2M233.57 349.8V357.2M239.43 349.8V357.2M245.29 349.8V357.2M251.14 349.8V357.2M257.00 349.8V357.2M262.86 349.8V357.2M268.71 349.8V357.2M280.43 349.8V357.2M286.29 349.8V357.2M292.14 349.8V357.2M298.00 349.8V357.2M303.86 349.8V357.2M309.71 349.8V357.2M315.57 349.8V357.2M321.43 349.8V357.2M327.29 349.8V357.2M333.14 349.8V357.2M339.00 349.8V357.2M344.86 349.8V357.2M350.71 349.8V357.2M356.57 349.8V357.2M362.43 349.8V357.2M368.29 349.8V357.2M374.14 349.8V357.2M380.00 349.8V357.2M385.86 349.8V357.2M391.71 349.8V357.2M397.57 349.8V357.2M403.43 349.8V357.2M409.29 349.8V357.2M421.00 349.8V357.2M426.86 349.8V357.2M432.71 349.8V357.2M438.57 349.8V357.2M444.43 349.8V357.2M450.29 349.8V357.2M456.14 349.8V357.2M462.00 349.8V357.2M467.86 349.8V357.2M473.71 349.8V357.2M479.57 349.8V357.2M485.43 349.8V357.2M491.29 349.8V357.2M497.14 349.8V357.2M503.00 349.8V357.2M508.86 349.8V357.2M514.71 349.8V357.2M520.57 349.8V357.2M526.43 349.8V357.2M532.29 349.8V357.2M538.14 349.8V357.2M544.00 349.8V357.2M549.86 349.8V357.2M561.57 349.8V357.2M567.43 349.8V357.2M573.29 349.8V357.2M579.14 349.8V357.2M585.00 349.8V357.2M590.86 349.8V357.2M596.71 349.8V357.2M602.57 349.8V357.2M608.43 349.8V357.2M614.29 349.8V357.2M620.14 349.8V357.2M626.00 349.8V357.2M631.86 349.8V357.2M637.71 349.8V357.2M643.57 349.8V357.2M649.43 349.8V357.2M655.29 349.8V357.2M661.14 349.8V357.2M667.00 349.8V357.2M672.86 349.8V357.2M678.71 349.8V357.2M684.57 349.8V357.2M690.43 349.8V357.2M702.14 349.8V357.2M708.00 349.8V357.2M713.86 349.8V357.2M719.71 349.8V357.2M725.57 349.8V357.2M731.43 349.8V357.2M737.29 349.8V357.2M743.14 349.8V357.2M749.00 349.8V357.2M754.86 349.8V357.2M760.71 349.8V357.2M766.57 349.8V357.2M772.43 349.8V357.2M778.29 349.8V357.2M784.14 349.8V357.2M790.00 349.8V357.2M795.86 349.8V357.2M801.71 349.8V357.2M807.57 349.8V357.2M813.43 349.8V357.2M819.29 349.8V357.2M825.14 349.8V357.2M831.00 349.8V357.2M842.71 349.8V357.2M848.57 349.8V357.2M854.43 349.8V357.2M860.29 349.8V357.2M866.14 349.8V357.2M872.00 349.8V357.2M877.86 349.8V357.2M883.71 349.8V357.2M889.57 349.8V357.2M895.43 349.8V357.2M901.29 349.8V357.2M907.14 349.8V357.2M913.00 349.8V357.2M918.86 349.8V357.2M924.71 349.8V357.2M930.57 349.8V357.2M936.43 349.8V357.2M942.29 349.8V357.2M948.14 349.8V357.2M954.00 349.8V357.2M959.86 349.8V357.2M965.71 349.8V357.2M971.57 349.8V357.2M983.29 349.8V357.2M989.14 349.8V357.2M995.00 349.8V357.2M1000.86 349.8V357.2M1006.71 349.8V357.2M1012.57 349.8V357.2M1018.43 349.8V357.2M1024.29 349.8V357.2M1030.14 349.8V357.2M1036.00 349.8V357.2M1041.86 349.8V357.2M1047.71 349.8V357.2M1053.57 349.8V357.2M1059.43 349.8V357.2M1065.29 349.8V357.2M1071.14 349.8V357.2M1077.00 349.8V357.2M1082.86 349.8V357.2M1088.71 349.8V357.2M1094.57 349.8V357.2M1100.43 349.8V357.2M1106.29 349.8V357.2M1112.14 349.8V357.2M139.86 431.0V434.5M145.71 431.0V434.5M151.57 431.0V434.5M157.43 431.0V434.5M163.29 431.0V434.5M169.14 431.0V434.5M175.00 431.0V434.5M180.86 431.0V434.5M186.71 431.0V434.5M192.57 431.0V434.5M198.43 431.0V434.5M204.29 431.0V434.5M210.14 431.0V434.5M216.00 431.0V434.5M221.86 431.0V434.5M227.71 431.0V434.5M233.57 431.0V434.5M239.43 431.0V434.5M245.29 431.0V434.5M251.14 431.0V434.5M257.00 431.0V434.5M262.86 431.0V434.5M268.71 431.0V434.5M280.43 431.0V434.5M286.29 431.0V434.5M292.14 431.0V434.5M298.00 431.0V434.5M303.86 431.0V434.5M309.71 431.0V434.5M315.57 431.0V434.5M321.43 431.0V434.5M327.29 431.0V434.5M333.14 431.0V434.5M339.00 431.0V434.5M344.86 431.0V434.5M350.71 431.0V434.5M356.57 431.0V434.5M362.43 431.0V434.5M368.29 431.0V434.5M374.14 431.0V434.5M380.00 431.0V434.5M385.86 431.0V434.5M391.71 431.0V434.5M397.57 431.0V434.5M403.43 431.0V434.5M409.29 431.0V434.5M421.00 431.0V434.5M426.86 431.0V434.5M432.71 431.0V434.5M438.57 431.0V434.5M444.43 431.0V434.5M450.29 431.0V434.5M456.14 431.0V434.5M462.00 431.0V434.5M467.86 431.0V434.5M473.71 431.0V434.5M479.57 431.0V434.5M485.43 431.0V434.5M491.29 431.0V434.5M497.14 431.0V434.5M503.00 431.0V434.5M508.86 431.0V434.5M514.71 431.0V434.5M520.57 431.0V434.5M526.43 431.0V434.5M532.29 431.0V434.5M538.14 431.0V434.5M544.00 431.0V434.5M549.86 431.0V434.5M561.57 431.0V434.5M567.43 431.0V434.5M573.29 431.0V434.5M579.14 431.0V434.5M585.00 431.0V434.5M590.86 431.0V434.5M596.71 431.0V434.5M602.57 431.0V434.5M608.43 431.0V434.5M614.29 431.0V434.5M620.14 431.0V434.5M626.00 431.0V434.5M631.86 431.0V434.5M637.71 431.0V434.5M643.57 431.0V434.5M649.43 431.0V434.5M655.29 431.0V434.5M661.14 431.0V434.5M667.00 431.0V434.5M672.86 431.0V434.5M678.71 431.0V434.5M684.57 431.0V434.5M690.43 431.0V434.5M702.14 431.0V434.5M708.00 431.0V434.5M713.86 431.0V434.5M719.71 431.0V434.5M725.57 431.0V434.5M731.43 431.0V434.5M737.29 431.0V434.5M743.14 431.0V434.5M749.00 431.0V434.5M754.86 431.0V434.5M760.71 431.0V434.5M766.57 431.0V434.5M772.43 431.0V434.5M778.29 431.0V434.5M784.14 431.0V434.5M790.00 431.0V434.5M795.86 431.0V434.5M801.71 431.0V434.5M807.57 431.0V434.5M813.43 431.0V434.5M819.29 431.0V434.5M825.14 431.0V434.5M831.00 431.0V434.5M842.71 431.0V434.5M848.57 431.0V434.5M854.43 431.0V434.5M860.29 431.0V434.5M866.14 431.0V434.5M872.00 431.0V434.5M877.86 431.0V434.5M883.71 431.0V434.5M889.57 431.0V434.5M895.43 431.0V434.5M901.29 431.0V434.5M907.14 431.0V434.5M913.00 431.0V434.5M918.86 431.0V434.5M924.71 431.0V434.5M930.57 431.0V434.5M936.43 431.0V434.5M942.29 431.0V434.5M948.14 431.0V434.5M954.00 431.0V434.5M959.86 431.0V434.5M965.71 431.0V434.5M971.57 431.0V434.5M983.29 431.0V434.5M989.14 431.0V434.5M995.00 431.0V434.5M1000.86 431.0V434.5M1006.71 431.0V434.5M1012.57 431.0V434.5M1018.43 431.0V434.5M1024.29 431.0V434.5M1030.14 431.0V434.5M1036.00 431.0V434.5M1041.86 431.0V434.5M1047.71 431.0V434.5M1053.57 431.0V434.5M1059.43 431.0V434.5M1065.29 431.0V434.5M1071.14 431.0V434.5M1077.00 431.0V434.5M1082.86 431.0V434.5M1088.71 431.0V434.5M1094.57 431.0V434.5M1100.43 431.0V434.5M1106.29 431.0V434.5M1112.14 431.0V434.5M139.86 467.5V471.0M145.71 467.5V471.0M151.57 467.5V471.0M157.43 467.5V471.0M163.29 467.5V471.0M169.14 467.5V471.0M175.00 467.5V471.0M180.86 467.5V471.0M186.71 467.5V471.0M192.57 467.5V471.0M198.43 467.5V471.0M204.29 467.5V471.0M210.14 467.5V471.0M216.00 467.5V471.0M221.86 467.5V471.0M227.71 467.5V471.0M233.57 467.5V471.0M239.43 467.5V471.0M245.29 467.5V471.0M251.14 467.5V471.0M257.00 467.5V471.0M262.86 467.5V471.0M268.71 467.5V471.0M280.43 467.5V471.0M286.29 467.5V471.0M292.14 467.5V471.0M298.00 467.5V471.0M303.86 467.5V471.0M309.71 467.5V471.0M315.57 467.5V471.0M321.43 467.5V471.0M327.29 467.5V471.0M333.14 467.5V471.0M339.00 467.5V471.0M344.86 467.5V471.0M350.71 467.5V471.0M356.57 467.5V471.0M362.43 467.5V471.0M368.29 467.5V471.0M374.14 467.5V471.0M380.00 467.5V471.0M385.86 467.5V471.0M391.71 467.5V471.0M397.57 467.5V471.0M403.43 467.5V471.0M409.29 467.5V471.0M421.00 467.5V471.0M426.86 467.5V471.0M432.71 467.5V471.0M438.57 467.5V471.0M444.43 467.5V471.0M450.29 467.5V471.0M456.14 467.5V471.0M462.00 467.5V471.0M467.86 467.5V471.0M473.71 467.5V471.0M479.57 467.5V471.0M485.43 467.5V471.0M491.29 467.5V471.0M497.14 467.5V471.0M503.00 467.5V471.0M508.86 467.5V471.0M514.71 467.5V471.0M520.57 467.5V471.0M526.43 467.5V471.0M532.29 467.5V471.0M538.14 467.5V471.0M544.00 467.5V471.0M549.86 467.5V471.0M561.57 467.5V471.0M567.43 467.5V471.0M573.29 467.5V471.0M579.14 467.5V471.0M585.00 467.5V471.0M590.86 467.5V471.0M596.71 467.5V471.0M602.57 467.5V471.0M608.43 467.5V471.0M614.29 467.5V471.0M620.14 467.5V471.0M626.00 467.5V471.0M631.86 467.5V471.0M637.71 467.5V471.0M643.57 467.5V471.0M649.43 467.5V471.0M655.29 467.5V471.0M661.14 467.5V471.0M667.00 467.5V471.0M672.86 467.5V471.0M678.71 467.5V471.0M684.57 467.5V471.0M690.43 467.5V471.0M702.14 467.5V471.0M708.00 467.5V471.0M713.86 467.5V471.0M719.71 467.5V471.0M725.57 467.5V471.0M731.43 467.5V471.0M737.29 467.5V471.0M743.14 467.5V471.0M749.00 467.5V471.0M754.86 467.5V471.0M760.71 467.5V471.0M766.57 467.5V471.0M772.43 467.5V471.0M778.29 467.5V471.0M784.14 467.5V471.0M790.00 467.5V471.0M795.86 467.5V471.0M801.71 467.5V471.0M807.57 467.5V471.0M813.43 467.5V471.0M819.29 467.5V471.0M825.14 467.5V471.0M831.00 467.5V471.0M842.71 467.5V471.0M848.57 467.5V471.0M854.43 467.5V471.0M860.29 467.5V471.0M866.14 467.5V471.0M872.00 467.5V471.0M877.86 467.5V471.0M883.71 467.5V471.0M889.57 467.5V471.0M895.43 467.5V471.0M901.29 467.5V471.0M907.14 467.5V471.0M913.00 467.5V471.0M918.86 467.5V471.0M924.71 467.5V471.0M930.57 467.5V471.0M936.43 467.5V471.0M942.29 467.5V471.0M948.14 467.5V471.0M954.00 467.5V471.0M959.86 467.5V471.0M965.71 467.5V471.0M971.57 467.5V471.0M983.29 467.5V471.0M989.14 467.5V471.0M995.00 467.5V471.0M1000.86 467.5V471.0M1006.71 467.5V471.0M1012.57 467.5V471.0M1018.43 467.5V471.0M1024.29 467.5V471.0M1030.14 467.5V471.0M1036.00 467.5V471.0M1041.86 467.5V471.0M1047.71 467.5V471.0M1053.57 467.5V471.0M1059.43 467.5V471.0M1065.29 467.5V471.0M1071.14 467.5V471.0M1077.00 467.5V471.0M1082.86 467.5V471.0M1088.71 467.5V471.0M1094.57 467.5V471.0M1100.43 467.5V471.0M1106.29 467.5V471.0M1112.14 467.5V471.0M139.86 635.3V638.8M145.71 635.3V638.8M151.57 635.3V638.8M157.43 635.3V638.8M163.29 635.3V638.8M169.14 635.3V638.8M175.00 635.3V638.8M180.86 635.3V638.8M186.71 635.3V638.8M192.57 635.3V638.8M198.43 635.3V638.8M204.29 635.3V638.8M210.14 635.3V638.8M216.00 635.3V638.8M221.86 635.3V638.8M227.71 635.3V638.8M233.57 635.3V638.8M239.43 635.3V638.8M245.29 635.3V638.8M251.14 635.3V638.8M257.00 635.3V638.8M262.86 635.3V638.8M268.71 635.3V638.8M280.43 635.3V638.8M286.29 635.3V638.8M292.14 635.3V638.8M298.00 635.3V638.8M303.86 635.3V638.8M309.71 635.3V638.8M315.57 635.3V638.8M321.43 635.3V638.8M327.29 635.3V638.8M333.14 635.3V638.8M339.00 635.3V638.8M344.86 635.3V638.8M350.71 635.3V638.8M356.57 635.3V638.8M362.43 635.3V638.8M368.29 635.3V638.8M374.14 635.3V638.8M380.00 635.3V638.8M385.86 635.3V638.8M391.71 635.3V638.8M397.57 635.3V638.8M403.43 635.3V638.8M409.29 635.3V638.8M421.00 635.3V638.8M426.86 635.3V638.8M432.71 635.3V638.8M438.57 635.3V638.8M444.43 635.3V638.8M450.29 635.3V638.8M456.14 635.3V638.8M462.00 635.3V638.8M467.86 635.3V638.8M473.71 635.3V638.8M479.57 635.3V638.8M485.43 635.3V638.8M491.29 635.3V638.8M497.14 635.3V638.8M503.00 635.3V638.8M508.86 635.3V638.8M514.71 635.3V638.8M520.57 635.3V638.8M526.43 635.3V638.8M532.29 635.3V638.8M538.14 635.3V638.8M544.00 635.3V638.8M549.86 635.3V638.8M561.57 635.3V638.8M567.43 635.3V638.8M573.29 635.3V638.8M579.14 635.3V638.8M585.00 635.3V638.8M590.86 635.3V638.8M596.71 635.3V638.8M602.57 635.3V638.8M608.43 635.3V638.8M614.29 635.3V638.8M620.14 635.3V638.8M626.00 635.3V638.8M631.86 635.3V638.8M637.71 635.3V638.8M643.57 635.3V638.8M649.43 635.3V638.8M655.29 635.3V638.8M661.14 635.3V638.8M667.00 635.3V638.8M672.86 635.3V638.8M678.71 635.3V638.8M684.57 635.3V638.8M690.43 635.3V638.8M702.14 635.3V638.8M708.00 635.3V638.8M713.86 635.3V638.8M719.71 635.3V638.8M725.57 635.3V638.8M731.43 635.3V638.8M737.29 635.3V638.8M743.14 635.3V638.8M749.00 635.3V638.8M754.86 635.3V638.8M760.71 635.3V638.8M766.57 635.3V638.8M772.43 635.3V638.8M778.29 635.3V638.8M784.14 635.3V638.8M790.00 635.3V638.8M795.86 635.3V638.8M801.71 635.3V638.8M807.57 635.3V638.8M813.43 635.3V638.8M819.29 635.3V638.8M825.14 635.3V638.8M831.00 635.3V638.8M842.71 635.3V638.8M848.57 635.3V638.8M854.43 635.3V638.8M860.29 635.3V638.8M866.14 635.3V638.8M872.00 635.3V638.8M877.86 635.3V638.8M883.71 635.3V638.8M889.57 635.3V638.8M895.43 635.3V638.8M901.29 635.3V638.8M907.14 635.3V638.8M913.00 635.3V638.8M918.86 635.3V638.8M924.71 635.3V638.8M930.57 635.3V638.8M936.43 635.3V638.8M942.29 635.3V638.8M948.14 635.3V638.8M954.00 635.3V638.8M959.86 635.3V638.8M965.71 635.3V638.8M971.57 635.3V638.8M983.29 635.3V638.8M989.14 635.3V638.8M995.00 635.3V638.8M1000.86 635.3V638.8M1006.71 635.3V638.8M1012.57 635.3V638.8M1018.43 635.3V638.8M1024.29 635.3V638.8M1030.14 635.3V638.8M1036.00 635.3V638.8M1041.86 635.3V638.8M1047.71 635.3V638.8M1053.57 635.3V638.8M1059.43 635.3V638.8M1065.29 635.3V638.8M1071.14 635.3V638.8M1077.00 635.3V638.8M1082.86 635.3V638.8M1088.71 635.3V638.8M1094.57 635.3V638.8M1100.43 635.3V638.8M1106.29 635.3V638.8M1112.14 635.3V638.8M139.86 807.0V810.5M145.71 807.0V810.5M151.57 807.0V810.5M157.43 807.0V810.5M163.29 807.0V810.5M169.14 807.0V810.5M175.00 807.0V810.5M180.86 807.0V810.5M186.71 807.0V810.5M192.57 807.0V810.5M198.43 807.0V810.5M204.29 807.0V810.5M210.14 807.0V810.5M216.00 807.0V810.5M221.86 807.0V810.5M227.71 807.0V810.5M233.57 807.0V810.5M239.43 807.0V810.5M245.29 807.0V810.5M251.14 807.0V810.5M257.00 807.0V810.5M262.86 807.0V810.5M268.71 807.0V810.5M280.43 807.0V810.5M286.29 807.0V810.5M292.14 807.0V810.5M298.00 807.0V810.5M303.86 807.0V810.5M309.71 807.0V810.5M315.57 807.0V810.5M321.43 807.0V810.5M327.29 807.0V810.5M333.14 807.0V810.5M339.00 807.0V810.5M344.86 807.0V810.5M350.71 807.0V810.5M356.57 807.0V810.5M362.43 807.0V810.5M368.29 807.0V810.5M374.14 807.0V810.5M380.00 807.0V810.5M385.86 807.0V810.5M391.71 807.0V810.5M397.57 807.0V810.5M403.43 807.0V810.5M409.29 807.0V810.5M421.00 807.0V810.5M426.86 807.0V810.5M432.71 807.0V810.5M438.57 807.0V810.5M444.43 807.0V810.5M450.29 807.0V810.5M456.14 807.0V810.5M462.00 807.0V810.5M467.86 807.0V810.5M473.71 807.0V810.5M479.57 807.0V810.5M485.43 807.0V810.5M491.29 807.0V810.5M497.14 807.0V810.5M503.00 807.0V810.5M508.86 807.0V810.5M514.71 807.0V810.5M520.57 807.0V810.5M526.43 807.0V810.5M532.29 807.0V810.5M538.14 807.0V810.5M544.00 807.0V810.5M549.86 807.0V810.5M561.57 807.0V810.5M567.43 807.0V810.5M573.29 807.0V810.5M579.14 807.0V810.5M585.00 807.0V810.5M590.86 807.0V810.5M596.71 807.0V810.5M602.57 807.0V810.5M608.43 807.0V810.5M614.29 807.0V810.5M620.14 807.0V810.5M626.00 807.0V810.5M631.86 807.0V810.5M637.71 807.0V810.5M643.57 807.0V810.5M649.43 807.0V810.5M655.29 807.0V810.5M661.14 807.0V810.5M667.00 807.0V810.5M672.86 807.0V810.5M678.71 807.0V810.5M684.57 807.0V810.5M690.43 807.0V810.5M702.14 807.0V810.5M708.00 807.0V810.5M713.86 807.0V810.5M719.71 807.0V810.5M725.57 807.0V810.5M731.43 807.0V810.5M737.29 807.0V810.5M743.14 807.0V810.5M749.00 807.0V810.5M754.86 807.0V810.5M760.71 807.0V810.5M766.57 807.0V810.5M772.43 807.0V810.5M778.29 807.0V810.5M784.14 807.0V810.5M790.00 807.0V810.5M795.86 807.0V810.5M801.71 807.0V810.5M807.57 807.0V810.5M813.43 807.0V810.5M819.29 807.0V810.5M825.14 807.0V810.5M831.00 807.0V810.5M842.71 807.0V810.5M848.57 807.0V810.5M854.43 807.0V810.5M860.29 807.0V810.5M866.14 807.0V810.5M872.00 807.0V810.5M877.86 807.0V810.5M883.71 807.0V810.5M889.57 807.0V810.5M895.43 807.0V810.5M901.29 807.0V810.5M907.14 807.0V810.5M913.00 807.0V810.5M918.86 807.0V810.5M924.71 807.0V810.5M930.57 807.0V810.5M936.43 807.0V810.5M942.29 807.0V810.5M948.14 807.0V810.5M954.00 807.0V810.5M959.86 807.0V810.5M965.71 807.0V810.5M971.57 807.0V810.5M983.29 807.0V810.5M989.14 807.0V810.5M995.00 807.0V810.5M1000.86 807.0V810.5M1006.71 807.0V810.5M1012.57 807.0V810.5M1018.43 807.0V810.5M1024.29 807.0V810.5M1030.14 807.0V810.5M1036.00 807.0V810.5M1041.86 807.0V810.5M1047.71 807.0V810.5M1053.57 807.0V810.5M1059.43 807.0V810.5M1065.29 807.0V810.5M1071.14 807.0V810.5M1077.00 807.0V810.5M1082.86 807.0V810.5M1088.71 807.0V810.5M1094.57 807.0V810.5M1100.43 807.0V810.5M1106.29 807.0V810.5M1112.14 807.0V810.5" stroke="#d0d0d0" stroke-width="0.9" fill="none"/>
<path d="M274.57 108.5V115.8M415.14 108.5V115.8M555.71 108.5V115.8M696.29 108.5V115.8M836.86 108.5V115.8M977.43 108.5V115.8M274.57 183.2V197.8M415.14 183.2V197.8M555.71 183.2V197.8M696.29 183.2V197.8M836.86 183.2V197.8M977.43 183.2V197.8M274.57 264.2V278.8M415.14 264.2V278.8M555.71 264.2V278.8M696.29 264.2V278.8M836.86 264.2V278.8M977.43 264.2V278.8M274.57 346.2V360.8M415.14 346.2V360.8M555.71 346.2V360.8M696.29 346.2V360.8M836.86 346.2V360.8M977.43 346.2V360.8M274.57 427.2V434.5M415.14 427.2V434.5M555.71 427.2V434.5M696.29 427.2V434.5M836.86 427.2V434.5M977.43 427.2V434.5M274.57 467.5V474.8M415.14 467.5V474.8M555.71 467.5V474.8M696.29 467.5V474.8M836.86 467.5V474.8M977.43 467.5V474.8M274.57 631.5V638.8M415.14 631.5V638.8M555.71 631.5V638.8M696.29 631.5V638.8M836.86 631.5V638.8M977.43 631.5V638.8M274.57 803.2V810.5M415.14 803.2V810.5M555.71 803.2V810.5M696.29 803.2V810.5M836.86 803.2V810.5M977.43 803.2V810.5" stroke="#f0f0f0" stroke-width="1.1" fill="none"/>
<text x="133.1" y="77.0" font-size="21.65" fill="#dedede" text-anchor="start" >Geospace Timeline : Latest 7 Days</text>
<text x="133.1" y="101.2" font-size="15.67" fill="#dedede" text-anchor="start" >Solar Wind Predicted at Earth</text>
<text x="661.5" y="77.3" font-size="15.67" fill="#dedede" text-anchor="start" >Current Time : 2025-11-23 11:59:06 UTC</text>
<text x="680.3" y="100.8" font-size="15.67" fill="#dedede" text-anchor="start" >Valid Time : 2025-11-23 12:40:00 (41 mins ahead)</text>
<text x="133.5" y="457.6" font-size="15.67" fill="#dedede" text-anchor="start" >Geospace Model Predicted Kp and DST (Ground Truth Data : SWPC Kp and Kyoto quick-look DST)</text>
<text x="22.5" y="855.6" font-size="15.67" fill="#dedede" text-anchor="start" >Space Weather Prediction Center</text>
<text x="1171" y="855.6" font-size="15.67" fill="#dedede" text-anchor="end" >Version 2.0</text>
<text x="127.4" y="139.60000000000002" font-size="15.67" fill="#dedede" text-anchor="end" >10</text>
<text x="127.4" y="155.5" font-size="15.67" fill="#dedede" text-anchor="end" >0</text>
<text x="127.4" y="171.3" font-size="15.67" fill="#dedede" text-anchor="end" >-10</text>
<text x="127.4" y="216.5" font-size="15.67" fill="#dedede" text-anchor="end" >30</text>
<text x="127.4" y="236.60000000000002" font-size="15.67" fill="#dedede" text-anchor="end" >20</text>
<text x="127.4" y="256.9" font-size="15.67" fill="#dedede" text-anchor="end" >10</text>
<text x="127.4" y="312.90000000000003" font-size="15.67" fill="#dedede" text-anchor="end" >500</text>
<text x="127.4" y="333.90000000000003" font-size="15.67" fill="#dedede" text-anchor="end" >400</text>
<text x="121" y="373.0" font-size="15.67" fill="#dedede" text-anchor="end">10</text>
<text x="121.9" y="363.8" font-size="9.5" fill="#dedede">6</text>
<text x="121" y="392.4" font-size="15.67" fill="#dedede" text-anchor="end">10</text>
<text x="121.9" y="383.2" font-size="9.5" fill="#dedede">5</text>
<text x="121" y="411.7" font-size="15.67" fill="#dedede" text-anchor="end">10</text>
<text x="121.9" y="402.5" font-size="9.5" fill="#dedede">4</text>
<text x="121" y="431.4" font-size="15.67" fill="#dedede" text-anchor="end">10</text>
<text x="121.9" y="422.2" font-size="9.5" fill="#dedede">3</text>
<text x="127.4" y="638.01" font-size="15.67" fill="#dedede" text-anchor="end" >0</text>
<text x="127.4" y="620.42" font-size="15.67" fill="#dedede" text-anchor="end" >1</text>
<text x="127.4" y="602.8299999999999" font-size="15.67" fill="#dedede" text-anchor="end" >2</text>
<text x="127.4" y="585.2399999999999" font-size="15.67" fill="#dedede" text-anchor="end" >3</text>
<text x="127.4" y="567.65" font-size="15.67" fill="#dedede" text-anchor="end" >4</text>
<text x="127.4" y="550.06" font-size="15.67" fill="#dedede" text-anchor="end" >5</text>
<text x="127.4" y="532.4699999999999" font-size="15.67" fill="#dedede" text-anchor="end" >6</text>
<text x="127.4" y="514.88" font-size="15.67" fill="#dedede" text-anchor="end" >7</text>
<text x="127.4" y="497.28999999999996" font-size="15.67" fill="#dedede" text-anchor="end" >8</text>
<text x="127.4" y="479.7" font-size="15.67" fill="#dedede" text-anchor="end" >9</text>
<text x="127.4" y="698.6999999999999" font-size="15.67" fill="#dedede" text-anchor="end" >0</text>
<text x="127.4" y="731.0999999999999" font-size="15.67" fill="#dedede" text-anchor="end" >-20</text>
<text x="127.4" y="763.6999999999999" font-size="15.67" fill="#dedede" text-anchor="end" >-40</text>
<text x="127.4" y="795.9" font-size="15.67" fill="#dedede" text-anchor="end" >-60</text>
<text x="133.5" y="827.8" font-size="17.95" fill="#dedede" text-anchor="middle" >Nov 17</text>
<text x="274.07142857142856" y="827.8" font-size="17.95" fill="#dedede" text-anchor="middle" >Nov 18</text>
<text x="414.64285714285717" y="827.8" font-size="17.95" fill="#dedede" text-anchor="middle" >Nov 19</text>
<text x="555.2142857142858" y="827.8" font-size="17.95" fill="#dedede" text-anchor="middle" >Nov 20</text>
<text x="695.7857142857143" y="827.8" font-size="17.95" fill="#dedede" text-anchor="middle" >Nov 21</text>
<text x="836.3571428571429" y="827.8" font-size="17.95" fill="#dedede" text-anchor="middle" >Nov 22</text>
<text x="976.9285714285716" y="827.8" font-size="17.95" fill="#dedede" text-anchor="middle" >Nov 23</text>
<text x="1117.5" y="827.8" font-size="17.95" fill="#dedede" text-anchor="middle" >Nov 24</text>
<text transform="translate(44.7 150) rotate(-90)" font-size="15.67" fill="#dedede" text-anchor="middle">Btotal</text>
<text transform="translate(62.6 150) rotate(-90)" font-size="15.67" fill="#e00000" text-anchor="middle">Bz</text>
<text transform="translate(80.8 150) rotate(-90)" font-size="15.67" fill="#dedede" text-anchor="middle">nT</text>
<text transform="translate(62.6 233.4) rotate(-90)" font-size="15.67" fill="#e08000" text-anchor="middle">Density</text>
<text transform="translate(80.8 233.3) rotate(-90)" font-size="15.67" fill="#e08000" text-anchor="middle">p/cm<tspan font-size="9" dy="-8.5">3</tspan></text>
<text transform="translate(62.6 305) rotate(-90)" font-size="15.67" fill="#d8d800" text-anchor="middle">Speed</text>
<text transform="translate(80.8 304.5) rotate(-90)" font-size="15.67" fill="#d8d800" text-anchor="middle">km/s</text>
<text transform="translate(62.6 390) rotate(-90)" font-size="15.67" fill="#00b000" text-anchor="middle">Temperature</text>
<text transform="translate(80.8 390) rotate(-90)" font-size="15.67" fill="#00b000" text-anchor="middle">K</text>
<text transform="translate(62.6 544.3) rotate(-90)" font-size="15.67" fill="#8cb63c" text-anchor="middle">Pred. Est. Kp</text>
<text transform="translate(80.8 544.4) rotate(-90)" font-size="15.67" fill="#00c8c8" text-anchor="middle">SWPC Kp</text>
<text transform="translate(62.6 716.4) rotate(-90)" font-size="15.67" fill="#dedede" text-anchor="middle">Geospace DST (nT)</text>
<text transform="translate(80.8 717) rotate(-90)" font-size="15.67" fill="#e00000" text-anchor="middle">Kyoto DST</text>
</svg>
</body></html>
